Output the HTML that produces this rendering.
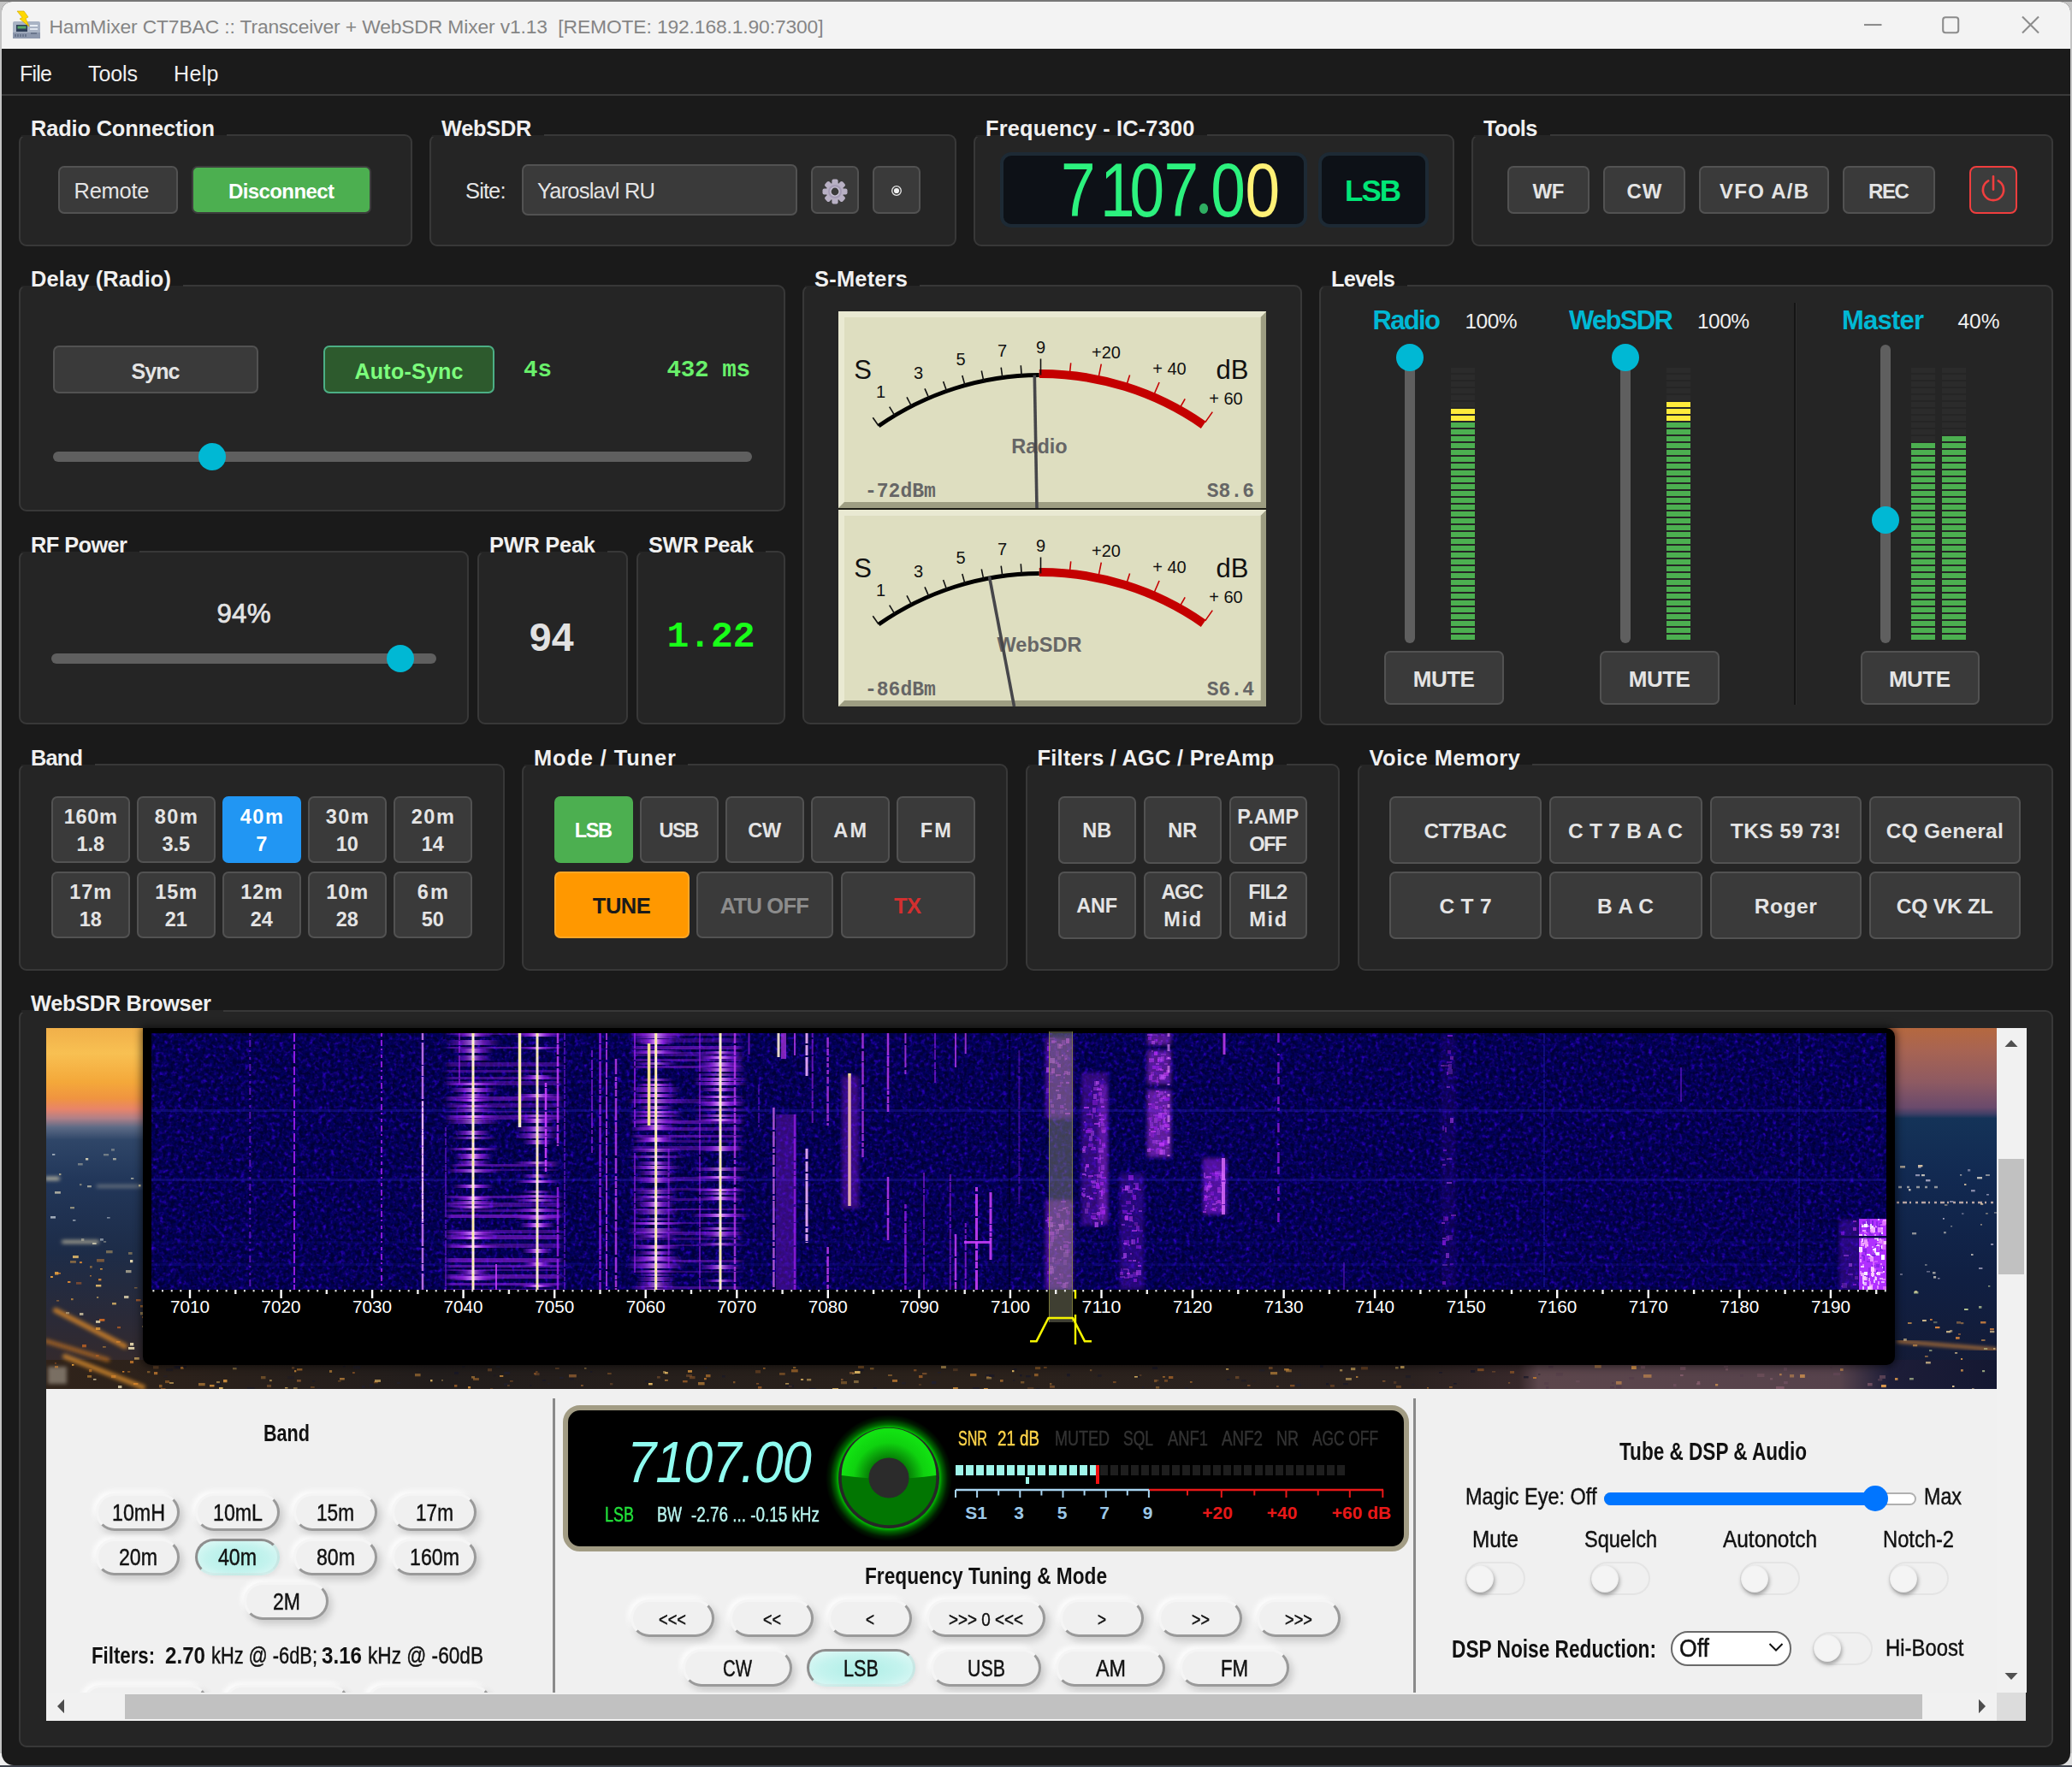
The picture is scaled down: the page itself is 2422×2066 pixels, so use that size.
<!DOCTYPE html>
<html><head><meta charset="utf-8"><title>HamMixer</title>
<style>
html,body{margin:0;padding:0;background:#1a1a1a;}
body{width:2422px;height:2066px;position:relative;overflow:hidden;font-family:"Liberation Sans",sans-serif;}
body div, body svg.abs{position:absolute;box-sizing:content-box;}
.t{white-space:pre;}
.seg{font:400 89px/96px "Liberation Sans",sans-serif;height:96px;transform:scaleX(0.82);transform-origin:0 50%;letter-spacing:-0.48px;}
.sdot{display:inline-block;width:17.7px;letter-spacing:0;text-align:center;font:700 76px/96px "Liberation Serif",serif;color:#2fae62;position:relative;top:-4px;left:-2px;}
</style></head><body>
<div style="left:0;top:0;width:2422px;height:2066px;background:#c4c4c4;"></div>
<div style="left:0;top:0;width:2422px;height:2px;background:#777;"></div>
<div style="left:0;top:2063px;width:2422px;height:3px;background:#3e424c;"></div>
<div style="left:0;top:2050px;width:16px;height:14px;background:#eee;"></div>
<div style="left:2406px;top:2050px;width:16px;height:14px;background:#ddd;"></div>
<div style="left:2px;top:2px;width:2418px;height:2062px;background:#1a1a1a;border-radius:12px 12px 14px 14px;"></div>
<div style="left:2.0px;top:2.0px;width:2418.0px;height:55.0px;background:#f3f3f3;border-radius:12px 12px 0 0;"></div>
<div style="left:2.0px;top:57.0px;width:2418.0px;height:1.0px;background:#fff;"></div>
<svg class="abs" style="left:14px;top:12px" width="34" height="34" viewBox="0 0 34 34"><rect x="1" y="13" width="32" height="20" rx="2" fill="#a9b3c4"/><rect x="1" y="26" width="32" height="7" fill="#8d98ad"/><rect x="5" y="17" width="13" height="8" fill="#2f3f58"/><rect x="6.5" y="18.5" width="10" height="3" fill="#58a868"/><rect x="21" y="17" width="9" height="2" fill="#e8edf4"/><rect x="21" y="21" width="9" height="2" fill="#dfe5ee"/><path d="M4 28 v3 M7 28 v3 M10 28 v3 M13 28 v3 M16 28 v3 M22 27 h7" stroke="#5f6b82" stroke-width="1.5"/><path d="M6 1 L14 1 L19 8 L16 9.5 L20 19 L9 10 L12 8.5 Z" fill="#ffd800" stroke="#c9a400" stroke-width="0.6"/></svg>
<div class="t" style="left:57.5px;top:16.0px;height:30px;line-height:30px;font:400 22.8px/30px 'Liberation Sans',sans-serif;color:#858585;letter-spacing:-0.11px;">HamMixer CT7BAC :: Transceiver + WebSDR Mixer v1.13  [REMOTE: 192.168.1.90:7300]</div>
<svg class="abs" style="left:2170px;top:8px" width="240" height="44" viewBox="0 0 240 44"><g stroke="#8c8c8c" stroke-width="2.1" fill="none"><path d="M9 21 H29.5"/><rect x="101.2" y="12.2" width="18" height="18" rx="3"/><path d="M194 11.5 L213 30.5 M213 11.5 L194 30.5"/></g></svg>
<div style="left:2.0px;top:57.0px;width:2418.0px;height:53.0px;background:#1b1b1b;"></div>
<div style="left:2.0px;top:110.0px;width:2418.0px;height:2.0px;background:#3a3a3a;"></div>
<div class="t" style="left:23.0px;top:70.0px;height:32px;line-height:32px;font:400 25px/32px 'Liberation Sans',sans-serif;color:#f0f0f0;letter-spacing:-0.76px;">File</div>
<div class="t" style="left:103.0px;top:70.0px;height:32px;line-height:32px;font:400 25px/32px 'Liberation Sans',sans-serif;color:#f0f0f0;letter-spacing:-0.09px;">Tools</div>
<div class="t" style="left:203.0px;top:70.0px;height:32px;line-height:32px;font:400 25px/32px 'Liberation Sans',sans-serif;color:#f0f0f0;letter-spacing:0.36px;">Help</div>
<div style="left:22.0px;top:157.0px;width:456.0px;height:127.0px;border:2px solid #383838;border-radius:9px;background:#252525;"></div>
<div style="left:25.0px;top:156.0px;width:240.0px;height:4.0px;background:#252525;"></div>
<div style="left:24.0px;top:143.0px;width:241.0px;height:14.5px;background:#1a1a1a;"></div>
<div class="t" style="left:36.0px;top:133.9px;height:33px;line-height:33px;font:700 25.4px/33px 'Liberation Sans',sans-serif;color:#f0f0f0;letter-spacing:-0.15px;">Radio Connection</div>
<div style="left:68.0px;top:194.0px;width:136.0px;height:52.0px;border:2px solid #525252;border-radius:7px;background:#3a3a3a;"></div>
<div class="t" style="left:86.5px;top:207.0px;height:33px;line-height:33px;font:400 25.5px/33px 'Liberation Sans',sans-serif;color:#e4e4e4;letter-spacing:-0.26px;">Remote</div>
<div style="left:224.0px;top:194.0px;width:206.0px;height:52.0px;border:2px solid #3d3d3d;border-radius:7px;background:#4caf50;"></div>
<div class="t" style="left:267.0px;top:208.0px;height:31px;line-height:31px;font:700 24px/31px 'Liberation Sans',sans-serif;color:#ffffff;letter-spacing:-0.60px;">Disconnect</div>
<div style="left:502.0px;top:157.0px;width:612.0px;height:127.0px;border:2px solid #383838;border-radius:9px;background:#252525;"></div>
<div style="left:505.0px;top:156.0px;width:130.5px;height:4.0px;background:#252525;"></div>
<div style="left:504.0px;top:143.0px;width:131.5px;height:14.5px;background:#1a1a1a;"></div>
<div class="t" style="left:516.0px;top:133.9px;height:33px;line-height:33px;font:700 25.4px/33px 'Liberation Sans',sans-serif;color:#f0f0f0;letter-spacing:-0.26px;">WebSDR</div>
<div class="t" style="left:544.0px;top:206.5px;height:33px;line-height:33px;font:400 25.5px/33px 'Liberation Sans',sans-serif;color:#e4e4e4;letter-spacing:-0.88px;">Site:</div>
<div style="left:610.0px;top:192.0px;width:318.0px;height:56.0px;border:2px solid #525252;border-radius:7px;background:#3a3a3a;"></div>
<div class="t" style="left:628.0px;top:206.5px;height:33px;line-height:33px;font:400 25.5px/33px 'Liberation Sans',sans-serif;color:#e4e4e4;letter-spacing:-0.81px;">Yaroslavl RU</div>
<div style="left:948.0px;top:194.0px;width:52.0px;height:52.0px;border:2px solid #525252;border-radius:7px;background:#3a3a3a;"></div>
<div style="left:1020.0px;top:194.0px;width:52.0px;height:52.0px;border:2px solid #525252;border-radius:7px;background:#3a3a3a;"></div>
<svg class="abs" style="left:960.3px;top:208px" width="32" height="32" viewBox="-16 -16 32 32"><g fill="#b8b0c4"><rect x="-3.6" y="-14.5" width="7.2" height="8" rx="2" transform="rotate(0)"/><rect x="-3.6" y="-14.5" width="7.2" height="8" rx="2" transform="rotate(45)"/><rect x="-3.6" y="-14.5" width="7.2" height="8" rx="2" transform="rotate(90)"/><rect x="-3.6" y="-14.5" width="7.2" height="8" rx="2" transform="rotate(135)"/><rect x="-3.6" y="-14.5" width="7.2" height="8" rx="2" transform="rotate(180)"/><rect x="-3.6" y="-14.5" width="7.2" height="8" rx="2" transform="rotate(225)"/><rect x="-3.6" y="-14.5" width="7.2" height="8" rx="2" transform="rotate(270)"/><rect x="-3.6" y="-14.5" width="7.2" height="8" rx="2" transform="rotate(315)"/></g><circle r="10.2" fill="#b8b0c4"/><circle r="8" fill="#a59cb5"/><circle r="5.8" fill="#cbc4d6"/><circle r="4.4" fill="#3a3a3a"/></svg>
<svg class="abs" style="left:1038.2px;top:213.4px" width="20" height="20" viewBox="-10 -10 20 20"><circle r="5.3" fill="none" stroke="#e8e8e8" stroke-width="1.3"/><circle r="3.1" fill="#f0f0f0"/></svg>
<div style="left:1138.0px;top:157.0px;width:558.0px;height:127.0px;border:2px solid #383838;border-radius:9px;background:#252525;"></div>
<div style="left:1141.0px;top:156.0px;width:269.5px;height:4.0px;background:#252525;"></div>
<div style="left:1140.0px;top:143.0px;width:270.5px;height:14.5px;background:#1a1a1a;"></div>
<div class="t" style="left:1152.0px;top:133.9px;height:33px;line-height:33px;font:700 25.4px/33px 'Liberation Sans',sans-serif;color:#f0f0f0;letter-spacing:0.17px;">Frequency - IC-7300</div>
<div style="left:1168.5px;top:178.0px;width:351.0px;height:80.0px;border:4px solid #1d2a35;border-radius:13px;background:#0d1117;"></div>
<div style="left:1540.5px;top:178.0px;width:121.0px;height:80.0px;border:4px solid #1d2a35;border-radius:13px;background:#0d1117;"></div>
<div class="t" style="left:1572.0px;top:199.5px;height:46px;line-height:46px;font:700 35px/46px 'Liberation Sans',sans-serif;color:#00e676;letter-spacing:-2.00px;">LSB</div>
<div class="t seg" style="left:1239.7px;top:174px;color:#2cf27e;">7<span style="position:relative;left:7px">1</span>07<span class="sdot">.</span>0<span style="color:#fff176">0</span></div>
<div style="left:1720.0px;top:157.0px;width:676.0px;height:127.0px;border:2px solid #383838;border-radius:9px;background:#252525;"></div>
<div style="left:1723.0px;top:156.0px;width:88.5px;height:4.0px;background:#252525;"></div>
<div style="left:1722.0px;top:143.0px;width:89.5px;height:14.5px;background:#1a1a1a;"></div>
<div class="t" style="left:1734.0px;top:133.9px;height:33px;line-height:33px;font:700 25.4px/33px 'Liberation Sans',sans-serif;color:#f0f0f0;letter-spacing:-0.59px;">Tools</div>
<div style="left:1762.0px;top:194.0px;width:92.0px;height:52.0px;border:2px solid #525252;border-radius:7px;background:#3a3a3a;"></div>
<div class="t" style="left:1791.5px;top:208.0px;height:31px;line-height:31px;font:700 24px/31px 'Liberation Sans',sans-serif;color:#e4e4e4;letter-spacing:-0.31px;">WF</div>
<div style="left:1874.0px;top:194.0px;width:92.0px;height:52.0px;border:2px solid #525252;border-radius:7px;background:#3a3a3a;"></div>
<div class="t" style="left:1901.5px;top:208.0px;height:31px;line-height:31px;font:700 24px/31px 'Liberation Sans',sans-serif;color:#e4e4e4;letter-spacing:1.02px;">CW</div>
<div style="left:1986.0px;top:194.0px;width:148.0px;height:52.0px;border:2px solid #525252;border-radius:7px;background:#3a3a3a;"></div>
<div class="t" style="left:2010.0px;top:208.0px;height:31px;line-height:31px;font:700 24px/31px 'Liberation Sans',sans-serif;color:#e4e4e4;letter-spacing:1.26px;">VFO A/B</div>
<div style="left:2154.0px;top:194.0px;width:104.0px;height:52.0px;border:2px solid #525252;border-radius:7px;background:#3a3a3a;"></div>
<div class="t" style="left:2184.1px;top:208.0px;height:31px;line-height:31px;font:700 24px/31px 'Liberation Sans',sans-serif;color:#e4e4e4;letter-spacing:-1.44px;">REC</div>
<div style="left:2302.0px;top:194.0px;width:52.0px;height:52.0px;border:2px solid #f03e3e;border-radius:8px;background:#3c3c3c;"></div>
<svg class="abs" style="left:2310px;top:202px" width="40" height="40" viewBox="-20 -20 40 40"><g fill="none" stroke="#f03e3e" stroke-width="2.6" stroke-linecap="round"><path d="M-5.8 -10.6 A 12.1 12.1 0 1 0 5.8 -10.6"/><path d="M0 -15.6 V-0.4"/></g></svg>
<div style="left:22.0px;top:333.0px;width:892.0px;height:261.0px;border:2px solid #383838;border-radius:9px;background:#252525;"></div>
<div style="left:25.0px;top:332.0px;width:189.0px;height:4.0px;background:#252525;"></div>
<div style="left:24.0px;top:319.0px;width:190.0px;height:14.5px;background:#1a1a1a;"></div>
<div class="t" style="left:36.0px;top:309.9px;height:33px;line-height:33px;font:700 25.4px/33px 'Liberation Sans',sans-serif;color:#f0f0f0;letter-spacing:0.14px;">Delay (Radio)</div>
<div style="left:62.0px;top:404.0px;width:236.0px;height:52.0px;border:2px solid #525252;border-radius:7px;background:#3a3a3a;"></div>
<div class="t" style="left:153.5px;top:417.5px;height:32px;line-height:32px;font:700 25px/32px 'Liberation Sans',sans-serif;color:#e4e4e4;letter-spacing:-0.92px;">Sync</div>
<div style="left:378.0px;top:404.0px;width:196.0px;height:52.0px;border:2px solid #4caf85;border-radius:7px;background:#2d5a2d;"></div>
<div class="t" style="left:414.5px;top:417.5px;height:32px;line-height:32px;font:700 25px/32px 'Liberation Sans',sans-serif;color:#7dff7d;letter-spacing:0.25px;">Auto-Sync</div>
<div class="t" style="left:612.0px;top:414.5px;height:36px;line-height:36px;font:700 27.5px/36px 'Liberation Mono',monospace;color:#69f06b;">4s</div>
<div class="t" style="left:779.5px;top:414.5px;height:36px;line-height:36px;font:700 27.5px/36px 'Liberation Mono',monospace;color:#69f06b;letter-spacing:-0.30px;">432 ms</div>
<div style="left:61.5px;top:527.5px;width:817.0px;height:12.0px;background:#5f5f5f;border-radius:6px;"></div>
<div style="left:231.7px;top:517.5px;width:32.0px;height:32.0px;background:#00b8d4;border-radius:50%;"></div>
<div style="left:22.0px;top:644.0px;width:522.0px;height:199.0px;border:2px solid #383838;border-radius:9px;background:#252525;"></div>
<div style="left:25.0px;top:643.0px;width:138.0px;height:4.0px;background:#252525;"></div>
<div style="left:24.0px;top:630.0px;width:139.0px;height:14.5px;background:#1a1a1a;"></div>
<div class="t" style="left:36.0px;top:620.9px;height:33px;line-height:33px;font:700 25.4px/33px 'Liberation Sans',sans-serif;color:#f0f0f0;letter-spacing:-0.59px;">RF Power</div>
<div class="t" style="left:253.5px;top:697.0px;height:41px;line-height:41px;font:400 31.3px/41px 'Liberation Sans',sans-serif;color:#e4e4e4;letter-spacing:0.18px;-webkit-text-stroke:0.7px #e4e4e4;">94%</div>
<div style="left:60.0px;top:763.5px;width:450.0px;height:12.0px;background:#5f5f5f;border-radius:6px;"></div>
<div style="left:451.8px;top:753.5px;width:32.0px;height:32.0px;background:#00b8d4;border-radius:50%;"></div>
<div style="left:558.0px;top:644.0px;width:172.0px;height:199.0px;border:2px solid #383838;border-radius:9px;background:#252525;"></div>
<div style="left:561.0px;top:643.0px;width:149.0px;height:4.0px;background:#252525;"></div>
<div style="left:560.0px;top:630.0px;width:150.0px;height:14.5px;background:#1a1a1a;"></div>
<div class="t" style="left:572.0px;top:620.9px;height:33px;line-height:33px;font:700 25.4px/33px 'Liberation Sans',sans-serif;color:#f0f0f0;letter-spacing:-0.23px;">PWR Peak</div>
<div class="t" style="left:618.7px;top:715.0px;height:60px;line-height:60px;font:700 46.5px/60px 'Liberation Sans',sans-serif;color:#e2e2e2;letter-spacing:0.28px;">94</div>
<div style="left:744.0px;top:644.0px;width:170.0px;height:199.0px;border:2px solid #383838;border-radius:9px;background:#252525;"></div>
<div style="left:747.0px;top:643.0px;width:148.0px;height:4.0px;background:#252525;"></div>
<div style="left:746.0px;top:630.0px;width:149.0px;height:14.5px;background:#1a1a1a;"></div>
<div class="t" style="left:758.0px;top:620.9px;height:33px;line-height:33px;font:700 25.4px/33px 'Liberation Sans',sans-serif;color:#f0f0f0;letter-spacing:-0.38px;">SWR Peak</div>
<div class="t" style="left:779.5px;top:717.0px;height:56px;line-height:56px;font:700 43px/56px 'Liberation Mono',monospace;color:#19ff19;letter-spacing:-0.07px;">1.22</div>
<div style="left:938.0px;top:333.0px;width:580.0px;height:510.0px;border:2px solid #383838;border-radius:9px;background:#252525;"></div>
<div style="left:941.0px;top:332.0px;width:134.0px;height:4.0px;background:#252525;"></div>
<div style="left:940.0px;top:319.0px;width:135.0px;height:14.5px;background:#1a1a1a;"></div>
<div class="t" style="left:952.0px;top:309.9px;height:33px;line-height:33px;font:700 25.4px/33px 'Liberation Sans',sans-serif;color:#f0f0f0;letter-spacing:0.25px;">S-Meters</div>
<svg class="abs" style="left:979.5px;top:364px" width="500.5" height="230" viewBox="0 0 500.5 230"><rect width="500.5" height="230" fill="#dedec0"/><path d="M0 0 H500.5 L493.5 7 H7 V223 L0 230 Z" fill="#e9e9d2"/><path d="M500.5 230 H0 L7 223 H493.5 V7 L500.5 0 Z" fill="#9d9d82"/><rect x="7" y="7" width="486.5" height="216" fill="#dedec0"/><path d="M47.1 134.0 A331.0 331.0 0 0 1 234.8 74.5" fill="none" stroke="#000" stroke-width="4.8"/><path d="M234.8 73.0 A332.5 332.5 0 0 1 426.7 132.8" fill="none" stroke="#c40000" stroke-width="10"/><path d="M47.1 134.0 L40.3 124.2" stroke="#111" stroke-width="1.6"/><path d="M65.9 121.8 L59.7 111.6" stroke="#111" stroke-width="1.6"/><path d="M85.5 111.0 L80.0 100.3" stroke="#111" stroke-width="1.6"/><path d="M105.8 101.4 L101.0 90.4" stroke="#111" stroke-width="1.6"/><path d="M126.6 93.3 L122.6 82.0" stroke="#111" stroke-width="1.6"/><path d="M148.0 86.6 L144.8 75.0" stroke="#111" stroke-width="1.6"/><path d="M169.8 81.3 L167.3 69.5" stroke="#111" stroke-width="1.6"/><path d="M191.8 77.5 L190.2 65.6" stroke="#111" stroke-width="1.6"/><path d="M214.1 75.3 L213.3 63.3" stroke="#111" stroke-width="1.6"/><path d="M236.5 74.5 L236.5 55.5" stroke="#111" stroke-width="1.6"/><path d="M270.6 71.2 L271.7 60.3" stroke="#c40000" stroke-width="1.6"/><path d="M304.3 76.4 L307.3 61.7" stroke="#c40000" stroke-width="1.6"/><path d="M337.3 85.0 L340.6 74.5" stroke="#c40000" stroke-width="1.6"/><path d="M369.2 96.8 L375.1 83.0" stroke="#c40000" stroke-width="1.6"/><path d="M399.8 111.9 L405.2 102.3" stroke="#c40000" stroke-width="1.6"/><path d="M428.7 129.9 L437.3 117.6" stroke="#c40000" stroke-width="1.6"/><text x="28.5" y="79.0" font-family="'Liberation Sans',sans-serif" font-size="31" font-weight="400" fill="#111" text-anchor="middle">S</text><text x="49.5" y="101.0" font-family="'Liberation Sans',sans-serif" font-size="20" font-weight="400" fill="#111" text-anchor="middle">1</text><text x="93.5" y="79.0" font-family="'Liberation Sans',sans-serif" font-size="20" font-weight="400" fill="#111" text-anchor="middle">3</text><text x="143.0" y="63.0" font-family="'Liberation Sans',sans-serif" font-size="20" font-weight="400" fill="#111" text-anchor="middle">5</text><text x="191.5" y="53.0" font-family="'Liberation Sans',sans-serif" font-size="20" font-weight="400" fill="#111" text-anchor="middle">7</text><text x="236.5" y="49.0" font-family="'Liberation Sans',sans-serif" font-size="20" font-weight="400" fill="#111" text-anchor="middle">9</text><text x="313.0" y="54.5" font-family="'Liberation Sans',sans-serif" font-size="20" font-weight="400" fill="#111" text-anchor="middle">+20</text><text x="387.0" y="74.0" font-family="'Liberation Sans',sans-serif" font-size="20" font-weight="400" fill="#111" text-anchor="middle">+ 40</text><text x="460.5" y="79.0" font-family="'Liberation Sans',sans-serif" font-size="31" font-weight="400" fill="#111" text-anchor="middle">dB</text><text x="453.0" y="109.0" font-family="'Liberation Sans',sans-serif" font-size="20" font-weight="400" fill="#111" text-anchor="middle">+ 60</text><text x="235.0" y="166.0" font-family="'Liberation Sans',sans-serif" font-size="23.5" font-weight="700" fill="#666" text-anchor="middle">Radio</text><text x="31.0" y="216.5" font-family="'Liberation Mono',monospace" font-size="23" font-weight="700" fill="#666" text-anchor="start">-72dBm</text><text x="486.0" y="216.5" font-family="'Liberation Mono',monospace" font-size="23" font-weight="700" fill="#666" text-anchor="end">S8.6</text><path d="M229.3 74.5 L232 230" stroke="#46464a" stroke-width="3.6"/></svg>
<div style="left:979.5px;top:594.0px;width:500.5px;height:2.3px;background:#1c1c14;"></div>
<svg class="abs" style="left:979.5px;top:596.3px" width="500.5" height="230" viewBox="0 0 500.5 230"><rect width="500.5" height="230" fill="#dedec0"/><path d="M0 0 H500.5 L493.5 7 H7 V223 L0 230 Z" fill="#e9e9d2"/><path d="M500.5 230 H0 L7 223 H493.5 V7 L500.5 0 Z" fill="#9d9d82"/><rect x="7" y="7" width="486.5" height="216" fill="#dedec0"/><path d="M47.1 134.0 A331.0 331.0 0 0 1 234.8 74.5" fill="none" stroke="#000" stroke-width="4.8"/><path d="M234.8 73.0 A332.5 332.5 0 0 1 426.7 132.8" fill="none" stroke="#c40000" stroke-width="10"/><path d="M47.1 134.0 L40.3 124.2" stroke="#111" stroke-width="1.6"/><path d="M65.9 121.8 L59.7 111.6" stroke="#111" stroke-width="1.6"/><path d="M85.5 111.0 L80.0 100.3" stroke="#111" stroke-width="1.6"/><path d="M105.8 101.4 L101.0 90.4" stroke="#111" stroke-width="1.6"/><path d="M126.6 93.3 L122.6 82.0" stroke="#111" stroke-width="1.6"/><path d="M148.0 86.6 L144.8 75.0" stroke="#111" stroke-width="1.6"/><path d="M169.8 81.3 L167.3 69.5" stroke="#111" stroke-width="1.6"/><path d="M191.8 77.5 L190.2 65.6" stroke="#111" stroke-width="1.6"/><path d="M214.1 75.3 L213.3 63.3" stroke="#111" stroke-width="1.6"/><path d="M236.5 74.5 L236.5 55.5" stroke="#111" stroke-width="1.6"/><path d="M270.6 71.2 L271.7 60.3" stroke="#c40000" stroke-width="1.6"/><path d="M304.3 76.4 L307.3 61.7" stroke="#c40000" stroke-width="1.6"/><path d="M337.3 85.0 L340.6 74.5" stroke="#c40000" stroke-width="1.6"/><path d="M369.2 96.8 L375.1 83.0" stroke="#c40000" stroke-width="1.6"/><path d="M399.8 111.9 L405.2 102.3" stroke="#c40000" stroke-width="1.6"/><path d="M428.7 129.9 L437.3 117.6" stroke="#c40000" stroke-width="1.6"/><text x="28.5" y="79.0" font-family="'Liberation Sans',sans-serif" font-size="31" font-weight="400" fill="#111" text-anchor="middle">S</text><text x="49.5" y="101.0" font-family="'Liberation Sans',sans-serif" font-size="20" font-weight="400" fill="#111" text-anchor="middle">1</text><text x="93.5" y="79.0" font-family="'Liberation Sans',sans-serif" font-size="20" font-weight="400" fill="#111" text-anchor="middle">3</text><text x="143.0" y="63.0" font-family="'Liberation Sans',sans-serif" font-size="20" font-weight="400" fill="#111" text-anchor="middle">5</text><text x="191.5" y="53.0" font-family="'Liberation Sans',sans-serif" font-size="20" font-weight="400" fill="#111" text-anchor="middle">7</text><text x="236.5" y="49.0" font-family="'Liberation Sans',sans-serif" font-size="20" font-weight="400" fill="#111" text-anchor="middle">9</text><text x="313.0" y="54.5" font-family="'Liberation Sans',sans-serif" font-size="20" font-weight="400" fill="#111" text-anchor="middle">+20</text><text x="387.0" y="74.0" font-family="'Liberation Sans',sans-serif" font-size="20" font-weight="400" fill="#111" text-anchor="middle">+ 40</text><text x="460.5" y="79.0" font-family="'Liberation Sans',sans-serif" font-size="31" font-weight="400" fill="#111" text-anchor="middle">dB</text><text x="453.0" y="109.0" font-family="'Liberation Sans',sans-serif" font-size="20" font-weight="400" fill="#111" text-anchor="middle">+ 60</text><text x="235.0" y="166.0" font-family="'Liberation Sans',sans-serif" font-size="23.5" font-weight="700" fill="#666" text-anchor="middle">WebSDR</text><text x="31.0" y="216.5" font-family="'Liberation Mono',monospace" font-size="23" font-weight="700" fill="#666" text-anchor="start">-86dBm</text><text x="486.0" y="216.5" font-family="'Liberation Mono',monospace" font-size="23" font-weight="700" fill="#666" text-anchor="end">S6.4</text><path d="M176.5 78.2 L205.5 230" stroke="#46464a" stroke-width="3.6"/></svg>
<div style="left:1542.0px;top:333.0px;width:854.0px;height:511.0px;border:2px solid #383838;border-radius:9px;background:#252525;"></div>
<div style="left:1545.0px;top:332.0px;width:100.0px;height:4.0px;background:#252525;"></div>
<div style="left:1544.0px;top:319.0px;width:101.0px;height:14.5px;background:#1a1a1a;"></div>
<div class="t" style="left:1556.0px;top:309.9px;height:33px;line-height:33px;font:700 25.4px/33px 'Liberation Sans',sans-serif;color:#f0f0f0;letter-spacing:-0.82px;">Levels</div>
<div class="t" style="left:1604.5px;top:355.0px;height:40px;line-height:40px;font:700 31px/40px 'Liberation Sans',sans-serif;color:#00b8d4;letter-spacing:-1.65px;">Radio</div>
<div class="t" style="left:1712.5px;top:360.0px;height:32px;line-height:32px;font:400 24.5px/32px 'Liberation Sans',sans-serif;color:#f0f0f0;letter-spacing:-0.55px;">100%</div>
<div style="left:1642.0px;top:403.0px;width:12.0px;height:349.0px;background:#5f5f5f;border-radius:6px;"></div>
<div style="left:1632.0px;top:402.0px;width:32.0px;height:32.0px;background:#00b8d4;border-radius:50%;"></div>
<div style="left:1695.7px;top:430.0px;width:28.3px;height:320.0px;"><div style="left:0;top:0px;width:28.3px;height:6px;background:#2b2b2b"></div><div style="left:0;top:8px;width:28.3px;height:6px;background:#2b2b2b"></div><div style="left:0;top:16px;width:28.3px;height:6px;background:#2b2b2b"></div><div style="left:0;top:24px;width:28.3px;height:6px;background:#2b2b2b"></div><div style="left:0;top:32px;width:28.3px;height:6px;background:#2b2b2b"></div><div style="left:0;top:40px;width:28.3px;height:6px;background:#2b2b2b"></div><div style="left:0;top:48px;width:28.3px;height:6px;background:#ffeb3b"></div><div style="left:0;top:56px;width:28.3px;height:6px;background:#ffeb3b"></div><div style="left:0;top:64px;width:28.3px;height:6px;background:#4caf50"></div><div style="left:0;top:72px;width:28.3px;height:6px;background:#4caf50"></div><div style="left:0;top:80px;width:28.3px;height:6px;background:#4caf50"></div><div style="left:0;top:88px;width:28.3px;height:6px;background:#4caf50"></div><div style="left:0;top:96px;width:28.3px;height:6px;background:#4caf50"></div><div style="left:0;top:104px;width:28.3px;height:6px;background:#4caf50"></div><div style="left:0;top:112px;width:28.3px;height:6px;background:#4caf50"></div><div style="left:0;top:120px;width:28.3px;height:6px;background:#4caf50"></div><div style="left:0;top:128px;width:28.3px;height:6px;background:#4caf50"></div><div style="left:0;top:136px;width:28.3px;height:6px;background:#4caf50"></div><div style="left:0;top:144px;width:28.3px;height:6px;background:#4caf50"></div><div style="left:0;top:152px;width:28.3px;height:6px;background:#4caf50"></div><div style="left:0;top:160px;width:28.3px;height:6px;background:#4caf50"></div><div style="left:0;top:168px;width:28.3px;height:6px;background:#4caf50"></div><div style="left:0;top:176px;width:28.3px;height:6px;background:#4caf50"></div><div style="left:0;top:184px;width:28.3px;height:6px;background:#4caf50"></div><div style="left:0;top:192px;width:28.3px;height:6px;background:#4caf50"></div><div style="left:0;top:200px;width:28.3px;height:6px;background:#4caf50"></div><div style="left:0;top:208px;width:28.3px;height:6px;background:#4caf50"></div><div style="left:0;top:216px;width:28.3px;height:6px;background:#4caf50"></div><div style="left:0;top:224px;width:28.3px;height:6px;background:#4caf50"></div><div style="left:0;top:232px;width:28.3px;height:6px;background:#4caf50"></div><div style="left:0;top:240px;width:28.3px;height:6px;background:#4caf50"></div><div style="left:0;top:248px;width:28.3px;height:6px;background:#4caf50"></div><div style="left:0;top:256px;width:28.3px;height:6px;background:#4caf50"></div><div style="left:0;top:264px;width:28.3px;height:6px;background:#4caf50"></div><div style="left:0;top:272px;width:28.3px;height:6px;background:#4caf50"></div><div style="left:0;top:280px;width:28.3px;height:6px;background:#4caf50"></div><div style="left:0;top:288px;width:28.3px;height:6px;background:#4caf50"></div><div style="left:0;top:296px;width:28.3px;height:6px;background:#4caf50"></div><div style="left:0;top:304px;width:28.3px;height:6px;background:#4caf50"></div><div style="left:0;top:312px;width:28.3px;height:6px;background:#4caf50"></div></div>
<div style="left:1618.0px;top:760.5px;width:135.5px;height:59.0px;border:2px solid #525252;border-radius:7px;background:#3a3a3a;"></div>
<div class="t" style="left:1651.8px;top:776.5px;height:34px;line-height:34px;font:700 26px/34px 'Liberation Sans',sans-serif;color:#e4e4e4;letter-spacing:-0.55px;">MUTE</div>
<div class="t" style="left:1834.0px;top:355.0px;height:40px;line-height:40px;font:700 31px/40px 'Liberation Sans',sans-serif;color:#00b8d4;letter-spacing:-1.67px;">WebSDR</div>
<div class="t" style="left:1984.0px;top:360.0px;height:32px;line-height:32px;font:400 24.5px/32px 'Liberation Sans',sans-serif;color:#f0f0f0;letter-spacing:-0.55px;">100%</div>
<div style="left:1893.8px;top:403.0px;width:12.0px;height:349.0px;background:#5f5f5f;border-radius:6px;"></div>
<div style="left:1883.8px;top:402.0px;width:32.0px;height:32.0px;background:#00b8d4;border-radius:50%;"></div>
<div style="left:1948.0px;top:430.0px;width:28.3px;height:320.0px;"><div style="left:0;top:0px;width:28.3px;height:6px;background:#2b2b2b"></div><div style="left:0;top:8px;width:28.3px;height:6px;background:#2b2b2b"></div><div style="left:0;top:16px;width:28.3px;height:6px;background:#2b2b2b"></div><div style="left:0;top:24px;width:28.3px;height:6px;background:#2b2b2b"></div><div style="left:0;top:32px;width:28.3px;height:6px;background:#2b2b2b"></div><div style="left:0;top:40px;width:28.3px;height:6px;background:#ffeb3b"></div><div style="left:0;top:48px;width:28.3px;height:6px;background:#ffeb3b"></div><div style="left:0;top:56px;width:28.3px;height:6px;background:#ffeb3b"></div><div style="left:0;top:64px;width:28.3px;height:6px;background:#4caf50"></div><div style="left:0;top:72px;width:28.3px;height:6px;background:#4caf50"></div><div style="left:0;top:80px;width:28.3px;height:6px;background:#4caf50"></div><div style="left:0;top:88px;width:28.3px;height:6px;background:#4caf50"></div><div style="left:0;top:96px;width:28.3px;height:6px;background:#4caf50"></div><div style="left:0;top:104px;width:28.3px;height:6px;background:#4caf50"></div><div style="left:0;top:112px;width:28.3px;height:6px;background:#4caf50"></div><div style="left:0;top:120px;width:28.3px;height:6px;background:#4caf50"></div><div style="left:0;top:128px;width:28.3px;height:6px;background:#4caf50"></div><div style="left:0;top:136px;width:28.3px;height:6px;background:#4caf50"></div><div style="left:0;top:144px;width:28.3px;height:6px;background:#4caf50"></div><div style="left:0;top:152px;width:28.3px;height:6px;background:#4caf50"></div><div style="left:0;top:160px;width:28.3px;height:6px;background:#4caf50"></div><div style="left:0;top:168px;width:28.3px;height:6px;background:#4caf50"></div><div style="left:0;top:176px;width:28.3px;height:6px;background:#4caf50"></div><div style="left:0;top:184px;width:28.3px;height:6px;background:#4caf50"></div><div style="left:0;top:192px;width:28.3px;height:6px;background:#4caf50"></div><div style="left:0;top:200px;width:28.3px;height:6px;background:#4caf50"></div><div style="left:0;top:208px;width:28.3px;height:6px;background:#4caf50"></div><div style="left:0;top:216px;width:28.3px;height:6px;background:#4caf50"></div><div style="left:0;top:224px;width:28.3px;height:6px;background:#4caf50"></div><div style="left:0;top:232px;width:28.3px;height:6px;background:#4caf50"></div><div style="left:0;top:240px;width:28.3px;height:6px;background:#4caf50"></div><div style="left:0;top:248px;width:28.3px;height:6px;background:#4caf50"></div><div style="left:0;top:256px;width:28.3px;height:6px;background:#4caf50"></div><div style="left:0;top:264px;width:28.3px;height:6px;background:#4caf50"></div><div style="left:0;top:272px;width:28.3px;height:6px;background:#4caf50"></div><div style="left:0;top:280px;width:28.3px;height:6px;background:#4caf50"></div><div style="left:0;top:288px;width:28.3px;height:6px;background:#4caf50"></div><div style="left:0;top:296px;width:28.3px;height:6px;background:#4caf50"></div><div style="left:0;top:304px;width:28.3px;height:6px;background:#4caf50"></div><div style="left:0;top:312px;width:28.3px;height:6px;background:#4caf50"></div></div>
<div style="left:1870.0px;top:760.5px;width:135.5px;height:59.0px;border:2px solid #525252;border-radius:7px;background:#3a3a3a;"></div>
<div class="t" style="left:1903.8px;top:776.5px;height:34px;line-height:34px;font:700 26px/34px 'Liberation Sans',sans-serif;color:#e4e4e4;letter-spacing:-0.55px;">MUTE</div>
<div style="left:2097.0px;top:354.0px;width:2.0px;height:470.0px;background:#141414;"></div>
<div style="left:2099.0px;top:354.0px;width:1.0px;height:470.0px;background:#2e2e2e;"></div>
<div class="t" style="left:2153.0px;top:355.0px;height:40px;line-height:40px;font:700 31px/40px 'Liberation Sans',sans-serif;color:#00b8d4;letter-spacing:-0.79px;">Master</div>
<div class="t" style="left:2288.5px;top:360.0px;height:32px;line-height:32px;font:400 24.5px/32px 'Liberation Sans',sans-serif;color:#f0f0f0;letter-spacing:-0.02px;">40%</div>
<div style="left:2197.7px;top:403.0px;width:12.0px;height:349.0px;background:#5f5f5f;border-radius:6px;"></div>
<div style="left:2187.7px;top:591.8px;width:32.0px;height:32.0px;background:#00b8d4;border-radius:50%;"></div>
<div style="left:2233.8px;top:430.0px;width:28.3px;height:320.0px;"><div style="left:0;top:0px;width:28.3px;height:6px;background:#2b2b2b"></div><div style="left:0;top:8px;width:28.3px;height:6px;background:#2b2b2b"></div><div style="left:0;top:16px;width:28.3px;height:6px;background:#2b2b2b"></div><div style="left:0;top:24px;width:28.3px;height:6px;background:#2b2b2b"></div><div style="left:0;top:32px;width:28.3px;height:6px;background:#2b2b2b"></div><div style="left:0;top:40px;width:28.3px;height:6px;background:#2b2b2b"></div><div style="left:0;top:48px;width:28.3px;height:6px;background:#2b2b2b"></div><div style="left:0;top:56px;width:28.3px;height:6px;background:#2b2b2b"></div><div style="left:0;top:64px;width:28.3px;height:6px;background:#2b2b2b"></div><div style="left:0;top:72px;width:28.3px;height:6px;background:#2b2b2b"></div><div style="left:0;top:80px;width:28.3px;height:6px;background:#2b2b2b"></div><div style="left:0;top:88px;width:28.3px;height:6px;background:#4caf50"></div><div style="left:0;top:96px;width:28.3px;height:6px;background:#4caf50"></div><div style="left:0;top:104px;width:28.3px;height:6px;background:#4caf50"></div><div style="left:0;top:112px;width:28.3px;height:6px;background:#4caf50"></div><div style="left:0;top:120px;width:28.3px;height:6px;background:#4caf50"></div><div style="left:0;top:128px;width:28.3px;height:6px;background:#4caf50"></div><div style="left:0;top:136px;width:28.3px;height:6px;background:#4caf50"></div><div style="left:0;top:144px;width:28.3px;height:6px;background:#4caf50"></div><div style="left:0;top:152px;width:28.3px;height:6px;background:#4caf50"></div><div style="left:0;top:160px;width:28.3px;height:6px;background:#4caf50"></div><div style="left:0;top:168px;width:28.3px;height:6px;background:#4caf50"></div><div style="left:0;top:176px;width:28.3px;height:6px;background:#4caf50"></div><div style="left:0;top:184px;width:28.3px;height:6px;background:#4caf50"></div><div style="left:0;top:192px;width:28.3px;height:6px;background:#4caf50"></div><div style="left:0;top:200px;width:28.3px;height:6px;background:#4caf50"></div><div style="left:0;top:208px;width:28.3px;height:6px;background:#4caf50"></div><div style="left:0;top:216px;width:28.3px;height:6px;background:#4caf50"></div><div style="left:0;top:224px;width:28.3px;height:6px;background:#4caf50"></div><div style="left:0;top:232px;width:28.3px;height:6px;background:#4caf50"></div><div style="left:0;top:240px;width:28.3px;height:6px;background:#4caf50"></div><div style="left:0;top:248px;width:28.3px;height:6px;background:#4caf50"></div><div style="left:0;top:256px;width:28.3px;height:6px;background:#4caf50"></div><div style="left:0;top:264px;width:28.3px;height:6px;background:#4caf50"></div><div style="left:0;top:272px;width:28.3px;height:6px;background:#4caf50"></div><div style="left:0;top:280px;width:28.3px;height:6px;background:#4caf50"></div><div style="left:0;top:288px;width:28.3px;height:6px;background:#4caf50"></div><div style="left:0;top:296px;width:28.3px;height:6px;background:#4caf50"></div><div style="left:0;top:304px;width:28.3px;height:6px;background:#4caf50"></div><div style="left:0;top:312px;width:28.3px;height:6px;background:#4caf50"></div></div>
<div style="left:2270.0px;top:430.0px;width:28.3px;height:320.0px;"><div style="left:0;top:0px;width:28.3px;height:6px;background:#2b2b2b"></div><div style="left:0;top:8px;width:28.3px;height:6px;background:#2b2b2b"></div><div style="left:0;top:16px;width:28.3px;height:6px;background:#2b2b2b"></div><div style="left:0;top:24px;width:28.3px;height:6px;background:#2b2b2b"></div><div style="left:0;top:32px;width:28.3px;height:6px;background:#2b2b2b"></div><div style="left:0;top:40px;width:28.3px;height:6px;background:#2b2b2b"></div><div style="left:0;top:48px;width:28.3px;height:6px;background:#2b2b2b"></div><div style="left:0;top:56px;width:28.3px;height:6px;background:#2b2b2b"></div><div style="left:0;top:64px;width:28.3px;height:6px;background:#2b2b2b"></div><div style="left:0;top:72px;width:28.3px;height:6px;background:#2b2b2b"></div><div style="left:0;top:80px;width:28.3px;height:6px;background:#4caf50"></div><div style="left:0;top:88px;width:28.3px;height:6px;background:#4caf50"></div><div style="left:0;top:96px;width:28.3px;height:6px;background:#4caf50"></div><div style="left:0;top:104px;width:28.3px;height:6px;background:#4caf50"></div><div style="left:0;top:112px;width:28.3px;height:6px;background:#4caf50"></div><div style="left:0;top:120px;width:28.3px;height:6px;background:#4caf50"></div><div style="left:0;top:128px;width:28.3px;height:6px;background:#4caf50"></div><div style="left:0;top:136px;width:28.3px;height:6px;background:#4caf50"></div><div style="left:0;top:144px;width:28.3px;height:6px;background:#4caf50"></div><div style="left:0;top:152px;width:28.3px;height:6px;background:#4caf50"></div><div style="left:0;top:160px;width:28.3px;height:6px;background:#4caf50"></div><div style="left:0;top:168px;width:28.3px;height:6px;background:#4caf50"></div><div style="left:0;top:176px;width:28.3px;height:6px;background:#4caf50"></div><div style="left:0;top:184px;width:28.3px;height:6px;background:#4caf50"></div><div style="left:0;top:192px;width:28.3px;height:6px;background:#4caf50"></div><div style="left:0;top:200px;width:28.3px;height:6px;background:#4caf50"></div><div style="left:0;top:208px;width:28.3px;height:6px;background:#4caf50"></div><div style="left:0;top:216px;width:28.3px;height:6px;background:#4caf50"></div><div style="left:0;top:224px;width:28.3px;height:6px;background:#4caf50"></div><div style="left:0;top:232px;width:28.3px;height:6px;background:#4caf50"></div><div style="left:0;top:240px;width:28.3px;height:6px;background:#4caf50"></div><div style="left:0;top:248px;width:28.3px;height:6px;background:#4caf50"></div><div style="left:0;top:256px;width:28.3px;height:6px;background:#4caf50"></div><div style="left:0;top:264px;width:28.3px;height:6px;background:#4caf50"></div><div style="left:0;top:272px;width:28.3px;height:6px;background:#4caf50"></div><div style="left:0;top:280px;width:28.3px;height:6px;background:#4caf50"></div><div style="left:0;top:288px;width:28.3px;height:6px;background:#4caf50"></div><div style="left:0;top:296px;width:28.3px;height:6px;background:#4caf50"></div><div style="left:0;top:304px;width:28.3px;height:6px;background:#4caf50"></div><div style="left:0;top:312px;width:28.3px;height:6px;background:#4caf50"></div></div>
<div style="left:2174.5px;top:760.5px;width:135.0px;height:59.0px;border:2px solid #525252;border-radius:7px;background:#3a3a3a;"></div>
<div class="t" style="left:2208.0px;top:776.5px;height:34px;line-height:34px;font:700 26px/34px 'Liberation Sans',sans-serif;color:#e4e4e4;letter-spacing:-0.55px;">MUTE</div>
<div style="left:22.0px;top:893.0px;width:563.5px;height:238.0px;border:2px solid #383838;border-radius:9px;background:#252525;"></div>
<div style="left:25.0px;top:892.0px;width:86.0px;height:4.0px;background:#252525;"></div>
<div style="left:24.0px;top:879.0px;width:87.0px;height:14.5px;background:#1a1a1a;"></div>
<div class="t" style="left:36.0px;top:869.9px;height:33px;line-height:33px;font:700 25.4px/33px 'Liberation Sans',sans-serif;color:#f0f0f0;letter-spacing:-0.83px;">Band</div>
<div style="left:60.0px;top:930.5px;width:87.5px;height:74.5px;border:2px solid #525252;border-radius:7px;background:#3a3a3a;"></div>
<div class="t" style="left:74.8px;top:939.8px;height:31px;line-height:31px;font:700 23.5px/31px 'Liberation Sans',sans-serif;color:#e4e4e4;letter-spacing:0.63px;">160m</div>
<div class="t" style="left:89.4px;top:971.7px;height:31px;line-height:31px;font:700 23.5px/31px 'Liberation Sans',sans-serif;color:#e4e4e4;">1.8</div>
<div style="left:160.0px;top:930.5px;width:87.5px;height:74.5px;border:2px solid #525252;border-radius:7px;background:#3a3a3a;"></div>
<div class="t" style="left:180.8px;top:939.8px;height:31px;line-height:31px;font:700 23.5px/31px 'Liberation Sans',sans-serif;color:#e4e4e4;letter-spacing:1.48px;">80m</div>
<div class="t" style="left:189.4px;top:971.7px;height:31px;line-height:31px;font:700 23.5px/31px 'Liberation Sans',sans-serif;color:#e4e4e4;">3.5</div>
<div style="left:260.0px;top:930.5px;width:87.5px;height:74.5px;border:2px solid #2196f3;border-radius:7px;background:#2196f3;"></div>
<div class="t" style="left:280.8px;top:939.8px;height:31px;line-height:31px;font:700 23.5px/31px 'Liberation Sans',sans-serif;color:#ffffff;letter-spacing:1.48px;">40m</div>
<div class="t" style="left:299.2px;top:971.7px;height:31px;line-height:31px;font:700 23.5px/31px 'Liberation Sans',sans-serif;color:#ffffff;">7</div>
<div style="left:360.0px;top:930.5px;width:87.5px;height:74.5px;border:2px solid #525252;border-radius:7px;background:#3a3a3a;"></div>
<div class="t" style="left:380.8px;top:939.8px;height:31px;line-height:31px;font:700 23.5px/31px 'Liberation Sans',sans-serif;color:#e4e4e4;letter-spacing:1.48px;">30m</div>
<div class="t" style="left:392.7px;top:971.7px;height:31px;line-height:31px;font:700 23.5px/31px 'Liberation Sans',sans-serif;color:#e4e4e4;">10</div>
<div style="left:460.0px;top:930.5px;width:87.5px;height:74.5px;border:2px solid #525252;border-radius:7px;background:#3a3a3a;"></div>
<div class="t" style="left:480.8px;top:939.8px;height:31px;line-height:31px;font:700 23.5px/31px 'Liberation Sans',sans-serif;color:#e4e4e4;letter-spacing:1.48px;">20m</div>
<div class="t" style="left:492.7px;top:971.7px;height:31px;line-height:31px;font:700 23.5px/31px 'Liberation Sans',sans-serif;color:#e4e4e4;">14</div>
<div style="left:60.0px;top:1018.5px;width:87.5px;height:74.5px;border:2px solid #525252;border-radius:7px;background:#3a3a3a;"></div>
<div class="t" style="left:81.2px;top:1027.8px;height:31px;line-height:31px;font:700 23.5px/31px 'Liberation Sans',sans-serif;color:#e4e4e4;letter-spacing:0.98px;">17m</div>
<div class="t" style="left:92.7px;top:1059.7px;height:31px;line-height:31px;font:700 23.5px/31px 'Liberation Sans',sans-serif;color:#e4e4e4;">18</div>
<div style="left:160.0px;top:1018.5px;width:87.5px;height:74.5px;border:2px solid #525252;border-radius:7px;background:#3a3a3a;"></div>
<div class="t" style="left:181.2px;top:1027.8px;height:31px;line-height:31px;font:700 23.5px/31px 'Liberation Sans',sans-serif;color:#e4e4e4;letter-spacing:0.98px;">15m</div>
<div class="t" style="left:192.7px;top:1059.7px;height:31px;line-height:31px;font:700 23.5px/31px 'Liberation Sans',sans-serif;color:#e4e4e4;">21</div>
<div style="left:260.0px;top:1018.5px;width:87.5px;height:74.5px;border:2px solid #525252;border-radius:7px;background:#3a3a3a;"></div>
<div class="t" style="left:281.2px;top:1027.8px;height:31px;line-height:31px;font:700 23.5px/31px 'Liberation Sans',sans-serif;color:#e4e4e4;letter-spacing:0.98px;">12m</div>
<div class="t" style="left:292.7px;top:1059.7px;height:31px;line-height:31px;font:700 23.5px/31px 'Liberation Sans',sans-serif;color:#e4e4e4;">24</div>
<div style="left:360.0px;top:1018.5px;width:87.5px;height:74.5px;border:2px solid #525252;border-radius:7px;background:#3a3a3a;"></div>
<div class="t" style="left:381.2px;top:1027.8px;height:31px;line-height:31px;font:700 23.5px/31px 'Liberation Sans',sans-serif;color:#e4e4e4;letter-spacing:0.98px;">10m</div>
<div class="t" style="left:392.7px;top:1059.7px;height:31px;line-height:31px;font:700 23.5px/31px 'Liberation Sans',sans-serif;color:#e4e4e4;">28</div>
<div style="left:460.0px;top:1018.5px;width:87.5px;height:74.5px;border:2px solid #525252;border-radius:7px;background:#3a3a3a;"></div>
<div class="t" style="left:487.8px;top:1027.8px;height:31px;line-height:31px;font:700 23.5px/31px 'Liberation Sans',sans-serif;color:#e4e4e4;letter-spacing:2.04px;">6m</div>
<div class="t" style="left:492.7px;top:1059.7px;height:31px;line-height:31px;font:700 23.5px/31px 'Liberation Sans',sans-serif;color:#e4e4e4;">50</div>
<div style="left:610.0px;top:893.0px;width:563.5px;height:238.0px;border:2px solid #383838;border-radius:9px;background:#252525;"></div>
<div style="left:613.0px;top:892.0px;width:191.0px;height:4.0px;background:#252525;"></div>
<div style="left:612.0px;top:879.0px;width:192.0px;height:14.5px;background:#1a1a1a;"></div>
<div class="t" style="left:624.0px;top:869.9px;height:33px;line-height:33px;font:700 25.4px/33px 'Liberation Sans',sans-serif;color:#f0f0f0;letter-spacing:0.89px;">Mode / Tuner</div>
<div style="left:648.0px;top:930.5px;width:87.5px;height:74.5px;border:2px solid #4caf50;border-radius:7px;background:#4caf50;"></div>
<div class="t" style="left:671.7px;top:955.8px;height:31px;line-height:31px;font:700 23.5px/31px 'Liberation Sans',sans-serif;color:#ffffff;letter-spacing:-1.41px;">LSB</div>
<div style="left:748.0px;top:930.5px;width:87.5px;height:74.5px;border:2px solid #525252;border-radius:7px;background:#3a3a3a;"></div>
<div class="t" style="left:770.4px;top:955.8px;height:31px;line-height:31px;font:700 23.5px/31px 'Liberation Sans',sans-serif;color:#e4e4e4;letter-spacing:-1.41px;">USB</div>
<div style="left:848.0px;top:930.5px;width:87.5px;height:74.5px;border:2px solid #525252;border-radius:7px;background:#3a3a3a;"></div>
<div class="t" style="left:874.2px;top:955.8px;height:31px;line-height:31px;font:700 23.5px/31px 'Liberation Sans',sans-serif;color:#e4e4e4;letter-spacing:-0.15px;">CW</div>
<div style="left:948.0px;top:930.5px;width:87.5px;height:74.5px;border:2px solid #525252;border-radius:7px;background:#3a3a3a;"></div>
<div class="t" style="left:974.2px;top:955.8px;height:31px;line-height:31px;font:700 23.5px/31px 'Liberation Sans',sans-serif;color:#e4e4e4;letter-spacing:2.45px;">AM</div>
<div style="left:1048.0px;top:930.5px;width:87.5px;height:74.5px;border:2px solid #525252;border-radius:7px;background:#3a3a3a;"></div>
<div class="t" style="left:1075.8px;top:955.8px;height:31px;line-height:31px;font:700 23.5px/31px 'Liberation Sans',sans-serif;color:#e4e4e4;letter-spacing:2.07px;">FM</div>
<div style="left:648.0px;top:1018.5px;width:153.5px;height:74.5px;border:2px solid #ffa726;border-radius:7px;background:#ff9800;"></div>
<div class="t" style="left:692.8px;top:1042.8px;height:33px;line-height:33px;font:700 25.5px/33px 'Liberation Sans',sans-serif;color:#1a1a1a;letter-spacing:-0.47px;">TUNE</div>
<div style="left:814.0px;top:1018.5px;width:155.5px;height:74.5px;border:2px solid #525252;border-radius:7px;background:#3a3a3a;"></div>
<div class="t" style="left:841.8px;top:1042.8px;height:33px;line-height:33px;font:700 25.5px/33px 'Liberation Sans',sans-serif;color:#8c8c8c;letter-spacing:-0.76px;">ATU OFF</div>
<div style="left:982.5px;top:1018.5px;width:153.0px;height:74.5px;border:2px solid #525252;border-radius:7px;background:#3a3a3a;"></div>
<div class="t" style="left:1045.0px;top:1042.8px;height:33px;line-height:33px;font:700 25.5px/33px 'Liberation Sans',sans-serif;color:#d32f2f;letter-spacing:-0.59px;">TX</div>
<div style="left:1198.5px;top:893.0px;width:363.5px;height:238.0px;border:2px solid #383838;border-radius:9px;background:#252525;"></div>
<div style="left:1201.5px;top:892.0px;width:302.0px;height:4.0px;background:#252525;"></div>
<div style="left:1200.5px;top:879.0px;width:303.0px;height:14.5px;background:#1a1a1a;"></div>
<div class="t" style="left:1212.5px;top:869.9px;height:33px;line-height:33px;font:700 25.4px/33px 'Liberation Sans',sans-serif;color:#f0f0f0;letter-spacing:0.26px;">Filters / AGC / PreAmp</div>
<div style="left:1236.5px;top:930.5px;width:87.5px;height:75.0px;border:2px solid #525252;border-radius:7px;background:#3a3a3a;"></div>
<div class="t" style="left:1265.2px;top:956.0px;height:31px;line-height:31px;font:700 23.5px/31px 'Liberation Sans',sans-serif;color:#e4e4e4;letter-spacing:0.06px;">NB</div>
<div style="left:1336.5px;top:930.5px;width:87.5px;height:75.0px;border:2px solid #525252;border-radius:7px;background:#3a3a3a;"></div>
<div class="t" style="left:1365.2px;top:956.0px;height:31px;line-height:31px;font:700 23.5px/31px 'Liberation Sans',sans-serif;color:#e4e4e4;letter-spacing:0.06px;">NR</div>
<div style="left:1436.5px;top:930.5px;width:87.5px;height:75.0px;border:2px solid #525252;border-radius:7px;background:#3a3a3a;"></div>
<div class="t" style="left:1446.2px;top:940.0px;height:31px;line-height:31px;font:700 23.5px/31px 'Liberation Sans',sans-serif;color:#e4e4e4;letter-spacing:0.15px;">P.AMP</div>
<div class="t" style="left:1460.2px;top:972.0px;height:31px;line-height:31px;font:700 23.5px/31px 'Liberation Sans',sans-serif;color:#e4e4e4;letter-spacing:-1.41px;">OFF</div>
<div style="left:1236.5px;top:1018.5px;width:87.5px;height:75.0px;border:2px solid #525252;border-radius:7px;background:#3a3a3a;"></div>
<div class="t" style="left:1258.2px;top:1044.0px;height:31px;line-height:31px;font:700 23.5px/31px 'Liberation Sans',sans-serif;color:#e4e4e4;letter-spacing:-0.15px;">ANF</div>
<div style="left:1336.5px;top:1018.5px;width:87.5px;height:75.0px;border:2px solid #525252;border-radius:7px;background:#3a3a3a;"></div>
<div class="t" style="left:1357.5px;top:1028.0px;height:31px;line-height:31px;font:700 23.5px/31px 'Liberation Sans',sans-serif;color:#e4e4e4;letter-spacing:-1.41px;">AGC</div>
<div class="t" style="left:1360.2px;top:1060.0px;height:31px;line-height:31px;font:700 23.5px/31px 'Liberation Sans',sans-serif;color:#e4e4e4;letter-spacing:1.77px;">Mid</div>
<div style="left:1436.5px;top:1018.5px;width:87.5px;height:75.0px;border:2px solid #525252;border-radius:7px;background:#3a3a3a;"></div>
<div class="t" style="left:1459.2px;top:1028.0px;height:31px;line-height:31px;font:700 23.5px/31px 'Liberation Sans',sans-serif;color:#e4e4e4;letter-spacing:-0.77px;">FIL2</div>
<div class="t" style="left:1460.2px;top:1060.0px;height:31px;line-height:31px;font:700 23.5px/31px 'Liberation Sans',sans-serif;color:#e4e4e4;letter-spacing:1.77px;">Mid</div>
<div style="left:1586.5px;top:893.0px;width:809.5px;height:238.0px;border:2px solid #383838;border-radius:9px;background:#252525;"></div>
<div style="left:1589.5px;top:892.0px;width:201.5px;height:4.0px;background:#252525;"></div>
<div style="left:1588.5px;top:879.0px;width:202.5px;height:14.5px;background:#1a1a1a;"></div>
<div class="t" style="left:1600.5px;top:869.9px;height:33px;line-height:33px;font:700 25.4px/33px 'Liberation Sans',sans-serif;color:#f0f0f0;letter-spacing:0.56px;">Voice Memory</div>
<div style="left:1624.0px;top:930.5px;width:174.0px;height:75.0px;border:2px solid #525252;border-radius:7px;background:#3a3a3a;"></div>
<div class="t" style="left:1664.5px;top:955.5px;height:32px;line-height:32px;font:700 24.5px/32px 'Liberation Sans',sans-serif;color:#e4e4e4;letter-spacing:-0.47px;">CT7BAC</div>
<div style="left:1810.5px;top:930.5px;width:175.0px;height:75.0px;border:2px solid #525252;border-radius:7px;background:#3a3a3a;"></div>
<div class="t" style="left:1833.0px;top:955.5px;height:32px;line-height:32px;font:700 24.5px/32px 'Liberation Sans',sans-serif;color:#e4e4e4;letter-spacing:0.24px;">C T 7 B A C</div>
<div style="left:1998.5px;top:930.5px;width:173.5px;height:75.0px;border:2px solid #525252;border-radius:7px;background:#3a3a3a;"></div>
<div class="t" style="left:2022.8px;top:955.5px;height:32px;line-height:32px;font:700 24.5px/32px 'Liberation Sans',sans-serif;color:#e4e4e4;letter-spacing:0.41px;">TKS 59 73!</div>
<div style="left:2184.5px;top:930.5px;width:173.5px;height:75.0px;border:2px solid #525252;border-radius:7px;background:#3a3a3a;"></div>
<div class="t" style="left:2204.8px;top:955.5px;height:32px;line-height:32px;font:700 24.5px/32px 'Liberation Sans',sans-serif;color:#e4e4e4;letter-spacing:0.24px;">CQ General</div>
<div style="left:1624.0px;top:1018.5px;width:174.0px;height:75.0px;border:2px solid #525252;border-radius:7px;background:#3a3a3a;"></div>
<div class="t" style="left:1682.5px;top:1043.5px;height:32px;line-height:32px;font:700 24.5px/32px 'Liberation Sans',sans-serif;color:#e4e4e4;letter-spacing:0.28px;">C T 7</div>
<div style="left:1810.5px;top:1018.5px;width:175.0px;height:75.0px;border:2px solid #525252;border-radius:7px;background:#3a3a3a;"></div>
<div class="t" style="left:1867.0px;top:1043.5px;height:32px;line-height:32px;font:700 24.5px/32px 'Liberation Sans',sans-serif;color:#e4e4e4;letter-spacing:0.28px;">B A C</div>
<div style="left:1998.5px;top:1018.5px;width:173.5px;height:75.0px;border:2px solid #525252;border-radius:7px;background:#3a3a3a;"></div>
<div class="t" style="left:2050.8px;top:1043.5px;height:32px;line-height:32px;font:700 24.5px/32px 'Liberation Sans',sans-serif;color:#e4e4e4;letter-spacing:0.55px;">Roger</div>
<div style="left:2184.5px;top:1018.5px;width:173.5px;height:75.0px;border:2px solid #525252;border-radius:7px;background:#3a3a3a;"></div>
<div class="t" style="left:2216.8px;top:1043.5px;height:32px;line-height:32px;font:700 24.5px/32px 'Liberation Sans',sans-serif;color:#e4e4e4;letter-spacing:-0.19px;">CQ VK ZL</div>
<div style="left:22.0px;top:1180.5px;width:2374.0px;height:858.5px;border:2px solid #383838;border-radius:9px;background:#252525;"></div>
<div style="left:25.0px;top:1179.5px;width:236.0px;height:4.0px;background:#252525;"></div>
<div style="left:24.0px;top:1166.5px;width:237.0px;height:14.5px;background:#1a1a1a;"></div>
<div class="t" style="left:36.0px;top:1157.4px;height:33px;line-height:33px;font:700 25.4px/33px 'Liberation Sans',sans-serif;color:#f0f0f0;letter-spacing:-0.34px;">WebSDR Browser</div>
<div style="left:54.0px;top:1202.0px;width:2314.3px;height:810.0px;background:#f0f0f0;"></div>
<svg class="abs" style="left:54px;top:1202px" width="2280" height="422" viewBox="0 0 2280 422"><defs>
<linearGradient id="skyL" x1="0" y1="0" x2="0" y2="1">
<stop offset="0" stop-color="#f1b04a"/><stop offset="0.07" stop-color="#f8c052"/><stop offset="0.15" stop-color="#f4a83a"/><stop offset="0.195" stop-color="#f09440"/><stop offset="0.225" stop-color="#e8846a"/><stop offset="0.25" stop-color="#b08088"/><stop offset="0.275" stop-color="#5d6b86"/><stop offset="0.31" stop-color="#2f4668"/><stop offset="0.42" stop-color="#22375a"/><stop offset="0.62" stop-color="#1d2c48"/><stop offset="0.80" stop-color="#2a2a38"/><stop offset="1" stop-color="#3a2a26"/></linearGradient>
<linearGradient id="skyR" x1="0" y1="0" x2="0" y2="1">
<stop offset="0" stop-color="#b5683f"/><stop offset="0.06" stop-color="#a86452"/><stop offset="0.15" stop-color="#8e5a62"/><stop offset="0.22" stop-color="#6a4a6c"/><stop offset="0.238" stop-color="#3f3f66"/><stop offset="0.25" stop-color="#143358"/><stop offset="0.40" stop-color="#122a52"/><stop offset="0.70" stop-color="#101f42"/><stop offset="1" stop-color="#151a33"/></linearGradient>
<linearGradient id="botH" x1="0" y1="0" x2="1" y2="0">
<stop offset="0" stop-color="#30231a"/><stop offset="0.2" stop-color="#221d1c"/><stop offset="0.45" stop-color="#2a211b"/><stop offset="0.70" stop-color="#2b2220"/><stop offset="0.755" stop-color="#37282a"/><stop offset="0.765" stop-color="#5c464c"/><stop offset="0.92" stop-color="#56424c"/><stop offset="0.945" stop-color="#1d1d38"/><stop offset="1" stop-color="#141832"/></linearGradient>
</defs><rect width="1200" height="422" fill="url(#skyL)"/><rect x="1200" width="1080" height="422" fill="url(#skyR)"/><rect y="388" width="2280" height="34" fill="url(#botH)"/><filter id="pb"><feGaussianBlur stdDeviation="2.2"/></filter><g filter="url(#pb)" stroke-linecap="round"><path d="M11 330 L92 372" stroke="#e8902a" stroke-width="6" opacity="0.75"/><path d="M0 366 L72 388" stroke="#e08020" stroke-width="5" opacity="0.6"/><path d="M22 384 L113 420" stroke="#f09a30" stroke-width="6" opacity="0.7"/><path d="M2 396 h22 v20 h-22z" fill="#e8e0d0" stroke="none" opacity="0.4"/><path d="M20 250 h40" stroke="#fff0c0" stroke-width="4" opacity="0.6"/><path d="M0 176 h14" stroke="#fff0c0" stroke-width="4" opacity="0.7"/><path d="M60 185 h50" stroke="#e0d8c0" stroke-width="3" opacity="0.45"/></g><g filter="url(#pb)"><path d="M2163 366 L2280 376" stroke="#e8903a" stroke-width="3.5" opacity="0.8"/></g><path d="M2163 204 H2280" stroke="#f0d0c0" stroke-width="2.5" stroke-dasharray="3 4 5 3 2 5" opacity="0.75"/><path d="M2165 186 H2215" stroke="#e8e0d0" stroke-width="2.5" stroke-dasharray="4 6 3 8" opacity="0.6"/><rect x="37" y="158" width="5.7" height="2.5" fill="#e8e0c0" opacity="0.40"/><rect x="67" y="249" width="3.1" height="1.8" fill="#e8e0c0" opacity="0.38"/><rect x="10" y="191" width="6.9" height="2.7" fill="#e8e0c0" opacity="0.67"/><rect x="67" y="147" width="6.1" height="2.4" fill="#e8e0c0" opacity="0.37"/><rect x="99" y="175" width="3.3" height="1.7" fill="#e8e0c0" opacity="0.63"/><rect x="78" y="152" width="3.8" height="2.4" fill="#e8e0c0" opacity="0.62"/><rect x="7" y="147" width="3.3" height="1.8" fill="#c8d0d8" opacity="0.74"/><rect x="54" y="251" width="4.6" height="2.0" fill="#e8e0c0" opacity="0.70"/><rect x="28" y="209" width="5.0" height="2.3" fill="#ffe9a8" opacity="0.49"/><rect x="113" y="154" width="2.6" height="2.1" fill="#ffe9a8" opacity="0.59"/><rect x="5" y="220" width="6.0" height="2.6" fill="#c8d0d8" opacity="0.76"/><rect x="39" y="182" width="2.5" height="2.2" fill="#ffe9a8" opacity="0.40"/><rect x="31" y="224" width="3.4" height="1.6" fill="#c8d0d8" opacity="0.67"/><rect x="114" y="239" width="4.7" height="1.9" fill="#ffe9a8" opacity="0.52"/><rect x="108" y="183" width="2.6" height="2.4" fill="#ffe9a8" opacity="0.73"/><rect x="15" y="170" width="2.4" height="2.1" fill="#ffe9a8" opacity="0.57"/><rect x="63" y="246" width="3.9" height="2.7" fill="#c8d0d8" opacity="0.56"/><rect x="41" y="246" width="3.3" height="2.9" fill="#e8e0c0" opacity="0.43"/><rect x="76" y="141" width="3.9" height="2.7" fill="#e8e0c0" opacity="0.35"/><rect x="48" y="184" width="4.9" height="2.3" fill="#e8e0c0" opacity="0.61"/><rect x="71" y="221" width="3.6" height="1.6" fill="#c8d0d8" opacity="0.55"/><rect x="46" y="152" width="3.2" height="2.5" fill="#e8e0c0" opacity="0.84"/><rect x="51" y="278" width="2.7" height="2.7" fill="#ffb040" opacity="0.43"/><rect x="12" y="318" width="3.1" height="1.6" fill="#ff9a30" opacity="0.42"/><rect x="29" y="316" width="2.6" height="2.2" fill="#ffb040" opacity="0.59"/><rect x="112" y="337" width="2.5" height="2.1" fill="#ff9a30" opacity="0.52"/><rect x="30" y="393" width="2.4" height="1.8" fill="#ffb040" opacity="0.83"/><rect x="42" y="370" width="4.9" height="3.3" fill="#e07020" opacity="0.67"/><rect x="10" y="395" width="4.0" height="2.5" fill="#ff9a30" opacity="0.46"/><rect x="62" y="340" width="6.4" height="2.8" fill="#e07020" opacity="0.84"/><rect x="98" y="389" width="4.1" height="3.1" fill="#ff9a30" opacity="0.60"/><rect x="84" y="418" width="4.4" height="3.1" fill="#fff0c0" opacity="0.70"/><rect x="110" y="332" width="8.5" height="3.4" fill="#ffd070" opacity="0.53"/><rect x="25" y="296" width="3.4" height="1.9" fill="#ff9a30" opacity="0.84"/><rect x="70" y="260" width="7.6" height="3.3" fill="#ffd070" opacity="0.39"/><rect x="76" y="406" width="5.4" height="3.1" fill="#ff9a30" opacity="0.44"/><rect x="91" y="313" width="5.4" height="3.1" fill="#fff0c0" opacity="0.72"/><rect x="10" y="285" width="4.3" height="3.5" fill="#ffb040" opacity="0.80"/><rect x="93" y="283" width="6.5" height="3.2" fill="#fff0c0" opacity="0.53"/><rect x="63" y="281" width="2.8" height="1.5" fill="#ffb040" opacity="0.82"/><rect x="50" y="399" width="3.3" height="3.2" fill="#ff9a30" opacity="0.46"/><rect x="58" y="382" width="3.6" height="2.2" fill="#e07020" opacity="0.42"/><rect x="105" y="317" width="5.6" height="2.4" fill="#e07020" opacity="0.61"/><rect x="95" y="401" width="3.2" height="1.8" fill="#ff9a30" opacity="0.36"/><rect x="51" y="289" width="1.9" height="1.5" fill="#ff9a30" opacity="0.59"/><rect x="83" y="349" width="4.0" height="2.2" fill="#e07020" opacity="0.59"/><rect x="89" y="401" width="2.3" height="1.6" fill="#ff9a30" opacity="0.74"/><rect x="58" y="350" width="5.2" height="3.0" fill="#ffb040" opacity="0.66"/><rect x="58" y="342" width="5.2" height="2.9" fill="#fff0c0" opacity="0.75"/><rect x="58" y="300" width="6.3" height="2.5" fill="#ffd070" opacity="0.80"/><rect x="23" y="332" width="4.0" height="2.3" fill="#fff0c0" opacity="0.39"/><rect x="28" y="272" width="6.9" height="2.8" fill="#ffb040" opacity="0.43"/><rect x="82" y="366" width="4.6" height="1.8" fill="#ff9a30" opacity="0.46"/><rect x="110" y="324" width="3.1" height="2.5" fill="#ff9a30" opacity="0.57"/><rect x="59" y="314" width="2.2" height="1.9" fill="#ffd070" opacity="0.53"/><rect x="39" y="333" width="4.4" height="2.9" fill="#fff0c0" opacity="0.66"/><rect x="59" y="270" width="8.9" height="3.5" fill="#ff9a30" opacity="0.40"/><rect x="31" y="266" width="6.8" height="3.1" fill="#ffd070" opacity="0.76"/><rect x="98" y="368" width="4.2" height="3.4" fill="#fff0c0" opacity="0.81"/><rect x="66" y="372" width="3.8" height="1.7" fill="#ffb040" opacity="0.44"/><rect x="103" y="303" width="3.5" height="1.5" fill="#ffb040" opacity="0.39"/><rect x="98" y="271" width="3.3" height="3.2" fill="#fff0c0" opacity="0.85"/><rect x="48" y="406" width="5.1" height="2.7" fill="#ffb040" opacity="0.47"/><rect x="13" y="286" width="4.0" height="1.6" fill="#ff9a30" opacity="0.66"/><rect x="61" y="293" width="3.4" height="2.4" fill="#ff9a30" opacity="0.75"/><rect x="114" y="266" width="2.9" height="1.5" fill="#e07020" opacity="0.44"/><rect x="55" y="410" width="3.5" height="1.7" fill="#fff0c0" opacity="0.62"/><rect x="102" y="415" width="5.4" height="2.1" fill="#ff9a30" opacity="0.52"/><rect x="96" y="373" width="7.2" height="2.8" fill="#fff0c0" opacity="0.84"/><rect x="96" y="262" width="4.6" height="2.8" fill="#ffd070" opacity="0.38"/><rect x="77" y="321" width="4.9" height="2.5" fill="#ffd070" opacity="0.70"/><rect x="5" y="290" width="2.9" height="2.0" fill="#ffb040" opacity="0.83"/><rect x="112" y="348" width="2.7" height="2.0" fill="#ffd070" opacity="0.44"/><rect x="39" y="273" width="2.9" height="2.1" fill="#ff9a30" opacity="0.74"/><rect x="10" y="391" width="1.9" height="1.8" fill="#e07020" opacity="0.36"/><rect x="35" y="297" width="6.3" height="2.7" fill="#e07020" opacity="0.43"/><rect x="103" y="385" width="5.8" height="2.7" fill="#ffd070" opacity="0.60"/><rect x="580" y="411" width="3.9" height="1.8" fill="#181828" opacity="0.76"/><rect x="343" y="409" width="5.8" height="2.5" fill="#e09a40" opacity="0.64"/><rect x="1575" y="413" width="3.3" height="2.9" fill="#8a5a30" opacity="0.37"/><rect x="1157" y="421" width="4.3" height="2.3" fill="#181828" opacity="0.66"/><rect x="1139" y="413" width="4.3" height="2.5" fill="#e09a40" opacity="0.39"/><rect x="1640" y="419" width="3.7" height="1.7" fill="#c07a30" opacity="0.59"/><rect x="1438" y="418" width="2.7" height="2.0" fill="#8a5a30" opacity="0.67"/><rect x="868" y="418" width="3.7" height="1.7" fill="#a06028" opacity="0.66"/><rect x="1166" y="396" width="3.7" height="1.8" fill="#a06028" opacity="0.70"/><rect x="1131" y="398" width="3.5" height="2.5" fill="#181828" opacity="0.69"/><rect x="1247" y="413" width="3.6" height="2.1" fill="#a06028" opacity="0.58"/><rect x="309" y="419" width="4.7" height="1.9" fill="#c07a30" opacity="0.36"/><rect x="865" y="417" width="8.9" height="3.4" fill="#181828" opacity="0.54"/><rect x="1614" y="420" width="2.0" height="1.6" fill="#c07a30" opacity="0.61"/><rect x="1673" y="398" width="7.6" height="3.1" fill="#a06028" opacity="0.70"/><rect x="493" y="419" width="3.1" height="2.5" fill="#e09a40" opacity="0.82"/><rect x="1229" y="405" width="4.6" height="3.0" fill="#181828" opacity="0.51"/><rect x="1489" y="394" width="3.6" height="3.0" fill="#181828" opacity="0.81"/><rect x="1281" y="419" width="2.3" height="2.1" fill="#202030" opacity="0.55"/><rect x="1537" y="396" width="7.9" height="3.4" fill="#a06028" opacity="0.49"/><rect x="199" y="413" width="3.9" height="2.8" fill="#ffd070" opacity="0.48"/><rect x="950" y="399" width="5.4" height="2.2" fill="#181828" opacity="0.76"/><rect x="1147" y="420" width="7.3" height="3.4" fill="#8a5a30" opacity="0.37"/><rect x="1312" y="407" width="5.3" height="3.0" fill="#a06028" opacity="0.81"/><rect x="1014" y="399" width="3.4" height="2.3" fill="#a06028" opacity="0.72"/><rect x="1711" y="401" width="5.0" height="2.8" fill="#a06028" opacity="0.68"/><rect x="311" y="412" width="3.1" height="1.7" fill="#181828" opacity="0.58"/><rect x="659" y="415" width="3.3" height="2.4" fill="#8a5a30" opacity="0.44"/><rect x="1024" y="403" width="5.4" height="2.2" fill="#8a5a30" opacity="0.72"/><rect x="790" y="406" width="3.7" height="2.5" fill="#181828" opacity="0.73"/><rect x="929" y="410" width="2.5" height="2.2" fill="#8a5a30" opacity="0.80"/><rect x="744" y="412" width="5.6" height="2.4" fill="#a06028" opacity="0.79"/><rect x="151" y="395" width="7.4" height="2.9" fill="#181828" opacity="0.59"/><rect x="235" y="420" width="8.6" height="3.4" fill="#181828" opacity="0.47"/><rect x="293" y="398" width="6.4" height="2.5" fill="#c07a30" opacity="0.71"/><rect x="1173" y="415" width="2.4" height="2.4" fill="#e09a40" opacity="0.41"/><rect x="1046" y="395" width="5.9" height="2.9" fill="#ffd070" opacity="0.61"/><rect x="830" y="415" width="3.1" height="1.7" fill="#a06028" opacity="0.64"/><rect x="750" y="400" width="5.0" height="2.7" fill="#e09a40" opacity="0.85"/><rect x="571" y="403" width="5.6" height="3.2" fill="#8a5a30" opacity="0.47"/><rect x="519" y="421" width="3.2" height="2.9" fill="#a06028" opacity="0.45"/><rect x="1562" y="412" width="3.4" height="1.7" fill="#8a5a30" opacity="0.81"/><rect x="486" y="395" width="3.4" height="2.2" fill="#181828" opacity="0.55"/><rect x="126" y="402" width="4.2" height="3.2" fill="#c07a30" opacity="0.83"/><rect x="625" y="417" width="2.8" height="2.0" fill="#8a5a30" opacity="0.79"/><rect x="293" y="411" width="4.8" height="2.7" fill="#8a5a30" opacity="0.81"/><rect x="207" y="411" width="4.5" height="3.3" fill="#e09a40" opacity="0.84"/><rect x="347" y="395" width="2.8" height="1.6" fill="#181828" opacity="0.71"/><rect x="629" y="397" width="2.5" height="1.7" fill="#ffd070" opacity="0.44"/><rect x="1645" y="415" width="3.7" height="1.6" fill="#181828" opacity="0.84"/><rect x="838" y="397" width="2.6" height="1.7" fill="#c07a30" opacity="0.83"/><rect x="317" y="421" width="4.3" height="1.9" fill="#202030" opacity="0.50"/><rect x="1429" y="396" width="4.6" height="2.9" fill="#8a5a30" opacity="0.81"/><rect x="431" y="404" width="6.6" height="3.3" fill="#e09a40" opacity="0.47"/><rect x="1138" y="405" width="2.5" height="2.3" fill="#181828" opacity="0.81"/><rect x="535" y="415" width="5.2" height="3.3" fill="#202030" opacity="0.52"/><rect x="1674" y="395" width="7.4" height="3.0" fill="#202030" opacity="0.50"/><rect x="1295" y="411" width="3.2" height="3.1" fill="#c07a30" opacity="0.47"/><rect x="892" y="421" width="7.7" height="3.4" fill="#181828" opacity="0.81"/><rect x="1447" y="398" width="5.7" height="2.5" fill="#e09a40" opacity="0.72"/><rect x="1460" y="416" width="6.5" height="2.7" fill="#202030" opacity="0.58"/><rect x="1397" y="411" width="5.6" height="2.5" fill="#181828" opacity="0.47"/><rect x="221" y="395" width="3.3" height="2.6" fill="#202030" opacity="0.56"/><rect x="287" y="396" width="3.2" height="2.7" fill="#8a5a30" opacity="0.60"/><rect x="1275" y="407" width="3.4" height="2.0" fill="#181828" opacity="0.80"/><rect x="499" y="409" width="6.9" height="3.0" fill="#c07a30" opacity="0.50"/><rect x="572" y="401" width="2.6" height="2.0" fill="#a06028" opacity="0.47"/><rect x="516" y="398" width="5.0" height="3.3" fill="#8a5a30" opacity="0.55"/><rect x="1738" y="408" width="4.0" height="2.0" fill="#c07a30" opacity="0.85"/><rect x="282" y="407" width="7.7" height="3.1" fill="#181828" opacity="0.37"/><rect x="595" y="397" width="4.7" height="1.9" fill="#8a5a30" opacity="0.54"/><rect x="1531" y="407" width="2.4" height="2.0" fill="#e09a40" opacity="0.65"/><rect x="1129" y="400" width="2.4" height="2.2" fill="#ffd070" opacity="0.85"/><rect x="178" y="415" width="7.7" height="3.3" fill="#e09a40" opacity="0.55"/><rect x="723" y="411" width="3.8" height="1.7" fill="#e09a40" opacity="0.62"/><rect x="218" y="397" width="4.6" height="2.3" fill="#ffd070" opacity="0.40"/><rect x="383" y="413" width="4.8" height="2.3" fill="#a06028" opacity="0.56"/><rect x="199" y="415" width="5.4" height="3.3" fill="#181828" opacity="0.78"/><rect x="1744" y="404" width="2.5" height="1.9" fill="#181828" opacity="0.35"/><rect x="1589" y="406" width="6.0" height="3.1" fill="#181828" opacity="0.53"/><rect x="1379" y="398" width="3.2" height="1.6" fill="#ffd070" opacity="0.80"/><rect x="261" y="411" width="2.8" height="2.2" fill="#ffd070" opacity="0.49"/><rect x="967" y="420" width="3.8" height="1.7" fill="#181828" opacity="0.75"/><rect x="1431" y="402" width="8.1" height="3.2" fill="#e09a40" opacity="0.59"/><rect x="202" y="420" width="4.6" height="2.3" fill="#ffd070" opacity="0.78"/><rect x="1130" y="411" width="2.4" height="1.9" fill="#181828" opacity="0.46"/><rect x="769" y="409" width="2.8" height="2.3" fill="#c07a30" opacity="0.84"/><rect x="1449" y="399" width="6.8" height="3.3" fill="#e09a40" opacity="0.51"/><rect x="752" y="407" width="6.5" height="3.2" fill="#a06028" opacity="0.50"/><rect x="523" y="405" width="2.9" height="2.2" fill="#181828" opacity="0.35"/><rect x="1727" y="407" width="5.6" height="2.4" fill="#181828" opacity="0.76"/><rect x="770" y="396" width="2.5" height="2.2" fill="#202030" opacity="0.57"/><rect x="949" y="395" width="6.9" height="2.8" fill="#c07a30" opacity="0.51"/><rect x="1293" y="396" width="6.1" height="3.0" fill="#181828" opacity="0.74"/><rect x="157" y="396" width="3.6" height="2.7" fill="#c07a30" opacity="0.84"/><rect x="919" y="421" width="7.0" height="3.3" fill="#ffd070" opacity="0.71"/><rect x="477" y="417" width="3.4" height="2.7" fill="#a06028" opacity="0.80"/><rect x="565" y="417" width="2.4" height="1.8" fill="#181828" opacity="0.48"/><rect x="942" y="403" width="2.6" height="1.6" fill="#ffd070" opacity="0.67"/><rect x="570" y="403" width="2.7" height="2.3" fill="#a06028" opacity="0.62"/><rect x="1155" y="404" width="4.6" height="3.2" fill="#c07a30" opacity="0.62"/><rect x="1516" y="415" width="5.8" height="2.2" fill="#181828" opacity="0.64"/><rect x="704" y="415" width="4.7" height="2.4" fill="#ffd070" opacity="0.83"/><rect x="600" y="408" width="4.6" height="2.1" fill="#202030" opacity="0.72"/><rect x="477" y="402" width="5.0" height="2.8" fill="#181828" opacity="0.80"/><rect x="331" y="400" width="3.1" height="2.8" fill="#e09a40" opacity="0.63"/><rect x="612" y="409" width="5.0" height="2.6" fill="#181828" opacity="0.64"/><rect x="449" y="411" width="2.5" height="2.4" fill="#ffd070" opacity="0.75"/><rect x="1272" y="407" width="3.9" height="1.6" fill="#ffd070" opacity="0.74"/><rect x="772" y="401" width="3.0" height="1.5" fill="#202030" opacity="0.64"/><rect x="1099" y="408" width="6.1" height="2.5" fill="#ffd070" opacity="0.37"/><rect x="984" y="405" width="4.9" height="2.0" fill="#e09a40" opacity="0.40"/><rect x="1117" y="412" width="2.5" height="1.9" fill="#181828" opacity="0.65"/><rect x="944" y="412" width="5.7" height="3.1" fill="#ffd070" opacity="0.38"/><rect x="1138" y="422" width="6.3" height="2.9" fill="#181828" opacity="0.35"/><rect x="1496" y="415" width="3.1" height="2.4" fill="#181828" opacity="0.85"/><rect x="542" y="412" width="3.7" height="1.7" fill="#a06028" opacity="0.48"/><rect x="1020" y="406" width="4.5" height="3.1" fill="#a06028" opacity="0.81"/><rect x="1577" y="396" width="3.6" height="2.5" fill="#ffd070" opacity="0.47"/><rect x="1331" y="420" width="3.9" height="3.0" fill="#202030" opacity="0.54"/><rect x="1098" y="405" width="5.6" height="3.2" fill="#181828" opacity="0.62"/><rect x="125" y="395" width="6.5" height="3.4" fill="#8a5a30" opacity="0.50"/><rect x="462" y="411" width="2.0" height="1.7" fill="#ffd070" opacity="0.36"/><rect x="289" y="420" width="4.6" height="2.2" fill="#ffd070" opacity="0.37"/><rect x="341" y="412" width="3.5" height="1.6" fill="#c07a30" opacity="0.38"/><rect x="1080" y="404" width="7.5" height="3.1" fill="#c07a30" opacity="0.73"/><rect x="1278" y="405" width="2.4" height="2.0" fill="#8a5a30" opacity="0.37"/><rect x="1501" y="417" width="4.9" height="2.8" fill="#a06028" opacity="0.42"/><rect x="1410" y="412" width="3.5" height="2.1" fill="#202030" opacity="0.36"/><rect x="535" y="402" width="7.2" height="2.9" fill="#202030" opacity="0.73"/><rect x="1099" y="407" width="4.7" height="2.1" fill="#e09a40" opacity="0.37"/><rect x="963" y="397" width="4.5" height="2.4" fill="#e09a40" opacity="0.46"/><rect x="1525" y="397" width="5.3" height="3.1" fill="#ffd070" opacity="0.61"/><rect x="586" y="415" width="2.9" height="1.6" fill="#202030" opacity="0.60"/><rect x="1418" y="399" width="6.3" height="2.5" fill="#202030" opacity="0.61"/><rect x="1060" y="398" width="5.6" height="3.1" fill="#8a5a30" opacity="0.40"/><rect x="1156" y="396" width="6.2" height="3.1" fill="#c07a30" opacity="0.53"/><rect x="771" y="405" width="5.5" height="3.3" fill="#c07a30" opacity="0.67"/><rect x="723" y="402" width="3.8" height="2.4" fill="#ffd070" opacity="0.79"/><rect x="497" y="407" width="4.0" height="2.6" fill="#e09a40" opacity="0.51"/><rect x="369" y="418" width="3.6" height="2.8" fill="#202030" opacity="0.57"/><rect x="1380" y="410" width="3.6" height="1.8" fill="#181828" opacity="0.70"/><rect x="945" y="401" width="6.5" height="3.0" fill="#ffd070" opacity="0.84"/><rect x="1297" y="411" width="3.4" height="2.2" fill="#8a5a30" opacity="0.44"/><rect x="1709" y="414" width="2.2" height="1.7" fill="#c07a30" opacity="0.43"/><rect x="358" y="402" width="2.8" height="2.1" fill="#a06028" opacity="0.67"/><rect x="290" y="400" width="2.3" height="2.3" fill="#e09a40" opacity="0.78"/><rect x="829" y="400" width="6.0" height="3.5" fill="#a06028" opacity="0.42"/><rect x="1102" y="405" width="6.3" height="3.0" fill="#181828" opacity="0.64"/><rect x="1173" y="418" width="5.9" height="2.8" fill="#8a5a30" opacity="0.67"/><rect x="857" y="403" width="6.7" height="2.8" fill="#c07a30" opacity="0.47"/><rect x="769" y="414" width="3.2" height="1.8" fill="#181828" opacity="0.36"/><rect x="1519" y="409" width="6.9" height="2.8" fill="#ffd070" opacity="0.51"/><rect x="132" y="417" width="3.5" height="3.3" fill="#c07a30" opacity="0.62"/><rect x="378" y="416" width="3.9" height="3.4" fill="#202030" opacity="0.64"/><rect x="1000" y="414" width="4.6" height="2.5" fill="#202030" opacity="0.56"/><rect x="1665" y="400" width="5.2" height="2.9" fill="#181828" opacity="0.82"/><rect x="1307" y="411" width="4.0" height="2.8" fill="#a06028" opacity="0.55"/><rect x="137" y="406" width="4.5" height="2.3" fill="#202030" opacity="0.40"/><rect x="611" y="405" width="8.8" height="3.4" fill="#8a5a30" opacity="0.83"/><rect x="871" y="399" width="7.7" height="3.4" fill="#c07a30" opacity="0.67"/><rect x="882" y="410" width="3.1" height="2.0" fill="#ffd070" opacity="0.67"/><rect x="1454" y="417" width="5.4" height="2.4" fill="#a06028" opacity="0.67"/><rect x="1390" y="407" width="4.4" height="3.1" fill="#8a5a30" opacity="0.54"/><rect x="530" y="406" width="4.3" height="1.9" fill="#e09a40" opacity="0.75"/><rect x="700" y="412" width="3.6" height="2.1" fill="#181828" opacity="0.67"/><rect x="1193" y="404" width="3.7" height="3.4" fill="#181828" opacity="0.76"/><rect x="1596" y="416" width="3.6" height="1.8" fill="#202030" opacity="0.36"/><rect x="134" y="421" width="5.5" height="2.8" fill="#a06028" opacity="0.64"/><rect x="1512" y="399" width="3.2" height="2.4" fill="#ffd070" opacity="0.55"/><rect x="989" y="411" width="6.0" height="2.9" fill="#c07a30" opacity="0.80"/><rect x="1404" y="417" width="3.5" height="1.9" fill="#8a5a30" opacity="0.72"/><rect x="832" y="419" width="4.4" height="2.6" fill="#a06028" opacity="0.76"/><rect x="889" y="410" width="5.2" height="2.5" fill="#ffd070" opacity="0.47"/><rect x="384" y="411" width="7.0" height="3.0" fill="#ffd070" opacity="0.58"/><rect x="1035" y="413" width="5.3" height="3.2" fill="#202030" opacity="0.85"/><rect x="1220" y="399" width="2.3" height="2.2" fill="#e09a40" opacity="0.37"/><rect x="1319" y="422" width="5.7" height="3.1" fill="#c07a30" opacity="0.59"/><rect x="1583" y="395" width="4.5" height="2.9" fill="#ffd070" opacity="0.78"/><rect x="714" y="407" width="3.7" height="2.6" fill="#8a5a30" opacity="0.52"/><rect x="526" y="395" width="4.8" height="2.1" fill="#202030" opacity="0.55"/><rect x="939" y="402" width="5.1" height="2.5" fill="#8a5a30" opacity="0.75"/><rect x="656" y="403" width="4.7" height="2.1" fill="#c07a30" opacity="0.37"/><rect x="1297" y="419" width="4.2" height="2.6" fill="#e09a40" opacity="0.40"/><rect x="191" y="417" width="5.5" height="2.5" fill="#e09a40" opacity="0.80"/><rect x="1115" y="411" width="3.7" height="2.8" fill="#c07a30" opacity="0.68"/><rect x="864" y="415" width="4.1" height="1.7" fill="#ffd070" opacity="0.56"/><rect x="279" y="420" width="3.4" height="1.5" fill="#ffd070" opacity="0.63"/><rect x="537" y="402" width="2.4" height="2.3" fill="#202030" opacity="0.63"/><rect x="1060" y="420" width="5.8" height="2.5" fill="#e09a40" opacity="0.74"/><rect x="803" y="413" width="2.4" height="2.3" fill="#c07a30" opacity="0.54"/><rect x="1083" y="420" width="7.7" height="3.5" fill="#181828" opacity="0.62"/><rect x="251" y="407" width="5.5" height="3.3" fill="#e09a40" opacity="0.35"/><rect x="1209" y="422" width="7.7" height="3.2" fill="#8a5a30" opacity="0.41"/><rect x="144" y="414" width="4.9" height="2.0" fill="#ffd070" opacity="0.53"/><rect x="1337" y="413" width="2.6" height="1.8" fill="#c07a30" opacity="0.63"/><rect x="929" y="413" width="7.0" height="3.3" fill="#e09a40" opacity="0.36"/><rect x="139" y="412" width="5.1" height="3.1" fill="#c07a30" opacity="0.51"/><rect x="1096" y="421" width="4.8" height="3.2" fill="#e09a40" opacity="0.82"/><rect x="1305" y="407" width="2.9" height="1.8" fill="#c07a30" opacity="0.67"/><rect x="1145" y="406" width="5.7" height="2.3" fill="#181828" opacity="0.74"/><rect x="1042" y="402" width="3.9" height="1.6" fill="#202030" opacity="0.71"/><rect x="140" y="398" width="8.1" height="3.2" fill="#181828" opacity="0.47"/><rect x="748" y="405" width="7.0" height="3.0" fill="#8a5a30" opacity="0.49"/><rect x="118" y="401" width="3.4" height="2.3" fill="#e09a40" opacity="0.42"/><rect x="1571" y="422" width="2.8" height="1.8" fill="#181828" opacity="0.39"/><rect x="1020" y="416" width="2.8" height="1.9" fill="#8a5a30" opacity="0.38"/><rect x="762" y="414" width="7.6" height="3.4" fill="#e09a40" opacity="0.58"/><rect x="258" y="417" width="5.0" height="3.0" fill="#8a5a30" opacity="0.61"/><rect x="539" y="417" width="2.8" height="2.1" fill="#8a5a30" opacity="0.45"/><rect x="410" y="414" width="3.7" height="2.2" fill="#202030" opacity="0.61"/><rect x="359" y="395" width="8.3" height="3.5" fill="#202030" opacity="0.54"/><rect x="873" y="396" width="3.3" height="2.1" fill="#e09a40" opacity="0.61"/><rect x="149" y="395" width="6.7" height="3.5" fill="#181828" opacity="0.46"/><rect x="1628" y="402" width="3.8" height="1.7" fill="#181828" opacity="0.76"/><rect x="1690" y="401" width="4.1" height="1.6" fill="#8a5a30" opacity="0.54"/><rect x="160" y="395" width="4.0" height="2.2" fill="#181828" opacity="0.77"/><rect x="1578" y="418" width="5.9" height="2.8" fill="#c07a30" opacity="0.39"/><rect x="636" y="401" width="2.2" height="1.7" fill="#181828" opacity="0.77"/><rect x="721" y="401" width="3.1" height="2.9" fill="#ffd070" opacity="0.48"/><rect x="2205" y="285" width="3.5" height="2.5" fill="#e8e0d0" opacity="0.61"/><rect x="2250" y="264" width="2.5" height="2.0" fill="#e8e0d0" opacity="0.73"/><rect x="2273" y="252" width="3.1" height="1.8" fill="#d0c8e0" opacity="0.68"/><rect x="2219" y="206" width="3.4" height="1.9" fill="#ffe0b0" opacity="0.43"/><rect x="2192" y="171" width="3.9" height="2.2" fill="#e8e0d0" opacity="0.81"/><rect x="2257" y="174" width="6.0" height="2.4" fill="#e8e0d0" opacity="0.78"/><rect x="2267" y="171" width="4.9" height="2.0" fill="#e8e0d0" opacity="0.54"/><rect x="2167" y="161" width="6.0" height="2.6" fill="#ffe0b0" opacity="0.59"/><rect x="2237" y="171" width="2.2" height="1.7" fill="#e8e0d0" opacity="0.58"/><rect x="2267" y="216" width="2.8" height="1.7" fill="#ffe0b0" opacity="0.43"/><rect x="2196" y="276" width="2.6" height="1.9" fill="#e8e0d0" opacity="0.40"/><rect x="2217" y="222" width="1.8" height="1.7" fill="#d0c8e0" opacity="0.80"/><rect x="2242" y="182" width="2.4" height="2.0" fill="#ffe0b0" opacity="0.73"/><rect x="2277" y="215" width="4.4" height="1.8" fill="#e8e0d0" opacity="0.40"/><rect x="2198" y="284" width="4.0" height="1.6" fill="#d0c8e0" opacity="0.42"/><rect x="2239" y="216" width="2.5" height="2.1" fill="#d0c8e0" opacity="0.35"/><rect x="2261" y="229" width="1.8" height="1.7" fill="#ffe0b0" opacity="0.55"/><rect x="2197" y="177" width="5.4" height="2.4" fill="#d0c8e0" opacity="0.71"/><rect x="2188" y="162" width="3.5" height="1.6" fill="#d0c8e0" opacity="0.73"/><rect x="2185" y="171" width="5.1" height="2.2" fill="#d0c8e0" opacity="0.64"/><rect x="2188" y="160" width="5.4" height="2.3" fill="#ffe0b0" opacity="0.81"/><rect x="2225" y="202" width="4.3" height="1.8" fill="#d0c8e0" opacity="0.60"/><rect x="2167" y="287" width="2.9" height="2.0" fill="#d0c8e0" opacity="0.44"/><rect x="2261" y="205" width="3.2" height="1.7" fill="#ffe0b0" opacity="0.78"/><rect x="2206" y="290" width="3.1" height="2.6" fill="#e8e0d0" opacity="0.71"/><rect x="2259" y="280" width="4.4" height="1.9" fill="#d0c8e0" opacity="0.64"/><rect x="2268" y="194" width="2.9" height="1.6" fill="#d0c8e0" opacity="0.61"/><rect x="2226" y="231" width="2.1" height="1.5" fill="#e8e0d0" opacity="0.44"/><rect x="2177" y="188" width="2.5" height="2.4" fill="#e8e0d0" opacity="0.81"/><rect x="2250" y="189" width="4.7" height="2.4" fill="#d0c8e0" opacity="0.61"/><rect x="2246" y="165" width="3.2" height="2.5" fill="#d0c8e0" opacity="0.49"/><rect x="2218" y="238" width="2.8" height="2.3" fill="#e8e0d0" opacity="0.55"/><rect x="2181" y="239" width="5.1" height="2.4" fill="#e8e0d0" opacity="0.58"/><rect x="2211" y="292" width="2.5" height="1.5" fill="#d0c8e0" opacity="0.56"/><rect x="2262" y="364" width="4.5" height="2.0" fill="#ffb050" opacity="0.52"/><rect x="2193" y="341" width="4.8" height="2.1" fill="#ffe0a0" opacity="0.77"/><rect x="2171" y="363" width="3.8" height="2.7" fill="#ffe0a0" opacity="0.56"/><rect x="2238" y="344" width="3.3" height="2.2" fill="#ffb050" opacity="0.45"/><rect x="2242" y="328" width="4.6" height="2.0" fill="#d0e0a0" opacity="0.82"/><rect x="2238" y="399" width="2.8" height="2.6" fill="#ffb050" opacity="0.67"/><rect x="2196" y="383" width="3.7" height="1.9" fill="#ffb050" opacity="0.48"/><rect x="2225" y="353" width="3.2" height="2.7" fill="#ffe0a0" opacity="0.52"/><rect x="2184" y="307" width="3.1" height="2.7" fill="#ffe0a0" opacity="0.65"/><rect x="2272" y="354" width="5.3" height="2.2" fill="#ffe0a0" opacity="0.64"/><rect x="2197" y="390" width="5.8" height="2.5" fill="#ffe0a0" opacity="0.65"/><rect x="2231" y="379" width="3.1" height="1.8" fill="#ffe0a0" opacity="0.62"/><rect x="2235" y="357" width="2.9" height="1.9" fill="#ff9a40" opacity="0.44"/><rect x="2228" y="418" width="2.5" height="2.0" fill="#ffe0a0" opacity="0.83"/><rect x="2202" y="340" width="2.7" height="1.9" fill="#ff9a40" opacity="0.74"/><rect x="2183" y="308" width="5.4" height="2.6" fill="#d0e0a0" opacity="0.61"/><rect x="2261" y="343" width="6.4" height="2.5" fill="#ff9a40" opacity="0.69"/><rect x="2272" y="351" width="4.9" height="2.4" fill="#ff9a40" opacity="0.66"/><rect x="2263" y="400" width="3.1" height="2.2" fill="#d0e0a0" opacity="0.67"/><rect x="2238" y="386" width="2.1" height="2.0" fill="#ffb050" opacity="0.73"/><rect x="2232" y="361" width="4.6" height="2.8" fill="#ff9a40" opacity="0.74"/><rect x="2265" y="374" width="4.2" height="2.0" fill="#d0e0a0" opacity="0.49"/><rect x="2206" y="343" width="4.4" height="2.2" fill="#d0e0a0" opacity="0.35"/><rect x="2251" y="421" width="2.6" height="2.0" fill="#ffe0a0" opacity="0.50"/><rect x="2182" y="370" width="5.2" height="2.3" fill="#ffb050" opacity="0.52"/><rect x="2276" y="374" width="2.4" height="1.8" fill="#ffe0a0" opacity="0.56"/><rect x="2270" y="301" width="2.3" height="1.6" fill="#d0e0a0" opacity="0.62"/><rect x="2201" y="376" width="3.4" height="2.1" fill="#d0e0a0" opacity="0.53"/><rect x="2233" y="343" width="5.0" height="2.7" fill="#ffb050" opacity="0.40"/><rect x="2208" y="349" width="5.4" height="2.2" fill="#ff9a40" opacity="0.83"/><rect x="2221" y="354" width="4.9" height="2.3" fill="#ffe0a0" opacity="0.72"/><rect x="2176" y="344" width="4.6" height="2.0" fill="#ffb050" opacity="0.61"/><rect x="2178" y="409" width="4.8" height="2.4" fill="#d0e0a0" opacity="0.61"/><rect x="2259" y="325" width="3.4" height="2.7" fill="#d0e0a0" opacity="0.67"/><rect x="2000" y="404" width="8.4" height="4.0" fill="#8a6070" opacity="0.36"/><rect x="1751" y="414" width="5.1" height="3.1" fill="#503848" opacity="0.40"/><rect x="1756" y="395" width="5.6" height="2.4" fill="#503848" opacity="0.80"/><rect x="1963" y="398" width="3.0" height="2.4" fill="#8a6070" opacity="0.61"/><rect x="1961" y="395" width="5.0" height="2.2" fill="#705060" opacity="0.66"/><rect x="2085" y="396" width="2.5" height="2.0" fill="#503848" opacity="0.47"/><rect x="1864" y="395" width="5.1" height="3.3" fill="#8a6070" opacity="0.57"/><rect x="1910" y="396" width="6.4" height="3.8" fill="#8a6070" opacity="0.66"/><rect x="1853" y="395" width="5.8" height="3.9" fill="#ffb050" opacity="0.80"/><rect x="2089" y="403" width="8.2" height="3.2" fill="#705060" opacity="0.38"/><rect x="2031" y="413" width="4.7" height="3.2" fill="#705060" opacity="0.79"/><rect x="1951" y="416" width="3.2" height="2.5" fill="#ffb050" opacity="0.54"/><rect x="1753" y="419" width="3.3" height="2.8" fill="#503848" opacity="0.62"/><rect x="1910" y="405" width="3.6" height="2.1" fill="#8a6070" opacity="0.81"/><rect x="1980" y="405" width="4.0" height="2.9" fill="#503848" opacity="0.37"/><rect x="2026" y="404" width="2.7" height="2.3" fill="#ffb050" opacity="0.48"/><rect x="2097" y="398" width="3.6" height="2.9" fill="#ffb050" opacity="0.53"/><rect x="2050" y="405" width="5.8" height="3.9" fill="#ffb050" opacity="0.59"/><rect x="1835" y="418" width="6.5" height="3.4" fill="#503848" opacity="0.57"/><rect x="2161" y="409" width="3.4" height="2.8" fill="#ffb050" opacity="0.73"/><rect x="2031" y="397" width="3.9" height="3.7" fill="#705060" opacity="0.71"/><rect x="1810" y="394" width="7.7" height="3.4" fill="#ffb050" opacity="0.47"/><rect x="1828" y="419" width="4.9" height="2.1" fill="#503848" opacity="0.73"/><rect x="1830" y="414" width="2.6" height="2.2" fill="#503848" opacity="0.71"/><rect x="1867" y="405" width="9.5" height="3.8" fill="#ffb050" opacity="0.44"/><rect x="1902" y="416" width="3.5" height="3.4" fill="#705060" opacity="0.70"/><rect x="1942" y="422" width="3.6" height="2.8" fill="#8a6070" opacity="0.41"/><rect x="2129" y="415" width="5.6" height="3.4" fill="#8a6070" opacity="0.65"/><rect x="1929" y="415" width="4.4" height="2.3" fill="#8a6070" opacity="0.66"/><rect x="2141" y="410" width="5.3" height="2.5" fill="#705060" opacity="0.48"/><rect x="1930" y="413" width="3.2" height="2.7" fill="#8a6070" opacity="0.73"/><rect x="2022" y="419" width="9.6" height="3.8" fill="#8a6070" opacity="0.69"/><rect x="1765" y="403" width="7.8" height="3.6" fill="#503848" opacity="0.39"/><rect x="2038" y="405" width="5.1" height="3.5" fill="#ffb050" opacity="0.39"/><rect x="2143" y="406" width="7.0" height="3.9" fill="#705060" opacity="0.69"/><rect x="1835" y="413" width="6.6" height="3.7" fill="#ffb050" opacity="0.44"/><rect x="2145" y="417" width="5.8" height="3.1" fill="#ffb050" opacity="0.83"/><rect x="2015" y="409" width="3.2" height="2.5" fill="#8a6070" opacity="0.52"/><rect x="1788" y="412" width="4.7" height="2.3" fill="#705060" opacity="0.47"/><rect x="1850" y="408" width="6.1" height="2.9" fill="#503848" opacity="0.42"/></svg>
<div style="left:167.0px;top:1202.0px;width:2048.0px;height:393.5px;background:#000;border-radius:0 10px 10px 10px;box-shadow:0 0 10px 2px rgba(0,0,0,0.55);"></div>
<svg class="abs" style="left:177px;top:1208px" width="2028" height="300" viewBox="0 0 2028 300"><defs><filter id="nz" x="0" y="0" width="100%" height="100%"><feTurbulence type="fractalNoise" baseFrequency="0.22" numOctaves="2" seed="3" result="n"/><feColorMatrix type="matrix" values="0 0 0 0 0  0 0 0 0 0  0 0 0 0 0.04  2.8 0 0 0 -0.95"/></filter>
<filter id="nz2" x="0" y="0" width="100%" height="100%"><feTurbulence type="fractalNoise" baseFrequency="0.2" numOctaves="2" seed="11"/><feColorMatrix type="matrix" values="0 0 0 0 0.03  0 0 0 0 0  0 0 0 0 0.58  0 2.4 0 0 -1.1"/></filter>
<filter id="b1"><feGaussianBlur stdDeviation="3 0.6"/></filter><filter id="b2"><feGaussianBlur stdDeviation="2"/></filter>
<linearGradient id="hg" x1="0" y1="0" x2="1" y2="0"><stop offset="0" stop-color="#9a20f0" stop-opacity="0"/><stop offset="0.3" stop-color="#a428f4" stop-opacity="0.75"/><stop offset="0.5" stop-color="#e9a0ff" stop-opacity="1"/><stop offset="0.7" stop-color="#a428f4" stop-opacity="0.75"/><stop offset="1" stop-color="#9a20f0" stop-opacity="0"/></linearGradient>
</defs><rect width="2028" height="300" fill="#02005e"/><rect width="2028" height="300" filter="url(#nz2)"/><rect width="2028" height="300" filter="url(#nz)"/><rect y="89" width="2028" height="3" fill="#2a20c8" opacity="0.3"/><rect y="170" width="2028" height="3" fill="#2a20c8" opacity="0.3"/><rect y="269" width="2028" height="3" fill="#2a20c8" opacity="0.15"/><rect y="243" width="2028" height="3" fill="#2a20c8" opacity="0.1"/><path d="M115.3 0 V300" stroke="#6a18d0" stroke-width="2" opacity="0.8" stroke-dasharray="3 5 8 4 2 6"/><path d="M167.0 0 V300" stroke="#a020f0" stroke-width="2" opacity="0.9" stroke-dasharray="10 3 6 2 14 4"/><path d="M269.0 0 V300" stroke="#a020f0" stroke-width="2" opacity="0.85" stroke-dasharray="4 4 7 3 2 5"/><path d="M317.0 0 V300" stroke="#c070e8" stroke-width="2.5" opacity="0.95" stroke-dasharray="8 3 26 1 12 1 26 2 8 1 26 2 18 1"/><path d="M317.0 80 V220" stroke="#f0c0ff" stroke-width="2" opacity="0.9" stroke-dasharray="5 2 5 2 18 1 5 1 12 2 8 1 12 2"/><rect x="346" y="0" width="132" height="2" fill="#a020f0" opacity="0.30" filter="url(#b1)"/><rect x="346" y="16" width="132" height="2" fill="#a020f0" opacity="0.46" filter="url(#b1)"/><rect x="346" y="34" width="132" height="5" fill="#a020f0" opacity="0.33" filter="url(#b1)"/><rect x="346" y="43" width="132" height="3" fill="#a020f0" opacity="0.34" filter="url(#b1)"/><rect x="346" y="51" width="132" height="3" fill="#a020f0" opacity="0.39" filter="url(#b1)"/><rect x="346" y="56" width="132" height="5" fill="#a020f0" opacity="0.34" filter="url(#b1)"/><rect x="346" y="74" width="132" height="5" fill="#a020f0" opacity="0.46" filter="url(#b1)"/><rect x="346" y="82" width="132" height="5" fill="#a020f0" opacity="0.31" filter="url(#b1)"/><rect x="346" y="91" width="132" height="2" fill="#a020f0" opacity="0.26" filter="url(#b1)"/><rect x="346" y="96" width="132" height="5" fill="#a020f0" opacity="0.39" filter="url(#b1)"/><rect x="353" y="153" width="120" height="3" fill="#a020f0" opacity="0.43" filter="url(#b1)"/><rect x="353" y="159" width="120" height="2" fill="#a020f0" opacity="0.26" filter="url(#b1)"/><rect x="346" y="190" width="132" height="3" fill="#a020f0" opacity="0.43" filter="url(#b1)"/><rect x="346" y="198" width="132" height="5" fill="#a020f0" opacity="0.38" filter="url(#b1)"/><rect x="346" y="206" width="132" height="3" fill="#a020f0" opacity="0.37" filter="url(#b1)"/><rect x="346" y="212" width="132" height="4" fill="#a020f0" opacity="0.59" filter="url(#b1)"/><rect x="346" y="230" width="132" height="4" fill="#a020f0" opacity="0.36" filter="url(#b1)"/><rect x="346" y="236" width="132" height="5" fill="#a020f0" opacity="0.52" filter="url(#b1)"/><rect x="346" y="246" width="132" height="5" fill="#a020f0" opacity="0.37" filter="url(#b1)"/><rect x="346" y="263" width="132" height="5" fill="#a020f0" opacity="0.55" filter="url(#b1)"/><rect x="346" y="271" width="132" height="3" fill="#a020f0" opacity="0.49" filter="url(#b1)"/><rect x="346" y="276" width="132" height="2" fill="#a020f0" opacity="0.36" filter="url(#b1)"/><rect x="346" y="282" width="132" height="5" fill="#a020f0" opacity="0.50" filter="url(#b1)"/><rect x="346" y="292" width="132" height="3" fill="#a020f0" opacity="0.51" filter="url(#b1)"/><rect x="346" y="299" width="132" height="3" fill="#a020f0" opacity="0.37" filter="url(#b1)"/><rect x="352" y="0" width="48" height="4" fill="url(#hg)" opacity="0.79"/><rect x="343" y="8" width="66" height="6" fill="url(#hg)" opacity="0.73"/><rect x="352" y="18" width="48" height="5" fill="url(#hg)" opacity="0.79"/><rect x="354" y="26" width="44" height="6" fill="url(#hg)" opacity="0.70"/><rect x="344" y="58" width="64" height="3" fill="url(#hg)" opacity="0.84"/><rect x="348" y="64" width="57" height="5" fill="url(#hg)" opacity="0.89"/><rect x="355" y="71" width="42" height="5" fill="url(#hg)" opacity="0.75"/><rect x="356" y="77" width="39" height="3" fill="url(#hg)" opacity="1.00"/><rect x="352" y="84" width="48" height="3" fill="url(#hg)" opacity="0.83"/><rect x="348" y="88" width="55" height="4" fill="url(#hg)" opacity="0.66"/><rect x="347" y="96" width="59" height="3" fill="url(#hg)" opacity="0.97"/><rect x="343" y="100" width="65" height="6" fill="url(#hg)" opacity="0.64"/><rect x="354" y="114" width="43" height="5" fill="url(#hg)" opacity="0.77"/><rect x="349" y="121" width="55" height="3" fill="url(#hg)" opacity="0.64"/><rect x="345" y="134" width="62" height="3" fill="url(#hg)" opacity="0.92"/><rect x="354" y="141" width="45" height="6" fill="url(#hg)" opacity="0.92"/><rect x="355" y="149" width="42" height="6" fill="url(#hg)" opacity="0.63"/><rect x="343" y="159" width="67" height="4" fill="url(#hg)" opacity="0.74"/><rect x="352" y="177" width="48" height="4" fill="url(#hg)" opacity="0.94"/><rect x="354" y="191" width="45" height="4" fill="url(#hg)" opacity="0.95"/><rect x="346" y="196" width="59" height="4" fill="url(#hg)" opacity="0.73"/><rect x="347" y="202" width="59" height="3" fill="url(#hg)" opacity="0.87"/><rect x="344" y="232" width="64" height="4" fill="url(#hg)" opacity="0.91"/><rect x="350" y="238" width="53" height="3" fill="url(#hg)" opacity="0.96"/><rect x="345" y="248" width="62" height="3" fill="url(#hg)" opacity="1.00"/><rect x="355" y="277" width="42" height="5" fill="url(#hg)" opacity="0.68"/><rect x="344" y="284" width="65" height="5" fill="url(#hg)" opacity="0.87"/><rect x="424" y="0" width="55" height="4" fill="url(#hg)" opacity="0.95"/><rect x="430" y="16" width="42" height="3" fill="url(#hg)" opacity="0.65"/><rect x="432" y="49" width="38" height="5" fill="url(#hg)" opacity="0.81"/><rect x="423" y="71" width="57" height="4" fill="url(#hg)" opacity="0.86"/><rect x="422" y="95" width="58" height="3" fill="url(#hg)" opacity="0.68"/><rect x="430" y="100" width="42" height="5" fill="url(#hg)" opacity="0.90"/><rect x="426" y="109" width="51" height="6" fill="url(#hg)" opacity="0.76"/><rect x="425" y="117" width="51" height="6" fill="url(#hg)" opacity="0.74"/><rect x="434" y="125" width="35" height="5" fill="url(#hg)" opacity="0.77"/><rect x="422" y="150" width="58" height="3" fill="url(#hg)" opacity="0.75"/><rect x="432" y="165" width="37" height="4" fill="url(#hg)" opacity="0.67"/><rect x="425" y="172" width="53" height="3" fill="url(#hg)" opacity="0.97"/><rect x="432" y="184" width="37" height="3" fill="url(#hg)" opacity="0.61"/><rect x="424" y="189" width="54" height="3" fill="url(#hg)" opacity="0.70"/><rect x="421" y="194" width="60" height="3" fill="url(#hg)" opacity="0.80"/><rect x="426" y="205" width="50" height="4" fill="url(#hg)" opacity="0.74"/><rect x="424" y="213" width="55" height="5" fill="url(#hg)" opacity="0.78"/><rect x="430" y="222" width="42" height="5" fill="url(#hg)" opacity="0.96"/><rect x="433" y="252" width="36" height="5" fill="url(#hg)" opacity="0.89"/><rect x="434" y="268" width="35" height="4" fill="url(#hg)" opacity="0.86"/><rect x="429" y="294" width="44" height="3" fill="url(#hg)" opacity="0.95"/><path d="M376.0 0 V300" stroke="#fff0d8" stroke-width="3" opacity="1"/><path d="M430.5 0 V110" stroke="#fff0d8" stroke-width="3.5" opacity="1"/><path d="M451.0 0 V300" stroke="#fff0d8" stroke-width="3" opacity="0.95"/><path d="M461.0 58 V162" stroke="#d040ff" stroke-width="2.5" opacity="0.9" stroke-dasharray="5 1 26 2 18 2 8 1 12 1 12 2 8 1"/><path d="M475.0 0 V132" stroke="#d040ff" stroke-width="2.5" opacity="0.8" stroke-dasharray="12 1 12 2 12 2 18 1 26 1 18 2 8 2"/><path d="M475.0 180 V300" stroke="#a020f0" stroke-width="2.5" opacity="0.8" stroke-dasharray="12 1 12 1 18 1 8 2 26 3 18 1 26 1"/><path d="M483.0 0 V300" stroke="#6a18d0" stroke-width="2" opacity="0.6" stroke-dasharray="8 2 5 2 8 2 8 2 5 1 8 1 8 2"/><path d="M515.0 20 V140" stroke="#a020f0" stroke-width="2" opacity="0.6" stroke-dasharray="8 3 12 1 8 2 18 1 18 2 18 2 5 3"/><path d="M403.0 270 V300" stroke="#d040ff" stroke-width="2" opacity="0.8"/><path d="M360.0 0 V60" stroke="#a020f0" stroke-width="2" opacity="0.6" stroke-dasharray="8 1 5 1 8 3 26 1 26 2 5 1 5 2"/><path d="M344.0 110 V300" stroke="#6a18d0" stroke-width="2" opacity="0.6" stroke-dasharray="5 1 5 2 8 3 18 1 8 1 26 1 26 3"/><path d="M376.0 0 V300" stroke="#ffee90" stroke-width="1.5" opacity="0.9" stroke-dasharray="3 10 7 9 3 7 5 5 13 3 6 13"/><path d="M451.0 0 V300" stroke="#ffee90" stroke-width="1.5" opacity="0.8" stroke-dasharray="4 2 6 6 3 2 5 10 2 8 14 10"/><path d="M430.5 0 V105" stroke="#ffee90" stroke-width="2" opacity="0.9"/><rect x="564" y="0" width="125" height="3" fill="#a020f0" opacity="0.34" filter="url(#b1)"/><rect x="564" y="6" width="125" height="5" fill="#a020f0" opacity="0.27" filter="url(#b1)"/><rect x="564" y="15" width="125" height="4" fill="#a020f0" opacity="0.49" filter="url(#b1)"/><rect x="564" y="22" width="125" height="5" fill="#a020f0" opacity="0.32" filter="url(#b1)"/><rect x="564" y="30" width="125" height="3" fill="#a020f0" opacity="0.41" filter="url(#b1)"/><rect x="564" y="38" width="125" height="3" fill="#a020f0" opacity="0.46" filter="url(#b1)"/><rect x="564" y="77" width="125" height="5" fill="#a020f0" opacity="0.27" filter="url(#b1)"/><rect x="564" y="102" width="125" height="4" fill="#a020f0" opacity="0.45" filter="url(#b1)"/><rect x="564" y="110" width="125" height="4" fill="#a020f0" opacity="0.42" filter="url(#b1)"/><rect x="564" y="119" width="125" height="3" fill="#a020f0" opacity="0.48" filter="url(#b1)"/><rect x="564" y="125" width="125" height="3" fill="#a020f0" opacity="0.29" filter="url(#b1)"/><rect x="564" y="132" width="125" height="5" fill="#a020f0" opacity="0.37" filter="url(#b1)"/><rect x="564" y="168" width="125" height="5" fill="#a020f0" opacity="0.29" filter="url(#b1)"/><rect x="564" y="181" width="125" height="3" fill="#a020f0" opacity="0.29" filter="url(#b1)"/><rect x="564" y="193" width="125" height="3" fill="#a020f0" opacity="0.33" filter="url(#b1)"/><rect x="564" y="205" width="125" height="2" fill="#a020f0" opacity="0.44" filter="url(#b1)"/><rect x="564" y="221" width="125" height="2" fill="#a020f0" opacity="0.32" filter="url(#b1)"/><rect x="564" y="232" width="125" height="4" fill="#a020f0" opacity="0.36" filter="url(#b1)"/><rect x="564" y="239" width="125" height="3" fill="#a020f0" opacity="0.28" filter="url(#b1)"/><rect x="564" y="247" width="125" height="2" fill="#a020f0" opacity="0.28" filter="url(#b1)"/><rect x="564" y="265" width="125" height="3" fill="#a020f0" opacity="0.42" filter="url(#b1)"/><rect x="564" y="278" width="125" height="2" fill="#a020f0" opacity="0.25" filter="url(#b1)"/><rect x="564" y="296" width="125" height="3" fill="#a020f0" opacity="0.36" filter="url(#b1)"/><rect x="557" y="0" width="66" height="6" fill="url(#hg)" opacity="0.81"/><rect x="567" y="7" width="45" height="6" fill="url(#hg)" opacity="0.91"/><rect x="558" y="20" width="63" height="4" fill="url(#hg)" opacity="0.81"/><rect x="562" y="34" width="55" height="3" fill="url(#hg)" opacity="0.68"/><rect x="568" y="53" width="43" height="3" fill="url(#hg)" opacity="0.62"/><rect x="566" y="59" width="47" height="3" fill="url(#hg)" opacity="0.93"/><rect x="558" y="63" width="62" height="6" fill="url(#hg)" opacity="0.78"/><rect x="563" y="71" width="53" height="4" fill="url(#hg)" opacity="0.95"/><rect x="555" y="77" width="70" height="5" fill="url(#hg)" opacity="0.65"/><rect x="567" y="85" width="45" height="4" fill="url(#hg)" opacity="0.78"/><rect x="558" y="91" width="64" height="3" fill="url(#hg)" opacity="0.95"/><rect x="557" y="95" width="65" height="3" fill="url(#hg)" opacity="0.88"/><rect x="558" y="100" width="63" height="5" fill="url(#hg)" opacity="0.72"/><rect x="566" y="107" width="48" height="6" fill="url(#hg)" opacity="0.82"/><rect x="566" y="122" width="47" height="5" fill="url(#hg)" opacity="0.98"/><rect x="559" y="135" width="61" height="4" fill="url(#hg)" opacity="0.69"/><rect x="554" y="143" width="71" height="3" fill="url(#hg)" opacity="0.73"/><rect x="567" y="150" width="45" height="4" fill="url(#hg)" opacity="0.72"/><rect x="559" y="155" width="61" height="4" fill="url(#hg)" opacity="0.88"/><rect x="567" y="161" width="46" height="5" fill="url(#hg)" opacity="0.66"/><rect x="567" y="169" width="46" height="6" fill="url(#hg)" opacity="0.73"/><rect x="563" y="183" width="53" height="5" fill="url(#hg)" opacity="0.62"/><rect x="564" y="190" width="51" height="3" fill="url(#hg)" opacity="0.86"/><rect x="566" y="197" width="46" height="6" fill="url(#hg)" opacity="0.86"/><rect x="561" y="206" width="57" height="6" fill="url(#hg)" opacity="0.63"/><rect x="562" y="216" width="55" height="3" fill="url(#hg)" opacity="0.61"/><rect x="557" y="221" width="65" height="3" fill="url(#hg)" opacity="0.96"/><rect x="555" y="228" width="69" height="6" fill="url(#hg)" opacity="0.68"/><rect x="565" y="236" width="49" height="3" fill="url(#hg)" opacity="0.72"/><rect x="560" y="248" width="59" height="4" fill="url(#hg)" opacity="0.90"/><rect x="567" y="255" width="46" height="4" fill="url(#hg)" opacity="0.79"/><rect x="557" y="261" width="64" height="5" fill="url(#hg)" opacity="0.91"/><rect x="555" y="269" width="69" height="6" fill="url(#hg)" opacity="0.83"/><rect x="565" y="277" width="49" height="3" fill="url(#hg)" opacity="0.83"/><rect x="568" y="281" width="43" height="3" fill="url(#hg)" opacity="0.60"/><rect x="567" y="285" width="46" height="5" fill="url(#hg)" opacity="0.66"/><rect x="565" y="291" width="49" height="6" fill="url(#hg)" opacity="0.67"/><rect x="564" y="299" width="51" height="4" fill="url(#hg)" opacity="0.79"/><rect x="643" y="21" width="45" height="3" fill="url(#hg)" opacity="0.75"/><rect x="635" y="27" width="60" height="3" fill="url(#hg)" opacity="0.98"/><rect x="637" y="34" width="56" height="5" fill="url(#hg)" opacity="0.90"/><rect x="636" y="41" width="59" height="4" fill="url(#hg)" opacity="0.86"/><rect x="635" y="47" width="60" height="3" fill="url(#hg)" opacity="0.63"/><rect x="633" y="52" width="65" height="4" fill="url(#hg)" opacity="0.92"/><rect x="633" y="57" width="64" height="4" fill="url(#hg)" opacity="0.94"/><rect x="641" y="64" width="47" height="4" fill="url(#hg)" opacity="0.84"/><rect x="636" y="73" width="58" height="3" fill="url(#hg)" opacity="0.95"/><rect x="636" y="80" width="58" height="5" fill="url(#hg)" opacity="0.97"/><rect x="631" y="88" width="68" height="3" fill="url(#hg)" opacity="0.62"/><rect x="634" y="95" width="61" height="3" fill="url(#hg)" opacity="0.76"/><rect x="635" y="100" width="60" height="3" fill="url(#hg)" opacity="0.91"/><rect x="640" y="132" width="51" height="6" fill="url(#hg)" opacity="0.75"/><rect x="630" y="157" width="70" height="4" fill="url(#hg)" opacity="0.69"/><rect x="634" y="167" width="61" height="3" fill="url(#hg)" opacity="0.92"/><rect x="634" y="182" width="61" height="3" fill="url(#hg)" opacity="0.96"/><rect x="638" y="186" width="53" height="3" fill="url(#hg)" opacity="0.72"/><rect x="640" y="191" width="49" height="4" fill="url(#hg)" opacity="0.84"/><rect x="630" y="211" width="70" height="4" fill="url(#hg)" opacity="0.95"/><rect x="637" y="227" width="55" height="3" fill="url(#hg)" opacity="0.76"/><rect x="640" y="232" width="49" height="6" fill="url(#hg)" opacity="0.66"/><rect x="636" y="245" width="57" height="3" fill="url(#hg)" opacity="0.63"/><rect x="639" y="271" width="52" height="5" fill="url(#hg)" opacity="0.79"/><rect x="645" y="288" width="41" height="3" fill="url(#hg)" opacity="0.73"/><path d="M524.5 0 V300" stroke="#a020f0" stroke-width="2.5" opacity="0.8" stroke-dasharray="12 1 18 2 26 1 5 1 5 2 8 2 12 2"/><path d="M532.0 0 V300" stroke="#d040ff" stroke-width="2" opacity="0.7" stroke-dasharray="8 2 8 1 12 3 18 2 18 2 26 3 8 1"/><path d="M543.0 30 V300" stroke="#d040ff" stroke-width="2.5" opacity="0.75" stroke-dasharray="18 3 5 1 8 1 8 2 26 2 12 1 26 3"/><path d="M565.0 0 V110" stroke="#a020f0" stroke-width="2" opacity="0.7" stroke-dasharray="18 1 12 2 5 3 26 2 18 2 12 2 12 2"/><path d="M565.0 140 V280" stroke="#a020f0" stroke-width="2" opacity="0.6" stroke-dasharray="26 1 18 2 12 1 5 1 26 2 18 2 26 1"/><path d="M581.6 12 V108" stroke="#ffee90" stroke-width="3.5" opacity="0.95"/><path d="M589.7 0 V300" stroke="#fff0d8" stroke-width="3" opacity="1"/><path d="M604.6 135 V275" stroke="#a020f0" stroke-width="2" opacity="0.6" stroke-dasharray="26 2 5 2 18 1 5 2 8 1 26 3 26 1"/><path d="M641.0 0 V300" stroke="#a020f0" stroke-width="2" opacity="0.55" stroke-dasharray="18 1 26 2 8 2 26 1 18 3 18 1 18 2"/><path d="M665.0 0 V300" stroke="#fff0d8" stroke-width="3" opacity="1"/><path d="M682.0 0 V300" stroke="#d040ff" stroke-width="2.5" opacity="0.7" stroke-dasharray="12 2 12 1 26 2 5 3 12 1 8 3 5 1"/><path d="M698.5 0 V25" stroke="#a020f0" stroke-width="2" opacity="0.6"/><path d="M710.0 60 V110" stroke="#6a18d0" stroke-width="2" opacity="0.5" stroke-dasharray="12 3 8 2 5 3 12 2 12 1 12 2 18 1"/><path d="M727.4 87 V300" stroke="#c060e0" stroke-width="2.5" opacity="0.85" stroke-dasharray="26 2 18 2 5 2 12 2 12 2 18 2 5 1"/><path d="M733.0 0 V28" stroke="#fff0d8" stroke-width="3" opacity="0.9"/><path d="M739.0 0 V30" stroke="#d040ff" stroke-width="6" opacity="0.6"/><path d="M752.0 0 V26" stroke="#d040ff" stroke-width="2" opacity="0.7"/><path d="M752.0 95 V300" stroke="#a020f0" stroke-width="2.5" opacity="0.7" stroke-dasharray="26 2 26 2 8 2 5 1 12 3 18 3 18 1"/><path d="M766.0 0 V50" stroke="#f0b0ff" stroke-width="3" opacity="0.9" stroke-dasharray="12 2 12 2 26 2 5 2 18 1 5 3 26 2"/><path d="M766.0 135 V245" stroke="#f0b0ff" stroke-width="3" opacity="0.9" stroke-dasharray="12 3 12 2 8 1 26 1 26 2 5 2 8 1"/><path d="M772.7 0 V105" stroke="#a020f0" stroke-width="2" opacity="0.6" stroke-dasharray="5 2 18 2 18 2 18 2 12 1 8 3 26 2"/><path d="M790.6 5 V108" stroke="#d040ff" stroke-width="2.5" opacity="0.7" stroke-dasharray="12 1 8 2 5 2 5 3 5 3 8 3 18 2"/><path d="M790.6 250 V300" stroke="#d040ff" stroke-width="2.5" opacity="0.8" stroke-dasharray="8 3 12 1 8 1 8 3 5 2 5 2 12 1"/><path d="M816.0 47 V202" stroke="#ffee90" stroke-width="3.5" opacity="1"/><path d="M831.5 0 V145" stroke="#d040ff" stroke-width="2.5" opacity="0.7" stroke-dasharray="18 3 12 1 26 3 26 2 26 1 8 2 5 2"/><path d="M861.0 0 V92" stroke="#d040ff" stroke-width="2.5" opacity="0.75" stroke-dasharray="26 1 12 1 26 1 5 2 8 1 18 1 18 2"/><path d="M861.0 168 V245" stroke="#d040ff" stroke-width="2.5" opacity="0.75" stroke-dasharray="26 1 18 3 26 3 5 1 26 2 5 2 8 2"/><path d="M881.4 0 V48" stroke="#d040ff" stroke-width="2" opacity="0.7" stroke-dasharray="12 2 26 3 8 1 26 1 12 3 26 1 8 1"/><path d="M881.4 200 V300" stroke="#a020f0" stroke-width="2.5" opacity="0.75" stroke-dasharray="5 3 12 2 12 1 12 1 26 1 18 2 26 3"/><path d="M903.0 163 V300" stroke="#a020f0" stroke-width="2" opacity="0.55" stroke-dasharray="18 1 5 2 26 2 12 1 18 3 8 2 18 3"/><path d="M916.0 0 V58" stroke="#a020f0" stroke-width="2" opacity="0.55" stroke-dasharray="18 1 12 3 8 1 18 1 12 1 5 3 5 2"/><path d="M933.8 165 V300" stroke="#a020f0" stroke-width="2" opacity="0.55" stroke-dasharray="8 1 12 1 26 2 5 3 5 1 12 1 18 1"/><path d="M940.0 0 V40" stroke="#d040ff" stroke-width="2" opacity="0.7"/><path d="M940.0 235 V300" stroke="#d040ff" stroke-width="2.5" opacity="0.8" stroke-dasharray="26 2 26 2 8 3 12 2 12 1 5 1 12 2"/><path d="M951.7 0 V24" stroke="#d040ff" stroke-width="2" opacity="0.7"/><path d="M951.7 222 V300" stroke="#a020f0" stroke-width="2" opacity="0.7" stroke-dasharray="5 2 5 2 5 1 12 2 18 1 12 2 18 1"/><path d="M964.5 180 V300" stroke="#d040ff" stroke-width="3" opacity="0.85" stroke-dasharray="5 3 26 2 26 2 8 2 12 1 8 2 26 2"/><path d="M981.0 186 V265" stroke="#d040ff" stroke-width="3" opacity="0.85" stroke-dasharray="18 1 18 1 8 1 5 1 26 3 18 1 5 1"/><path d="M1014.4 20 V200" stroke="#6a18d0" stroke-width="2" opacity="0.5" stroke-dasharray="18 1 8 3 26 1 12 2 26 3 18 2 8 1"/><path d="M1003.0 0 V300" stroke="#000020" stroke-width="2.5" opacity="0.7" stroke-dasharray="8 1 12 2 5 1 26 1 8 2 18 3 26 2"/><path d="M589.7 0 V300" stroke="#ffee90" stroke-width="1.5" opacity="0.9" stroke-dasharray="14 3 11 13 13 2 9 4 8 12 12 13"/><path d="M665.0 0 V300" stroke="#ffee90" stroke-width="1.5" opacity="0.85" stroke-dasharray="5 13 12 9 13 9 11 4 3 9 11 8"/><rect x="730" y="95" width="24" height="205" fill="#a020f0" opacity="0.32"/><rect x="807" y="50" width="20" height="155" fill="#a020f0" opacity="0.35" filter="url(#b2)"/><rect x="950" y="243" width="31" height="3" fill="#d040ff" opacity="0.85"/><rect x="1045" y="5" width="32" height="95" fill="#a020f0" opacity="0.4" filter="url(#b2)"/><rect x="1047" y="27" width="4" height="2" fill="#a020f0" opacity="0.48"/><rect x="1064" y="25" width="2" height="2" fill="#d040ff" opacity="0.61"/><rect x="1050" y="5" width="6" height="2" fill="#a020f0" opacity="0.35"/><rect x="1069" y="25" width="2" height="6" fill="#b040f0" opacity="0.27"/><rect x="1057" y="49" width="2" height="2" fill="#c050f8" opacity="0.31"/><rect x="1059" y="61" width="4" height="2" fill="#a020f0" opacity="0.56"/><rect x="1068" y="88" width="2" height="2" fill="#d040ff" opacity="0.47"/><rect x="1066" y="51" width="2" height="2" fill="#a020f0" opacity="0.50"/><rect x="1057" y="66" width="4" height="2" fill="#c050f8" opacity="0.58"/><rect x="1066" y="47" width="2" height="2" fill="#a020f0" opacity="0.64"/><rect x="1061" y="13" width="4" height="2" fill="#d040ff" opacity="0.54"/><rect x="1067" y="82" width="2" height="2" fill="#b040f0" opacity="0.36"/><rect x="1053" y="32" width="6" height="4" fill="#c050f8" opacity="0.25"/><rect x="1047" y="15" width="4" height="6" fill="#a020f0" opacity="0.64"/><rect x="1069" y="57" width="4" height="2" fill="#d040ff" opacity="0.58"/><rect x="1064" y="8" width="4" height="6" fill="#d040ff" opacity="0.32"/><rect x="1070" y="45" width="4" height="4" fill="#b040f0" opacity="0.59"/><rect x="1046" y="40" width="4" height="6" fill="#c050f8" opacity="0.64"/><rect x="1062" y="90" width="4" height="4" fill="#c050f8" opacity="0.26"/><rect x="1059" y="36" width="4" height="4" fill="#d040ff" opacity="0.56"/><rect x="1065" y="86" width="2" height="2" fill="#d040ff" opacity="0.26"/><rect x="1067" y="44" width="4" height="4" fill="#d040ff" opacity="0.46"/><rect x="1070" y="20" width="2" height="2" fill="#a020f0" opacity="0.62"/><rect x="1058" y="76" width="2" height="2" fill="#c050f8" opacity="0.36"/><rect x="1069" y="6" width="4" height="6" fill="#d040ff" opacity="0.65"/><rect x="1050" y="45" width="4" height="4" fill="#a020f0" opacity="0.35"/><rect x="1052" y="8" width="4" height="4" fill="#a020f0" opacity="0.64"/><rect x="1062" y="59" width="2" height="2" fill="#a020f0" opacity="0.37"/><rect x="1047" y="11" width="2" height="2" fill="#b040f0" opacity="0.28"/><rect x="1059" y="71" width="4" height="6" fill="#c050f8" opacity="0.61"/><rect x="1052" y="41" width="4" height="6" fill="#d040ff" opacity="0.59"/><rect x="1057" y="34" width="4" height="2" fill="#a020f0" opacity="0.58"/><rect x="1051" y="83" width="4" height="4" fill="#b040f0" opacity="0.50"/><rect x="1067" y="12" width="2" height="2" fill="#a020f0" opacity="0.37"/><rect x="1052" y="9" width="6" height="2" fill="#d040ff" opacity="0.40"/><rect x="1062" y="57" width="4" height="2" fill="#d040ff" opacity="0.37"/><rect x="1052" y="90" width="4" height="4" fill="#a020f0" opacity="0.54"/><rect x="1049" y="77" width="4" height="4" fill="#b040f0" opacity="0.32"/><rect x="1062" y="84" width="4" height="4" fill="#a020f0" opacity="0.62"/><rect x="1046" y="64" width="4" height="6" fill="#b040f0" opacity="0.35"/><rect x="1068" y="29" width="2" height="2" fill="#d040ff" opacity="0.52"/><rect x="1067" y="26" width="2" height="6" fill="#a020f0" opacity="0.44"/><rect x="1048" y="56" width="6" height="2" fill="#a020f0" opacity="0.30"/><rect x="1057" y="21" width="4" height="6" fill="#a020f0" opacity="0.27"/><rect x="1050" y="29" width="6" height="6" fill="#c050f8" opacity="0.62"/><rect x="1059" y="12" width="4" height="6" fill="#c050f8" opacity="0.48"/><rect x="1068" y="93" width="6" height="2" fill="#d040ff" opacity="0.63"/><rect x="1059" y="27" width="4" height="4" fill="#c050f8" opacity="0.29"/><rect x="1057" y="48" width="6" height="2" fill="#d040ff" opacity="0.57"/><rect x="1061" y="14" width="4" height="4" fill="#d040ff" opacity="0.30"/><rect x="1045" y="195" width="32" height="105" fill="#a020f0" opacity="0.45" filter="url(#b2)"/><rect x="1071" y="244" width="4" height="2" fill="#a020f0" opacity="0.61"/><rect x="1062" y="264" width="2" height="2" fill="#a020f0" opacity="0.52"/><rect x="1049" y="232" width="6" height="4" fill="#d040ff" opacity="0.59"/><rect x="1055" y="286" width="4" height="2" fill="#d040ff" opacity="0.49"/><rect x="1068" y="203" width="4" height="2" fill="#b040f0" opacity="0.43"/><rect x="1049" y="214" width="4" height="2" fill="#d040ff" opacity="0.41"/><rect x="1063" y="196" width="6" height="2" fill="#d040ff" opacity="0.44"/><rect x="1058" y="291" width="6" height="2" fill="#a020f0" opacity="0.61"/><rect x="1050" y="243" width="4" height="6" fill="#b040f0" opacity="0.34"/><rect x="1070" y="228" width="6" height="2" fill="#b040f0" opacity="0.42"/><rect x="1063" y="252" width="4" height="2" fill="#d040ff" opacity="0.31"/><rect x="1066" y="256" width="6" height="6" fill="#c050f8" opacity="0.35"/><rect x="1060" y="223" width="6" height="2" fill="#c050f8" opacity="0.65"/><rect x="1049" y="227" width="2" height="2" fill="#c050f8" opacity="0.42"/><rect x="1047" y="278" width="6" height="4" fill="#a020f0" opacity="0.51"/><rect x="1067" y="292" width="4" height="6" fill="#d040ff" opacity="0.27"/><rect x="1069" y="206" width="2" height="4" fill="#d040ff" opacity="0.37"/><rect x="1070" y="283" width="6" height="2" fill="#a020f0" opacity="0.40"/><rect x="1053" y="262" width="2" height="6" fill="#c050f8" opacity="0.45"/><rect x="1059" y="264" width="4" height="2" fill="#a020f0" opacity="0.28"/><rect x="1068" y="253" width="4" height="4" fill="#c050f8" opacity="0.41"/><rect x="1070" y="221" width="2" height="2" fill="#a020f0" opacity="0.52"/><rect x="1051" y="228" width="2" height="6" fill="#a020f0" opacity="0.39"/><rect x="1065" y="292" width="4" height="6" fill="#b040f0" opacity="0.56"/><rect x="1051" y="238" width="4" height="6" fill="#a020f0" opacity="0.63"/><rect x="1068" y="218" width="4" height="6" fill="#a020f0" opacity="0.56"/><rect x="1048" y="217" width="4" height="4" fill="#d040ff" opacity="0.26"/><rect x="1049" y="236" width="6" height="2" fill="#a020f0" opacity="0.48"/><rect x="1070" y="253" width="4" height="4" fill="#a020f0" opacity="0.38"/><rect x="1066" y="265" width="4" height="6" fill="#b040f0" opacity="0.30"/><rect x="1061" y="225" width="4" height="2" fill="#a020f0" opacity="0.64"/><rect x="1050" y="272" width="4" height="4" fill="#c050f8" opacity="0.58"/><rect x="1061" y="281" width="2" height="2" fill="#d040ff" opacity="0.49"/><rect x="1056" y="252" width="2" height="2" fill="#d040ff" opacity="0.58"/><rect x="1047" y="220" width="4" height="2" fill="#c050f8" opacity="0.36"/><rect x="1063" y="295" width="2" height="2" fill="#d040ff" opacity="0.28"/><rect x="1047" y="215" width="6" height="4" fill="#d040ff" opacity="0.46"/><rect x="1053" y="237" width="6" height="4" fill="#b040f0" opacity="0.27"/><rect x="1047" y="211" width="2" height="2" fill="#a020f0" opacity="0.27"/><rect x="1070" y="208" width="4" height="4" fill="#a020f0" opacity="0.45"/><rect x="1050" y="289" width="2" height="2" fill="#a020f0" opacity="0.40"/><rect x="1064" y="218" width="2" height="6" fill="#d040ff" opacity="0.28"/><rect x="1049" y="275" width="6" height="6" fill="#c050f8" opacity="0.50"/><rect x="1066" y="243" width="6" height="2" fill="#d040ff" opacity="0.33"/><rect x="1060" y="206" width="6" height="2" fill="#b040f0" opacity="0.45"/><rect x="1059" y="229" width="2" height="2" fill="#c050f8" opacity="0.54"/><rect x="1051" y="224" width="6" height="2" fill="#c050f8" opacity="0.33"/><rect x="1053" y="262" width="4" height="2" fill="#c050f8" opacity="0.27"/><rect x="1057" y="229" width="4" height="6" fill="#b040f0" opacity="0.46"/><rect x="1053" y="273" width="4" height="2" fill="#b040f0" opacity="0.27"/><rect x="1058" y="210" width="4" height="6" fill="#d040ff" opacity="0.33"/><rect x="1048" y="246" width="4" height="6" fill="#a020f0" opacity="0.37"/><rect x="1047" y="262" width="6" height="6" fill="#a020f0" opacity="0.28"/><rect x="1066" y="247" width="6" height="4" fill="#a020f0" opacity="0.63"/><rect x="1056" y="266" width="6" height="4" fill="#a020f0" opacity="0.27"/><rect x="1065" y="204" width="4" height="2" fill="#d040ff" opacity="0.59"/><rect x="1070" y="251" width="2" height="6" fill="#a020f0" opacity="0.26"/><rect x="1062" y="281" width="4" height="6" fill="#a020f0" opacity="0.28"/><rect x="1055" y="204" width="2" height="2" fill="#b040f0" opacity="0.61"/><rect x="1062" y="249" width="2" height="4" fill="#c050f8" opacity="0.58"/><rect x="1061" y="236" width="4" height="2" fill="#a020f0" opacity="0.56"/><rect x="1056" y="229" width="2" height="2" fill="#a020f0" opacity="0.64"/><rect x="1048" y="221" width="6" height="6" fill="#c050f8" opacity="0.63"/><rect x="1061" y="224" width="6" height="6" fill="#c050f8" opacity="0.54"/><rect x="1048" y="215" width="6" height="2" fill="#a020f0" opacity="0.39"/><rect x="1051" y="221" width="6" height="2" fill="#a020f0" opacity="0.38"/><rect x="1049" y="270" width="4" height="2" fill="#a020f0" opacity="0.27"/><rect x="1045" y="218" width="4" height="2" fill="#b040f0" opacity="0.49"/><rect x="1068" y="291" width="4" height="2" fill="#b040f0" opacity="0.58"/><rect x="1052" y="232" width="4" height="4" fill="#a020f0" opacity="0.40"/><rect x="1087" y="46" width="31" height="179" fill="#a020f0" opacity="0.3" filter="url(#b2)"/><rect x="1090" y="86" width="6" height="2" fill="#d040ff" opacity="0.65"/><rect x="1105" y="178" width="4" height="4" fill="#a020f0" opacity="0.51"/><rect x="1097" y="193" width="4" height="2" fill="#a020f0" opacity="0.54"/><rect x="1104" y="56" width="4" height="4" fill="#c050f8" opacity="0.59"/><rect x="1111" y="199" width="2" height="6" fill="#b040f0" opacity="0.44"/><rect x="1099" y="177" width="4" height="4" fill="#b040f0" opacity="0.35"/><rect x="1090" y="103" width="2" height="2" fill="#c050f8" opacity="0.40"/><rect x="1102" y="133" width="2" height="2" fill="#a020f0" opacity="0.51"/><rect x="1095" y="129" width="6" height="4" fill="#a020f0" opacity="0.44"/><rect x="1109" y="174" width="4" height="4" fill="#a020f0" opacity="0.62"/><rect x="1102" y="221" width="2" height="6" fill="#a020f0" opacity="0.42"/><rect x="1109" y="162" width="4" height="2" fill="#b040f0" opacity="0.47"/><rect x="1110" y="161" width="2" height="2" fill="#a020f0" opacity="0.49"/><rect x="1098" y="172" width="6" height="2" fill="#c050f8" opacity="0.46"/><rect x="1108" y="184" width="4" height="2" fill="#c050f8" opacity="0.57"/><rect x="1102" y="56" width="4" height="6" fill="#c050f8" opacity="0.40"/><rect x="1105" y="209" width="4" height="4" fill="#b040f0" opacity="0.65"/><rect x="1100" y="216" width="6" height="2" fill="#c050f8" opacity="0.49"/><rect x="1096" y="192" width="4" height="2" fill="#d040ff" opacity="0.61"/><rect x="1101" y="179" width="4" height="2" fill="#d040ff" opacity="0.33"/><rect x="1088" y="134" width="4" height="6" fill="#c050f8" opacity="0.47"/><rect x="1091" y="156" width="2" height="6" fill="#c050f8" opacity="0.49"/><rect x="1093" y="94" width="6" height="2" fill="#a020f0" opacity="0.50"/><rect x="1088" y="181" width="4" height="2" fill="#c050f8" opacity="0.47"/><rect x="1093" y="190" width="4" height="2" fill="#c050f8" opacity="0.64"/><rect x="1105" y="65" width="6" height="2" fill="#b040f0" opacity="0.58"/><rect x="1098" y="135" width="6" height="2" fill="#a020f0" opacity="0.60"/><rect x="1109" y="203" width="6" height="2" fill="#b040f0" opacity="0.43"/><rect x="1103" y="221" width="4" height="6" fill="#c050f8" opacity="0.65"/><rect x="1093" y="198" width="4" height="6" fill="#b040f0" opacity="0.37"/><rect x="1103" y="124" width="4" height="2" fill="#a020f0" opacity="0.38"/><rect x="1100" y="78" width="6" height="6" fill="#a020f0" opacity="0.44"/><rect x="1111" y="128" width="4" height="6" fill="#a020f0" opacity="0.45"/><rect x="1100" y="87" width="4" height="6" fill="#d040ff" opacity="0.41"/><rect x="1096" y="120" width="4" height="6" fill="#c050f8" opacity="0.44"/><rect x="1108" y="142" width="2" height="6" fill="#b040f0" opacity="0.45"/><rect x="1105" y="165" width="6" height="4" fill="#c050f8" opacity="0.47"/><rect x="1104" y="175" width="4" height="4" fill="#a020f0" opacity="0.57"/><rect x="1102" y="165" width="4" height="2" fill="#a020f0" opacity="0.47"/><rect x="1103" y="96" width="4" height="2" fill="#a020f0" opacity="0.38"/><rect x="1099" y="133" width="4" height="2" fill="#b040f0" opacity="0.47"/><rect x="1107" y="103" width="6" height="2" fill="#b040f0" opacity="0.35"/><rect x="1102" y="145" width="4" height="2" fill="#b040f0" opacity="0.57"/><rect x="1089" y="188" width="2" height="4" fill="#b040f0" opacity="0.37"/><rect x="1099" y="210" width="6" height="2" fill="#d040ff" opacity="0.33"/><rect x="1088" y="187" width="4" height="4" fill="#c050f8" opacity="0.34"/><rect x="1098" y="67" width="2" height="2" fill="#a020f0" opacity="0.47"/><rect x="1111" y="181" width="4" height="6" fill="#c050f8" opacity="0.27"/><rect x="1099" y="174" width="6" height="2" fill="#c050f8" opacity="0.49"/><rect x="1111" y="53" width="2" height="2" fill="#d040ff" opacity="0.27"/><rect x="1095" y="168" width="4" height="2" fill="#a020f0" opacity="0.31"/><rect x="1092" y="153" width="4" height="4" fill="#d040ff" opacity="0.64"/><rect x="1098" y="114" width="4" height="6" fill="#c050f8" opacity="0.44"/><rect x="1088" y="164" width="4" height="2" fill="#c050f8" opacity="0.61"/><rect x="1107" y="156" width="2" height="6" fill="#a020f0" opacity="0.50"/><rect x="1110" y="183" width="2" height="6" fill="#a020f0" opacity="0.60"/><rect x="1102" y="105" width="6" height="2" fill="#d040ff" opacity="0.62"/><rect x="1101" y="71" width="4" height="6" fill="#c050f8" opacity="0.53"/><rect x="1087" y="186" width="2" height="4" fill="#a020f0" opacity="0.53"/><rect x="1092" y="113" width="6" height="4" fill="#a020f0" opacity="0.63"/><rect x="1110" y="154" width="4" height="6" fill="#c050f8" opacity="0.36"/><rect x="1110" y="185" width="2" height="4" fill="#b040f0" opacity="0.51"/><rect x="1101" y="186" width="4" height="2" fill="#a020f0" opacity="0.59"/><rect x="1099" y="94" width="2" height="6" fill="#d040ff" opacity="0.31"/><rect x="1106" y="146" width="4" height="6" fill="#d040ff" opacity="0.28"/><rect x="1106" y="64" width="4" height="2" fill="#a020f0" opacity="0.60"/><rect x="1098" y="173" width="4" height="2" fill="#a020f0" opacity="0.51"/><rect x="1089" y="132" width="4" height="2" fill="#d040ff" opacity="0.51"/><rect x="1094" y="111" width="6" height="4" fill="#a020f0" opacity="0.51"/><rect x="1095" y="166" width="6" height="2" fill="#d040ff" opacity="0.55"/><rect x="1091" y="165" width="2" height="2" fill="#b040f0" opacity="0.50"/><rect x="1096" y="90" width="2" height="6" fill="#a020f0" opacity="0.26"/><rect x="1089" y="184" width="2" height="2" fill="#a020f0" opacity="0.49"/><rect x="1109" y="60" width="4" height="4" fill="#a020f0" opacity="0.32"/><rect x="1090" y="189" width="2" height="2" fill="#a020f0" opacity="0.35"/><rect x="1091" y="205" width="4" height="6" fill="#c050f8" opacity="0.35"/><rect x="1110" y="85" width="4" height="2" fill="#a020f0" opacity="0.46"/><rect x="1108" y="124" width="2" height="6" fill="#a020f0" opacity="0.57"/><rect x="1104" y="176" width="4" height="6" fill="#a020f0" opacity="0.58"/><rect x="1111" y="208" width="4" height="2" fill="#a020f0" opacity="0.38"/><rect x="1109" y="206" width="6" height="6" fill="#a020f0" opacity="0.62"/><rect x="1101" y="63" width="6" height="4" fill="#c050f8" opacity="0.39"/><rect x="1089" y="112" width="2" height="2" fill="#a020f0" opacity="0.48"/><rect x="1111" y="113" width="4" height="4" fill="#d040ff" opacity="0.38"/><rect x="1098" y="213" width="6" height="4" fill="#a020f0" opacity="0.56"/><rect x="1110" y="168" width="6" height="2" fill="#a020f0" opacity="0.63"/><rect x="1104" y="77" width="4" height="2" fill="#b040f0" opacity="0.37"/><rect x="1105" y="170" width="2" height="6" fill="#d040ff" opacity="0.33"/><rect x="1089" y="136" width="2" height="2" fill="#d040ff" opacity="0.52"/><rect x="1110" y="220" width="2" height="4" fill="#d040ff" opacity="0.64"/><rect x="1107" y="60" width="11" height="160" fill="#d040ff" opacity="0.25" filter="url(#b2)"/><rect x="1107" y="104" width="2" height="6" fill="#b040f0" opacity="0.61"/><rect x="1110" y="189" width="2" height="2" fill="#c050f8" opacity="0.61"/><rect x="1108" y="93" width="2" height="4" fill="#a020f0" opacity="0.60"/><rect x="1110" y="110" width="6" height="6" fill="#d040ff" opacity="0.28"/><rect x="1111" y="213" width="2" height="4" fill="#a020f0" opacity="0.31"/><rect x="1109" y="163" width="2" height="2" fill="#a020f0" opacity="0.50"/><rect x="1110" y="85" width="4" height="2" fill="#b040f0" opacity="0.62"/><rect x="1109" y="145" width="4" height="2" fill="#c050f8" opacity="0.31"/><rect x="1110" y="185" width="4" height="4" fill="#a020f0" opacity="0.48"/><rect x="1107" y="137" width="6" height="2" fill="#d040ff" opacity="0.34"/><rect x="1108" y="204" width="2" height="2" fill="#b040f0" opacity="0.35"/><rect x="1107" y="134" width="6" height="6" fill="#b040f0" opacity="0.44"/><rect x="1107" y="212" width="2" height="6" fill="#a020f0" opacity="0.35"/><rect x="1107" y="204" width="4" height="2" fill="#b040f0" opacity="0.28"/><rect x="1109" y="74" width="2" height="6" fill="#b040f0" opacity="0.28"/><rect x="1111" y="130" width="4" height="2" fill="#b040f0" opacity="0.42"/><rect x="1112" y="77" width="6" height="2" fill="#a020f0" opacity="0.27"/><rect x="1108" y="192" width="4" height="2" fill="#b040f0" opacity="0.45"/><rect x="1109" y="76" width="4" height="6" fill="#c050f8" opacity="0.34"/><rect x="1108" y="100" width="6" height="2" fill="#c050f8" opacity="0.61"/><rect x="1107" y="95" width="6" height="2" fill="#c050f8" opacity="0.41"/><rect x="1110" y="105" width="4" height="4" fill="#c050f8" opacity="0.36"/><rect x="1110" y="95" width="6" height="6" fill="#a020f0" opacity="0.28"/><rect x="1107" y="69" width="4" height="4" fill="#d040ff" opacity="0.40"/><rect x="1110" y="99" width="2" height="6" fill="#a020f0" opacity="0.57"/><rect x="1164" y="0" width="28" height="14" fill="#d040ff" opacity="0.4" filter="url(#b2)"/><rect x="1170" y="9" width="6" height="2" fill="#c050f8" opacity="0.28"/><rect x="1174" y="7" width="2" height="2" fill="#a020f0" opacity="0.64"/><rect x="1180" y="8" width="2" height="2" fill="#b040f0" opacity="0.35"/><rect x="1169" y="9" width="4" height="4" fill="#c050f8" opacity="0.53"/><rect x="1172" y="7" width="4" height="2" fill="#a020f0" opacity="0.43"/><rect x="1164" y="1" width="6" height="2" fill="#c050f8" opacity="0.51"/><rect x="1170" y="1" width="6" height="2" fill="#c050f8" opacity="0.25"/><rect x="1165" y="4" width="4" height="4" fill="#a020f0" opacity="0.60"/><rect x="1177" y="10" width="4" height="4" fill="#a020f0" opacity="0.33"/><rect x="1180" y="1" width="4" height="2" fill="#a020f0" opacity="0.36"/><rect x="1164" y="20" width="28" height="40" fill="#d040ff" opacity="0.4" filter="url(#b2)"/><rect x="1175" y="38" width="6" height="6" fill="#a020f0" opacity="0.32"/><rect x="1176" y="30" width="6" height="4" fill="#a020f0" opacity="0.44"/><rect x="1179" y="51" width="6" height="4" fill="#b040f0" opacity="0.41"/><rect x="1180" y="49" width="6" height="4" fill="#c050f8" opacity="0.54"/><rect x="1183" y="46" width="6" height="4" fill="#d040ff" opacity="0.55"/><rect x="1180" y="27" width="4" height="6" fill="#b040f0" opacity="0.50"/><rect x="1179" y="30" width="2" height="4" fill="#b040f0" opacity="0.41"/><rect x="1174" y="42" width="4" height="2" fill="#b040f0" opacity="0.38"/><rect x="1166" y="49" width="4" height="6" fill="#d040ff" opacity="0.40"/><rect x="1170" y="38" width="4" height="4" fill="#a020f0" opacity="0.60"/><rect x="1174" y="35" width="4" height="2" fill="#c050f8" opacity="0.54"/><rect x="1172" y="22" width="4" height="4" fill="#d040ff" opacity="0.59"/><rect x="1184" y="35" width="4" height="2" fill="#b040f0" opacity="0.45"/><rect x="1166" y="30" width="6" height="4" fill="#d040ff" opacity="0.41"/><rect x="1168" y="48" width="4" height="2" fill="#b040f0" opacity="0.38"/><rect x="1179" y="42" width="4" height="2" fill="#d040ff" opacity="0.48"/><rect x="1177" y="28" width="2" height="2" fill="#c050f8" opacity="0.34"/><rect x="1177" y="41" width="4" height="2" fill="#d040ff" opacity="0.48"/><rect x="1175" y="51" width="2" height="6" fill="#d040ff" opacity="0.34"/><rect x="1174" y="56" width="4" height="2" fill="#c050f8" opacity="0.30"/><rect x="1186" y="29" width="6" height="2" fill="#b040f0" opacity="0.48"/><rect x="1172" y="21" width="4" height="4" fill="#a020f0" opacity="0.56"/><rect x="1175" y="56" width="2" height="6" fill="#a020f0" opacity="0.34"/><rect x="1178" y="48" width="6" height="6" fill="#c050f8" opacity="0.57"/><rect x="1166" y="29" width="6" height="2" fill="#b040f0" opacity="0.43"/><rect x="1169" y="20" width="2" height="2" fill="#c050f8" opacity="0.40"/><rect x="1174" y="38" width="4" height="4" fill="#a020f0" opacity="0.40"/><rect x="1180" y="24" width="6" height="2" fill="#b040f0" opacity="0.37"/><rect x="1176" y="28" width="6" height="4" fill="#b040f0" opacity="0.49"/><rect x="1176" y="30" width="2" height="4" fill="#d040ff" opacity="0.40"/><rect x="1186" y="43" width="4" height="4" fill="#d040ff" opacity="0.39"/><rect x="1173" y="54" width="4" height="2" fill="#a020f0" opacity="0.25"/><rect x="1186" y="27" width="6" height="4" fill="#a020f0" opacity="0.35"/><rect x="1168" y="45" width="4" height="4" fill="#d040ff" opacity="0.26"/><rect x="1169" y="55" width="6" height="2" fill="#a020f0" opacity="0.47"/><rect x="1164" y="66" width="28" height="79" fill="#d040ff" opacity="0.45" filter="url(#b2)"/><rect x="1182" y="107" width="2" height="2" fill="#c050f8" opacity="0.35"/><rect x="1178" y="76" width="4" height="4" fill="#b040f0" opacity="0.47"/><rect x="1167" y="102" width="2" height="2" fill="#b040f0" opacity="0.37"/><rect x="1179" y="107" width="4" height="6" fill="#b040f0" opacity="0.48"/><rect x="1181" y="93" width="6" height="2" fill="#d040ff" opacity="0.51"/><rect x="1166" y="112" width="2" height="2" fill="#b040f0" opacity="0.57"/><rect x="1166" y="134" width="2" height="2" fill="#a020f0" opacity="0.61"/><rect x="1174" y="128" width="6" height="2" fill="#c050f8" opacity="0.33"/><rect x="1184" y="91" width="2" height="2" fill="#b040f0" opacity="0.40"/><rect x="1184" y="68" width="2" height="2" fill="#c050f8" opacity="0.53"/><rect x="1179" y="89" width="2" height="2" fill="#a020f0" opacity="0.49"/><rect x="1185" y="107" width="2" height="2" fill="#b040f0" opacity="0.34"/><rect x="1166" y="135" width="6" height="2" fill="#a020f0" opacity="0.53"/><rect x="1174" y="125" width="6" height="2" fill="#c050f8" opacity="0.36"/><rect x="1180" y="128" width="4" height="2" fill="#b040f0" opacity="0.41"/><rect x="1169" y="82" width="4" height="6" fill="#a020f0" opacity="0.39"/><rect x="1175" y="113" width="4" height="6" fill="#c050f8" opacity="0.31"/><rect x="1175" y="134" width="6" height="2" fill="#a020f0" opacity="0.56"/><rect x="1173" y="80" width="4" height="2" fill="#c050f8" opacity="0.39"/><rect x="1182" y="73" width="4" height="4" fill="#d040ff" opacity="0.44"/><rect x="1172" y="109" width="4" height="4" fill="#a020f0" opacity="0.57"/><rect x="1183" y="89" width="4" height="2" fill="#c050f8" opacity="0.37"/><rect x="1183" y="125" width="6" height="6" fill="#a020f0" opacity="0.58"/><rect x="1180" y="99" width="2" height="2" fill="#a020f0" opacity="0.32"/><rect x="1184" y="90" width="6" height="6" fill="#b040f0" opacity="0.31"/><rect x="1168" y="109" width="4" height="2" fill="#a020f0" opacity="0.48"/><rect x="1168" y="114" width="6" height="2" fill="#d040ff" opacity="0.64"/><rect x="1183" y="99" width="2" height="6" fill="#c050f8" opacity="0.59"/><rect x="1186" y="113" width="4" height="2" fill="#b040f0" opacity="0.40"/><rect x="1175" y="71" width="4" height="4" fill="#c050f8" opacity="0.35"/><rect x="1182" y="126" width="2" height="2" fill="#c050f8" opacity="0.35"/><rect x="1166" y="85" width="2" height="4" fill="#a020f0" opacity="0.32"/><rect x="1164" y="135" width="4" height="4" fill="#c050f8" opacity="0.57"/><rect x="1180" y="75" width="4" height="2" fill="#d040ff" opacity="0.38"/><rect x="1166" y="118" width="2" height="2" fill="#c050f8" opacity="0.39"/><rect x="1171" y="95" width="6" height="2" fill="#b040f0" opacity="0.42"/><rect x="1178" y="127" width="6" height="6" fill="#a020f0" opacity="0.56"/><rect x="1182" y="102" width="4" height="6" fill="#a020f0" opacity="0.33"/><rect x="1165" y="82" width="4" height="2" fill="#d040ff" opacity="0.52"/><rect x="1184" y="98" width="2" height="2" fill="#b040f0" opacity="0.50"/><rect x="1178" y="129" width="6" height="2" fill="#b040f0" opacity="0.42"/><rect x="1178" y="136" width="4" height="6" fill="#d040ff" opacity="0.51"/><rect x="1164" y="99" width="4" height="2" fill="#b040f0" opacity="0.28"/><rect x="1165" y="72" width="2" height="4" fill="#b040f0" opacity="0.57"/><rect x="1179" y="78" width="2" height="2" fill="#b040f0" opacity="0.26"/><rect x="1180" y="94" width="4" height="6" fill="#a020f0" opacity="0.55"/><rect x="1184" y="75" width="6" height="4" fill="#a020f0" opacity="0.64"/><rect x="1172" y="99" width="4" height="6" fill="#c050f8" opacity="0.38"/><rect x="1178" y="128" width="6" height="4" fill="#d040ff" opacity="0.48"/><rect x="1178" y="86" width="4" height="2" fill="#a020f0" opacity="0.41"/><rect x="1177" y="93" width="4" height="6" fill="#c050f8" opacity="0.63"/><rect x="1184" y="84" width="2" height="6" fill="#d040ff" opacity="0.26"/><rect x="1174" y="135" width="4" height="6" fill="#d040ff" opacity="0.29"/><rect x="1182" y="96" width="2" height="6" fill="#b040f0" opacity="0.30"/><rect x="1174" y="67" width="4" height="2" fill="#d040ff" opacity="0.58"/><rect x="1176" y="111" width="2" height="2" fill="#b040f0" opacity="0.58"/><rect x="1173" y="85" width="4" height="4" fill="#d040ff" opacity="0.48"/><rect x="1185" y="107" width="6" height="4" fill="#a020f0" opacity="0.27"/><rect x="1166" y="98" width="4" height="4" fill="#a020f0" opacity="0.37"/><rect x="1177" y="68" width="6" height="4" fill="#b040f0" opacity="0.47"/><rect x="1178" y="104" width="2" height="6" fill="#b040f0" opacity="0.34"/><rect x="1167" y="104" width="4" height="4" fill="#b040f0" opacity="0.35"/><rect x="1184" y="104" width="4" height="6" fill="#a020f0" opacity="0.35"/><rect x="1182" y="112" width="4" height="2" fill="#a020f0" opacity="0.51"/><rect x="1182" y="108" width="2" height="4" fill="#c050f8" opacity="0.39"/><rect x="1179" y="136" width="6" height="6" fill="#c050f8" opacity="0.54"/><rect x="1166" y="116" width="2" height="2" fill="#a020f0" opacity="0.51"/><rect x="1176" y="97" width="4" height="6" fill="#a020f0" opacity="0.52"/><rect x="1168" y="116" width="4" height="6" fill="#a020f0" opacity="0.41"/><rect x="1173" y="95" width="4" height="4" fill="#a020f0" opacity="0.44"/><rect x="1182" y="84" width="2" height="2" fill="#b040f0" opacity="0.60"/><rect x="1170" y="125" width="6" height="4" fill="#b040f0" opacity="0.49"/><rect x="1186" y="133" width="4" height="2" fill="#c050f8" opacity="0.29"/><rect x="1184" y="106" width="6" height="4" fill="#d040ff" opacity="0.46"/><rect x="1167" y="107" width="4" height="4" fill="#b040f0" opacity="0.28"/><rect x="1132" y="164" width="28" height="136" fill="#6a18d0" opacity="0.35" filter="url(#b2)"/><rect x="1137" y="285" width="6" height="2" fill="#a020f0" opacity="0.44"/><rect x="1142" y="247" width="2" height="2" fill="#c050f8" opacity="0.41"/><rect x="1137" y="242" width="6" height="6" fill="#a020f0" opacity="0.52"/><rect x="1134" y="223" width="4" height="2" fill="#b040f0" opacity="0.48"/><rect x="1133" y="275" width="2" height="6" fill="#a020f0" opacity="0.31"/><rect x="1141" y="282" width="6" height="4" fill="#b040f0" opacity="0.41"/><rect x="1136" y="257" width="4" height="6" fill="#c050f8" opacity="0.57"/><rect x="1144" y="207" width="4" height="2" fill="#d040ff" opacity="0.38"/><rect x="1148" y="287" width="4" height="4" fill="#a020f0" opacity="0.56"/><rect x="1142" y="225" width="4" height="2" fill="#a020f0" opacity="0.32"/><rect x="1134" y="262" width="4" height="2" fill="#c050f8" opacity="0.33"/><rect x="1147" y="189" width="4" height="6" fill="#a020f0" opacity="0.57"/><rect x="1146" y="187" width="2" height="2" fill="#a020f0" opacity="0.28"/><rect x="1142" y="166" width="6" height="6" fill="#a020f0" opacity="0.63"/><rect x="1141" y="276" width="2" height="6" fill="#c050f8" opacity="0.39"/><rect x="1146" y="219" width="2" height="2" fill="#b040f0" opacity="0.26"/><rect x="1149" y="221" width="4" height="4" fill="#d040ff" opacity="0.26"/><rect x="1151" y="277" width="6" height="6" fill="#b040f0" opacity="0.58"/><rect x="1145" y="241" width="2" height="6" fill="#b040f0" opacity="0.41"/><rect x="1153" y="230" width="6" height="2" fill="#a020f0" opacity="0.29"/><rect x="1146" y="230" width="6" height="2" fill="#d040ff" opacity="0.54"/><rect x="1142" y="265" width="4" height="2" fill="#a020f0" opacity="0.60"/><rect x="1147" y="201" width="2" height="6" fill="#c050f8" opacity="0.39"/><rect x="1142" y="178" width="2" height="4" fill="#b040f0" opacity="0.47"/><rect x="1152" y="239" width="2" height="6" fill="#a020f0" opacity="0.60"/><rect x="1146" y="241" width="4" height="6" fill="#b040f0" opacity="0.50"/><rect x="1144" y="257" width="2" height="2" fill="#b040f0" opacity="0.53"/><rect x="1147" y="265" width="4" height="2" fill="#c050f8" opacity="0.57"/><rect x="1137" y="214" width="4" height="4" fill="#a020f0" opacity="0.48"/><rect x="1153" y="267" width="2" height="2" fill="#a020f0" opacity="0.46"/><rect x="1140" y="210" width="6" height="2" fill="#a020f0" opacity="0.63"/><rect x="1138" y="213" width="4" height="6" fill="#d040ff" opacity="0.62"/><rect x="1136" y="275" width="6" height="2" fill="#b040f0" opacity="0.38"/><rect x="1135" y="182" width="4" height="2" fill="#a020f0" opacity="0.60"/><rect x="1151" y="225" width="4" height="6" fill="#d040ff" opacity="0.34"/><rect x="1153" y="271" width="4" height="2" fill="#d040ff" opacity="0.60"/><rect x="1150" y="177" width="4" height="6" fill="#a020f0" opacity="0.58"/><rect x="1154" y="207" width="4" height="2" fill="#b040f0" opacity="0.53"/><rect x="1141" y="183" width="6" height="4" fill="#b040f0" opacity="0.49"/><rect x="1136" y="245" width="4" height="2" fill="#c050f8" opacity="0.53"/><rect x="1132" y="279" width="4" height="4" fill="#d040ff" opacity="0.37"/><rect x="1134" y="201" width="6" height="2" fill="#a020f0" opacity="0.29"/><rect x="1140" y="280" width="4" height="2" fill="#d040ff" opacity="0.62"/><rect x="1132" y="284" width="6" height="2" fill="#c050f8" opacity="0.35"/><rect x="1147" y="279" width="6" height="6" fill="#d040ff" opacity="0.26"/><rect x="1139" y="196" width="6" height="4" fill="#a020f0" opacity="0.46"/><rect x="1147" y="181" width="6" height="2" fill="#b040f0" opacity="0.42"/><rect x="1138" y="179" width="6" height="4" fill="#a020f0" opacity="0.36"/><rect x="1151" y="248" width="6" height="4" fill="#a020f0" opacity="0.50"/><rect x="1134" y="180" width="2" height="6" fill="#a020f0" opacity="0.35"/><rect x="1138" y="178" width="4" height="6" fill="#c050f8" opacity="0.65"/><rect x="1143" y="214" width="4" height="6" fill="#d040ff" opacity="0.47"/><rect x="1148" y="175" width="6" height="2" fill="#b040f0" opacity="0.41"/><rect x="1135" y="207" width="6" height="4" fill="#a020f0" opacity="0.44"/><rect x="1153" y="182" width="4" height="2" fill="#a020f0" opacity="0.53"/><rect x="1229" y="146" width="28" height="66" fill="#a020f0" opacity="0.5" filter="url(#b2)"/><rect x="1247" y="163" width="6" height="4" fill="#c050f8" opacity="0.42"/><rect x="1229" y="208" width="4" height="2" fill="#d040ff" opacity="0.50"/><rect x="1251" y="165" width="4" height="6" fill="#b040f0" opacity="0.48"/><rect x="1249" y="205" width="6" height="4" fill="#a020f0" opacity="0.29"/><rect x="1231" y="178" width="6" height="6" fill="#b040f0" opacity="0.48"/><rect x="1243" y="161" width="6" height="4" fill="#b040f0" opacity="0.40"/><rect x="1251" y="191" width="2" height="6" fill="#a020f0" opacity="0.45"/><rect x="1244" y="196" width="2" height="4" fill="#b040f0" opacity="0.56"/><rect x="1249" y="161" width="4" height="6" fill="#a020f0" opacity="0.41"/><rect x="1231" y="191" width="4" height="2" fill="#d040ff" opacity="0.40"/><rect x="1249" y="197" width="4" height="4" fill="#d040ff" opacity="0.31"/><rect x="1236" y="173" width="2" height="2" fill="#d040ff" opacity="0.44"/><rect x="1230" y="192" width="4" height="4" fill="#a020f0" opacity="0.64"/><rect x="1235" y="175" width="4" height="6" fill="#b040f0" opacity="0.55"/><rect x="1232" y="190" width="6" height="2" fill="#c050f8" opacity="0.37"/><rect x="1237" y="163" width="4" height="2" fill="#a020f0" opacity="0.38"/><rect x="1234" y="198" width="2" height="2" fill="#a020f0" opacity="0.53"/><rect x="1238" y="185" width="4" height="4" fill="#a020f0" opacity="0.34"/><rect x="1244" y="165" width="4" height="6" fill="#a020f0" opacity="0.39"/><rect x="1244" y="203" width="2" height="2" fill="#a020f0" opacity="0.60"/><rect x="1230" y="180" width="6" height="4" fill="#a020f0" opacity="0.33"/><rect x="1246" y="180" width="4" height="6" fill="#d040ff" opacity="0.44"/><rect x="1249" y="166" width="2" height="4" fill="#b040f0" opacity="0.52"/><rect x="1246" y="185" width="6" height="2" fill="#b040f0" opacity="0.46"/><rect x="1242" y="191" width="4" height="4" fill="#a020f0" opacity="0.39"/><rect x="1231" y="168" width="4" height="2" fill="#c050f8" opacity="0.42"/><rect x="1235" y="169" width="4" height="2" fill="#b040f0" opacity="0.35"/><rect x="1240" y="163" width="6" height="4" fill="#a020f0" opacity="0.39"/><rect x="1243" y="206" width="2" height="2" fill="#b040f0" opacity="0.34"/><rect x="1246" y="195" width="4" height="4" fill="#d040ff" opacity="0.54"/><rect x="1243" y="163" width="4" height="2" fill="#c050f8" opacity="0.40"/><rect x="1243" y="167" width="4" height="6" fill="#b040f0" opacity="0.28"/><rect x="1249" y="177" width="4" height="2" fill="#b040f0" opacity="0.42"/><rect x="1243" y="162" width="4" height="6" fill="#a020f0" opacity="0.38"/><rect x="1232" y="201" width="2" height="2" fill="#c050f8" opacity="0.60"/><rect x="1230" y="189" width="4" height="2" fill="#a020f0" opacity="0.52"/><rect x="1240" y="199" width="4" height="2" fill="#c050f8" opacity="0.52"/><rect x="1234" y="178" width="6" height="2" fill="#d040ff" opacity="0.53"/><rect x="1230" y="163" width="2" height="6" fill="#c050f8" opacity="0.46"/><rect x="1249" y="205" width="2" height="2" fill="#a020f0" opacity="0.30"/><rect x="1234" y="193" width="6" height="2" fill="#a020f0" opacity="0.39"/><rect x="1238" y="205" width="4" height="2" fill="#a020f0" opacity="0.61"/><rect x="1233" y="180" width="2" height="6" fill="#c050f8" opacity="0.49"/><rect x="1231" y="205" width="2" height="2" fill="#a020f0" opacity="0.54"/><rect x="1236" y="188" width="6" height="2" fill="#a020f0" opacity="0.27"/><rect x="1250" y="170" width="6" height="6" fill="#b040f0" opacity="0.57"/><rect x="1236" y="180" width="2" height="2" fill="#a020f0" opacity="0.32"/><rect x="1233" y="167" width="6" height="2" fill="#d040ff" opacity="0.63"/><rect x="1231" y="190" width="2" height="2" fill="#d040ff" opacity="0.46"/><rect x="1240" y="204" width="4" height="4" fill="#d040ff" opacity="0.41"/><path d="M1253.0 146 V212" stroke="#e070ff" stroke-width="4" opacity="0.8" stroke-dasharray="26 2 26 1 12 1 18 1 8 1 8 1 26 2"/><path d="M1254.0 0 V25" stroke="#d040ff" stroke-width="3" opacity="0.8"/><path d="M1189.0 0 V145" stroke="#f090ff" stroke-width="3" opacity="0.6" stroke-dasharray="4 9 8 7 2 8 8 13 2 10 3 9"/><path d="M1317.4 0 V228" stroke="#a020f0" stroke-width="2.5" opacity="0.75" stroke-dasharray="11 13 2 8 13 4 9 14 9 4 4 14"/><path d="M1394.0 268 V300" stroke="#6a18d0" stroke-width="2" opacity="0.5"/><rect x="1507" y="0" width="18" height="300" fill="#6a18d0" opacity="0.12" filter="url(#b2)"/><rect x="1513" y="237" width="4" height="6" fill="#b040f0" opacity="0.36"/><rect x="1510" y="136" width="4" height="2" fill="#a020f0" opacity="0.46"/><rect x="1509" y="153" width="4" height="2" fill="#d040ff" opacity="0.38"/><rect x="1511" y="37" width="6" height="2" fill="#d040ff" opacity="0.29"/><rect x="1513" y="257" width="4" height="6" fill="#b040f0" opacity="0.55"/><rect x="1515" y="42" width="6" height="6" fill="#c050f8" opacity="0.27"/><rect x="1514" y="62" width="4" height="2" fill="#c050f8" opacity="0.43"/><rect x="1508" y="221" width="4" height="2" fill="#d040ff" opacity="0.51"/><rect x="1514" y="146" width="6" height="2" fill="#c050f8" opacity="0.38"/><rect x="1515" y="20" width="4" height="4" fill="#a020f0" opacity="0.41"/><rect x="1512" y="110" width="2" height="6" fill="#d040ff" opacity="0.38"/><rect x="1508" y="147" width="4" height="2" fill="#b040f0" opacity="0.26"/><rect x="1514" y="45" width="2" height="4" fill="#a020f0" opacity="0.52"/><rect x="1518" y="269" width="4" height="2" fill="#a020f0" opacity="0.35"/><rect x="1515" y="236" width="6" height="6" fill="#a020f0" opacity="0.30"/><rect x="1509" y="239" width="4" height="2" fill="#b040f0" opacity="0.49"/><rect x="1519" y="212" width="6" height="2" fill="#d040ff" opacity="0.42"/><rect x="1510" y="214" width="6" height="6" fill="#a020f0" opacity="0.30"/><rect x="1515" y="2" width="6" height="2" fill="#a020f0" opacity="0.62"/><rect x="1516" y="36" width="4" height="6" fill="#b040f0" opacity="0.34"/><rect x="1518" y="27" width="4" height="4" fill="#d040ff" opacity="0.38"/><rect x="1514" y="33" width="6" height="2" fill="#a020f0" opacity="0.39"/><rect x="1507" y="37" width="4" height="2" fill="#b040f0" opacity="0.46"/><rect x="1509" y="290" width="4" height="4" fill="#a020f0" opacity="0.52"/><rect x="1512" y="215" width="4" height="4" fill="#a020f0" opacity="0.34"/><rect x="1514" y="174" width="6" height="2" fill="#c050f8" opacity="0.54"/><rect x="1509" y="242" width="4" height="6" fill="#a020f0" opacity="0.64"/><rect x="1509" y="108" width="2" height="6" fill="#b040f0" opacity="0.32"/><rect x="1518" y="99" width="4" height="6" fill="#b040f0" opacity="0.58"/><rect x="1509" y="270" width="6" height="2" fill="#c050f8" opacity="0.32"/><path d="M1628.0 0 V300" stroke="#1a14a0" stroke-width="2" opacity="0.6" stroke-dasharray="12 3 12 1 18 1 5 2 5 1 5 2 26 2"/><path d="M1926.0 0 V300" stroke="#1a14a0" stroke-width="2" opacity="0.5" stroke-dasharray="12 3 8 2 12 2 5 3 5 3 5 1 8 3"/><path d="M1788.0 40 V80" stroke="#6a18d0" stroke-width="2" opacity="0.6"/><rect x="1973" y="218" width="25" height="82" fill="#6a18d0" opacity="0.35" filter="url(#b2)"/><rect x="1978" y="259" width="6" height="2" fill="#c050f8" opacity="0.45"/><rect x="1983" y="281" width="6" height="2" fill="#b040f0" opacity="0.35"/><rect x="1989" y="227" width="4" height="4" fill="#d040ff" opacity="0.55"/><rect x="1991" y="284" width="4" height="4" fill="#b040f0" opacity="0.36"/><rect x="1975" y="295" width="2" height="2" fill="#a020f0" opacity="0.40"/><rect x="1984" y="269" width="4" height="4" fill="#c050f8" opacity="0.50"/><rect x="1989" y="293" width="4" height="2" fill="#a020f0" opacity="0.60"/><rect x="1975" y="232" width="4" height="4" fill="#a020f0" opacity="0.46"/><rect x="1976" y="292" width="6" height="6" fill="#c050f8" opacity="0.27"/><rect x="1989" y="219" width="4" height="2" fill="#d040ff" opacity="0.49"/><rect x="1996" y="217" width="32" height="83" fill="#b030ff"/><rect x="2018" y="227" width="4" height="6" fill="#f0a0ff" opacity="0.80"/><rect x="2000" y="287" width="2" height="6" fill="#ffffff" opacity="0.73"/><rect x="2000" y="230" width="4" height="2" fill="#ffd0ff" opacity="0.72"/><rect x="2000" y="243" width="2" height="4" fill="#ffffff" opacity="0.92"/><rect x="1998" y="243" width="4" height="6" fill="#f0a0ff" opacity="0.91"/><rect x="2011" y="279" width="2" height="6" fill="#ffffff" opacity="0.84"/><rect x="2000" y="243" width="4" height="2" fill="#8020e0" opacity="0.64"/><rect x="2001" y="291" width="4" height="4" fill="#ffffff" opacity="0.62"/><rect x="2017" y="239" width="2" height="4" fill="#ffffff" opacity="0.74"/><rect x="2000" y="283" width="4" height="6" fill="#f0a0ff" opacity="0.74"/><rect x="2005" y="258" width="4" height="2" fill="#ffffff" opacity="0.88"/><rect x="2011" y="271" width="4" height="6" fill="#8020e0" opacity="0.84"/><rect x="2009" y="228" width="2" height="4" fill="#f0a0ff" opacity="0.88"/><rect x="2014" y="251" width="2" height="6" fill="#ffffff" opacity="0.82"/><rect x="2011" y="249" width="2" height="2" fill="#ffd0ff" opacity="0.64"/><rect x="2000" y="270" width="2" height="2" fill="#f0a0ff" opacity="0.69"/><rect x="2016" y="277" width="2" height="4" fill="#8020e0" opacity="0.95"/><rect x="2000" y="284" width="4" height="4" fill="#ffffff" opacity="0.60"/><rect x="2019" y="235" width="4" height="4" fill="#8020e0" opacity="0.89"/><rect x="2010" y="280" width="4" height="4" fill="#ffd0ff" opacity="0.87"/><rect x="2009" y="261" width="4" height="6" fill="#f0a0ff" opacity="0.88"/><rect x="2023" y="273" width="2" height="2" fill="#ffffff" opacity="0.79"/><rect x="2019" y="248" width="2" height="6" fill="#e070ff" opacity="0.62"/><rect x="1999" y="223" width="4" height="4" fill="#ffd0ff" opacity="0.70"/><rect x="2009" y="223" width="4" height="6" fill="#ffffff" opacity="0.81"/><rect x="2011" y="255" width="2" height="4" fill="#f0a0ff" opacity="0.77"/><rect x="2010" y="273" width="4" height="6" fill="#ffd0ff" opacity="0.98"/><rect x="2002" y="235" width="2" height="4" fill="#ffffff" opacity="0.71"/><rect x="1996" y="250" width="4" height="6" fill="#ffffff" opacity="0.90"/><rect x="2012" y="267" width="2" height="4" fill="#e070ff" opacity="0.79"/><rect x="2004" y="220" width="4" height="6" fill="#ffffff" opacity="0.67"/><rect x="2020" y="286" width="4" height="2" fill="#ffd0ff" opacity="0.71"/><rect x="2017" y="295" width="2" height="4" fill="#f0a0ff" opacity="0.83"/><rect x="2022" y="248" width="2" height="4" fill="#ffffff" opacity="0.96"/><rect x="2005" y="241" width="2" height="2" fill="#8020e0" opacity="0.94"/><rect x="2020" y="253" width="4" height="2" fill="#8020e0" opacity="0.64"/><rect x="2006" y="296" width="4" height="4" fill="#ffffff" opacity="0.81"/><rect x="1998" y="259" width="4" height="2" fill="#8020e0" opacity="0.82"/><rect x="2016" y="247" width="4" height="2" fill="#ffffff" opacity="0.77"/><rect x="2022" y="237" width="4" height="2" fill="#8020e0" opacity="0.62"/><rect x="2011" y="259" width="4" height="2" fill="#8020e0" opacity="0.97"/><rect x="1998" y="272" width="4" height="2" fill="#ffd0ff" opacity="0.98"/><rect x="2017" y="279" width="4" height="4" fill="#ffd0ff" opacity="0.99"/><rect x="2022" y="259" width="4" height="6" fill="#ffffff" opacity="0.99"/><rect x="2016" y="270" width="4" height="4" fill="#8020e0" opacity="0.82"/><rect x="2020" y="233" width="2" height="6" fill="#8020e0" opacity="0.94"/><rect x="1998" y="280" width="4" height="4" fill="#ffd0ff" opacity="0.76"/><rect x="2020" y="240" width="2" height="2" fill="#f0a0ff" opacity="0.93"/><rect x="2011" y="227" width="4" height="6" fill="#ffd0ff" opacity="0.89"/><rect x="2024" y="219" width="4" height="4" fill="#f0a0ff" opacity="0.62"/><rect x="2003" y="236" width="2" height="4" fill="#ffd0ff" opacity="0.97"/><rect x="2014" y="235" width="2" height="2" fill="#f0a0ff" opacity="0.78"/><rect x="2024" y="243" width="4" height="4" fill="#ffd0ff" opacity="0.92"/><rect x="2009" y="229" width="4" height="4" fill="#ffd0ff" opacity="0.81"/><rect x="2015" y="225" width="4" height="2" fill="#f0a0ff" opacity="0.90"/><rect x="2015" y="246" width="2" height="2" fill="#8020e0" opacity="0.87"/><rect x="2008" y="294" width="4" height="6" fill="#ffd0ff" opacity="0.84"/><rect x="2008" y="232" width="4" height="4" fill="#8020e0" opacity="0.64"/><rect x="2013" y="288" width="2" height="4" fill="#ffffff" opacity="0.69"/><rect x="2014" y="275" width="2" height="4" fill="#e070ff" opacity="0.80"/><rect x="2010" y="260" width="2" height="2" fill="#ffd0ff" opacity="0.74"/><rect x="2024" y="222" width="4" height="2" fill="#e070ff" opacity="0.67"/><rect x="2009" y="293" width="4" height="2" fill="#e070ff" opacity="0.63"/><rect x="1997" y="251" width="2" height="6" fill="#ffd0ff" opacity="0.68"/><rect x="2020" y="250" width="2" height="4" fill="#8020e0" opacity="0.68"/><rect x="2022" y="233" width="2" height="2" fill="#ffffff" opacity="0.90"/><rect x="2020" y="222" width="4" height="2" fill="#8020e0" opacity="0.88"/><rect x="2023" y="219" width="4" height="6" fill="#e070ff" opacity="0.90"/><rect x="2006" y="283" width="2" height="6" fill="#8020e0" opacity="0.88"/><rect x="2000" y="220" width="4" height="4" fill="#8020e0" opacity="0.71"/><rect x="2022" y="259" width="2" height="4" fill="#ffffff" opacity="0.96"/><rect x="1997" y="278" width="2" height="4" fill="#f0a0ff" opacity="0.81"/><rect x="2020" y="279" width="4" height="2" fill="#f0a0ff" opacity="0.71"/><rect x="2007" y="286" width="2" height="4" fill="#ffd0ff" opacity="0.65"/><rect x="2005" y="217" width="4" height="6" fill="#8020e0" opacity="0.83"/><rect x="2024" y="278" width="2" height="2" fill="#ffd0ff" opacity="0.90"/><rect x="2002" y="243" width="4" height="4" fill="#f0a0ff" opacity="0.74"/><rect x="2015" y="257" width="4" height="2" fill="#ffffff" opacity="0.81"/><rect x="2017" y="244" width="4" height="2" fill="#e070ff" opacity="0.88"/><rect x="2021" y="241" width="4" height="6" fill="#e070ff" opacity="0.83"/><rect x="2007" y="262" width="2" height="2" fill="#f0a0ff" opacity="0.64"/><rect x="2011" y="255" width="2" height="6" fill="#8020e0" opacity="0.61"/><rect x="1997" y="227" width="2" height="6" fill="#8020e0" opacity="0.77"/><rect x="2003" y="244" width="4" height="6" fill="#e070ff" opacity="0.97"/><rect x="2001" y="238" width="4" height="2" fill="#ffffff" opacity="0.69"/><rect x="2002" y="241" width="4" height="6" fill="#f0a0ff" opacity="0.89"/><rect x="2011" y="275" width="2" height="2" fill="#ffd0ff" opacity="0.89"/><rect x="2014" y="284" width="2" height="4" fill="#ffd0ff" opacity="0.60"/><rect x="2003" y="247" width="2" height="4" fill="#f0a0ff" opacity="0.93"/><rect x="2015" y="285" width="2" height="4" fill="#ffffff" opacity="0.74"/><rect x="2005" y="219" width="4" height="6" fill="#8020e0" opacity="0.80"/><rect x="1996" y="235" width="4" height="4" fill="#ffd0ff" opacity="0.93"/><rect x="2010" y="228" width="4" height="6" fill="#f0a0ff" opacity="0.60"/><rect x="2001" y="260" width="2" height="6" fill="#8020e0" opacity="0.85"/><rect x="2007" y="222" width="2" height="2" fill="#8020e0" opacity="0.95"/><rect x="2021" y="223" width="2" height="2" fill="#e070ff" opacity="0.74"/><rect x="2002" y="285" width="4" height="4" fill="#ffd0ff" opacity="0.70"/><rect x="2012" y="270" width="2" height="4" fill="#e070ff" opacity="0.76"/><rect x="2008" y="259" width="2" height="2" fill="#ffffff" opacity="0.66"/><rect x="2015" y="228" width="2" height="4" fill="#8020e0" opacity="0.98"/><rect x="2002" y="232" width="4" height="2" fill="#e070ff" opacity="0.74"/><rect x="2021" y="269" width="2" height="2" fill="#f0a0ff" opacity="0.84"/><rect x="2011" y="219" width="2" height="6" fill="#8020e0" opacity="0.98"/><rect x="2017" y="225" width="4" height="2" fill="#8020e0" opacity="0.77"/><rect x="2023" y="247" width="4" height="6" fill="#e070ff" opacity="0.82"/><rect x="2024" y="272" width="2" height="6" fill="#8020e0" opacity="0.96"/><rect x="2018" y="290" width="2" height="4" fill="#ffd0ff" opacity="0.69"/><rect x="2012" y="252" width="2" height="4" fill="#e070ff" opacity="0.69"/><rect x="2016" y="256" width="4" height="4" fill="#ffffff" opacity="0.89"/><rect x="2024" y="296" width="4" height="6" fill="#e070ff" opacity="0.88"/><rect x="1997" y="256" width="2" height="6" fill="#e070ff" opacity="0.67"/><rect x="2019" y="241" width="4" height="4" fill="#f0a0ff" opacity="0.63"/><rect x="2001" y="252" width="4" height="4" fill="#8020e0" opacity="0.71"/><rect x="2005" y="266" width="4" height="2" fill="#8020e0" opacity="0.63"/><rect x="2006" y="229" width="4" height="4" fill="#e070ff" opacity="0.80"/><rect x="2018" y="217" width="2" height="2" fill="#ffffff" opacity="0.69"/><rect x="2005" y="227" width="4" height="6" fill="#8020e0" opacity="0.81"/><rect x="1997" y="264" width="2" height="4" fill="#f0a0ff" opacity="0.89"/><rect x="2000" y="296" width="2" height="6" fill="#ffffff" opacity="0.75"/><rect x="2014" y="239" width="4" height="2" fill="#ffffff" opacity="0.81"/><rect x="2003" y="255" width="2" height="4" fill="#8020e0" opacity="0.65"/><rect x="2002" y="280" width="2" height="4" fill="#8020e0" opacity="0.91"/><rect x="2016" y="280" width="2" height="2" fill="#ffffff" opacity="0.80"/><rect x="2002" y="223" width="4" height="4" fill="#ffffff" opacity="0.94"/><rect x="2022" y="227" width="2" height="6" fill="#ffd0ff" opacity="0.83"/><rect x="2020" y="229" width="4" height="4" fill="#e070ff" opacity="0.60"/><rect x="2007" y="274" width="2" height="6" fill="#8020e0" opacity="0.71"/><rect x="1999" y="240" width="2" height="4" fill="#ffd0ff" opacity="0.96"/><rect x="2014" y="266" width="4" height="2" fill="#e070ff" opacity="0.60"/><rect x="2002" y="279" width="4" height="4" fill="#ffffff" opacity="0.93"/><rect x="2022" y="290" width="4" height="2" fill="#ffd0ff" opacity="0.76"/><rect x="2009" y="237" width="2" height="2" fill="#ffd0ff" opacity="0.80"/><rect x="2023" y="287" width="4" height="2" fill="#f0a0ff" opacity="0.73"/><rect x="2005" y="247" width="2" height="2" fill="#ffd0ff" opacity="0.71"/><rect x="2024" y="218" width="4" height="2" fill="#f0a0ff" opacity="0.90"/><rect x="2008" y="290" width="2" height="6" fill="#f0a0ff" opacity="0.69"/><rect x="1997" y="224" width="2" height="4" fill="#8020e0" opacity="0.74"/><rect x="2016" y="220" width="2" height="6" fill="#8020e0" opacity="0.64"/><rect x="2012" y="252" width="4" height="2" fill="#ffffff" opacity="0.88"/><rect x="1999" y="225" width="2" height="2" fill="#ffffff" opacity="0.84"/><rect x="1973" y="237" width="56" height="2.5" fill="#100850"/></svg>
<div style="left:1226.0px;top:1205.5px;width:28.0px;height:340.5px;background:rgba(150,150,120,0.42);border-left:1px solid rgba(160,160,60,0.6);border-right:1px solid rgba(160,160,60,0.6);box-sizing:border-box;"></div>
<svg class="abs" style="left:167px;top:1506px" width="2048" height="80" viewBox="167 1506 2048 80"><rect x="178.4" y="1508" width="2" height="2.4" fill="#ddd"/><rect x="189.0" y="1508" width="2" height="2.4" fill="#ddd"/><rect x="199.7" y="1508" width="2" height="2.4" fill="#ddd"/><rect x="210.3" y="1508" width="2" height="2.4" fill="#ddd"/><rect x="220.8" y="1508" width="2.4" height="10" fill="#fff"/><rect x="231.7" y="1508" width="2" height="2.4" fill="#ddd"/><rect x="242.3" y="1508" width="2" height="2.4" fill="#ddd"/><rect x="253.0" y="1508" width="2" height="2.4" fill="#ddd"/><rect x="263.6" y="1508" width="2" height="2.4" fill="#ddd"/><rect x="274.1" y="1508" width="2.4" height="5" fill="#eee"/><rect x="284.9" y="1508" width="2" height="2.4" fill="#ddd"/><rect x="295.6" y="1508" width="2" height="2.4" fill="#ddd"/><rect x="306.2" y="1508" width="2" height="2.4" fill="#ddd"/><rect x="316.9" y="1508" width="2" height="2.4" fill="#ddd"/><rect x="327.4" y="1508" width="2.4" height="10" fill="#fff"/><rect x="338.2" y="1508" width="2" height="2.4" fill="#ddd"/><rect x="348.9" y="1508" width="2" height="2.4" fill="#ddd"/><rect x="359.5" y="1508" width="2" height="2.4" fill="#ddd"/><rect x="370.2" y="1508" width="2" height="2.4" fill="#ddd"/><rect x="380.6" y="1508" width="2.4" height="5" fill="#eee"/><rect x="391.5" y="1508" width="2" height="2.4" fill="#ddd"/><rect x="402.1" y="1508" width="2" height="2.4" fill="#ddd"/><rect x="412.8" y="1508" width="2" height="2.4" fill="#ddd"/><rect x="423.4" y="1508" width="2" height="2.4" fill="#ddd"/><rect x="433.9" y="1508" width="2.4" height="10" fill="#fff"/><rect x="444.8" y="1508" width="2" height="2.4" fill="#ddd"/><rect x="455.4" y="1508" width="2" height="2.4" fill="#ddd"/><rect x="466.1" y="1508" width="2" height="2.4" fill="#ddd"/><rect x="476.7" y="1508" width="2" height="2.4" fill="#ddd"/><rect x="487.2" y="1508" width="2.4" height="5" fill="#eee"/><rect x="498.0" y="1508" width="2" height="2.4" fill="#ddd"/><rect x="508.7" y="1508" width="2" height="2.4" fill="#ddd"/><rect x="519.3" y="1508" width="2" height="2.4" fill="#ddd"/><rect x="530.0" y="1508" width="2" height="2.4" fill="#ddd"/><rect x="540.4" y="1508" width="2.4" height="10" fill="#fff"/><rect x="551.3" y="1508" width="2" height="2.4" fill="#ddd"/><rect x="562.0" y="1508" width="2" height="2.4" fill="#ddd"/><rect x="572.6" y="1508" width="2" height="2.4" fill="#ddd"/><rect x="583.3" y="1508" width="2" height="2.4" fill="#ddd"/><rect x="593.7" y="1508" width="2.4" height="5" fill="#eee"/><rect x="604.6" y="1508" width="2" height="2.4" fill="#ddd"/><rect x="615.2" y="1508" width="2" height="2.4" fill="#ddd"/><rect x="625.9" y="1508" width="2" height="2.4" fill="#ddd"/><rect x="636.5" y="1508" width="2" height="2.4" fill="#ddd"/><rect x="647.0" y="1508" width="2.4" height="10" fill="#fff"/><rect x="657.9" y="1508" width="2" height="2.4" fill="#ddd"/><rect x="668.5" y="1508" width="2" height="2.4" fill="#ddd"/><rect x="679.2" y="1508" width="2" height="2.4" fill="#ddd"/><rect x="689.8" y="1508" width="2" height="2.4" fill="#ddd"/><rect x="700.3" y="1508" width="2.4" height="5" fill="#eee"/><rect x="711.1" y="1508" width="2" height="2.4" fill="#ddd"/><rect x="721.8" y="1508" width="2" height="2.4" fill="#ddd"/><rect x="732.4" y="1508" width="2" height="2.4" fill="#ddd"/><rect x="743.1" y="1508" width="2" height="2.4" fill="#ddd"/><rect x="753.5" y="1508" width="2.4" height="10" fill="#fff"/><rect x="764.4" y="1508" width="2" height="2.4" fill="#ddd"/><rect x="775.1" y="1508" width="2" height="2.4" fill="#ddd"/><rect x="785.7" y="1508" width="2" height="2.4" fill="#ddd"/><rect x="796.4" y="1508" width="2" height="2.4" fill="#ddd"/><rect x="806.8" y="1508" width="2.4" height="5" fill="#eee"/><rect x="817.7" y="1508" width="2" height="2.4" fill="#ddd"/><rect x="828.3" y="1508" width="2" height="2.4" fill="#ddd"/><rect x="839.0" y="1508" width="2" height="2.4" fill="#ddd"/><rect x="849.6" y="1508" width="2" height="2.4" fill="#ddd"/><rect x="860.1" y="1508" width="2.4" height="10" fill="#fff"/><rect x="871.0" y="1508" width="2" height="2.4" fill="#ddd"/><rect x="881.6" y="1508" width="2" height="2.4" fill="#ddd"/><rect x="892.3" y="1508" width="2" height="2.4" fill="#ddd"/><rect x="902.9" y="1508" width="2" height="2.4" fill="#ddd"/><rect x="913.4" y="1508" width="2.4" height="5" fill="#eee"/><rect x="924.2" y="1508" width="2" height="2.4" fill="#ddd"/><rect x="934.9" y="1508" width="2" height="2.4" fill="#ddd"/><rect x="945.5" y="1508" width="2" height="2.4" fill="#ddd"/><rect x="956.2" y="1508" width="2" height="2.4" fill="#ddd"/><rect x="966.6" y="1508" width="2.4" height="10" fill="#fff"/><rect x="977.5" y="1508" width="2" height="2.4" fill="#ddd"/><rect x="988.2" y="1508" width="2" height="2.4" fill="#ddd"/><rect x="998.8" y="1508" width="2" height="2.4" fill="#ddd"/><rect x="1009.5" y="1508" width="2" height="2.4" fill="#ddd"/><rect x="1019.9" y="1508" width="2.4" height="5" fill="#eee"/><rect x="1030.8" y="1508" width="2" height="2.4" fill="#ddd"/><rect x="1041.4" y="1508" width="2" height="2.4" fill="#ddd"/><rect x="1052.1" y="1508" width="2" height="2.4" fill="#ddd"/><rect x="1062.7" y="1508" width="2" height="2.4" fill="#ddd"/><rect x="1073.2" y="1508" width="2.4" height="10" fill="#fff"/><rect x="1084.1" y="1508" width="2" height="2.4" fill="#ddd"/><rect x="1094.7" y="1508" width="2" height="2.4" fill="#ddd"/><rect x="1105.4" y="1508" width="2" height="2.4" fill="#ddd"/><rect x="1116.0" y="1508" width="2" height="2.4" fill="#ddd"/><rect x="1126.5" y="1508" width="2.4" height="5" fill="#eee"/><rect x="1137.3" y="1508" width="2" height="2.4" fill="#ddd"/><rect x="1148.0" y="1508" width="2" height="2.4" fill="#ddd"/><rect x="1158.6" y="1508" width="2" height="2.4" fill="#ddd"/><rect x="1169.3" y="1508" width="2" height="2.4" fill="#ddd"/><rect x="1179.7" y="1508" width="2.4" height="10" fill="#fff"/><rect x="1190.6" y="1508" width="2" height="2.4" fill="#ddd"/><rect x="1201.3" y="1508" width="2" height="2.4" fill="#ddd"/><rect x="1211.9" y="1508" width="2" height="2.4" fill="#ddd"/><rect x="1222.6" y="1508" width="2" height="2.4" fill="#ddd"/><rect x="1233.0" y="1508" width="2.4" height="5" fill="#eee"/><rect x="1243.9" y="1508" width="2" height="2.4" fill="#ddd"/><rect x="1254.5" y="1508" width="2" height="2.4" fill="#ddd"/><rect x="1265.2" y="1508" width="2" height="2.4" fill="#ddd"/><rect x="1275.8" y="1508" width="2" height="2.4" fill="#ddd"/><rect x="1286.3" y="1508" width="2.4" height="10" fill="#fff"/><rect x="1297.2" y="1508" width="2" height="2.4" fill="#ddd"/><rect x="1307.8" y="1508" width="2" height="2.4" fill="#ddd"/><rect x="1318.5" y="1508" width="2" height="2.4" fill="#ddd"/><rect x="1329.1" y="1508" width="2" height="2.4" fill="#ddd"/><rect x="1339.6" y="1508" width="2.4" height="5" fill="#eee"/><rect x="1350.4" y="1508" width="2" height="2.4" fill="#ddd"/><rect x="1361.1" y="1508" width="2" height="2.4" fill="#ddd"/><rect x="1371.7" y="1508" width="2" height="2.4" fill="#ddd"/><rect x="1382.4" y="1508" width="2" height="2.4" fill="#ddd"/><rect x="1392.8" y="1508" width="2.4" height="10" fill="#fff"/><rect x="1403.7" y="1508" width="2" height="2.4" fill="#ddd"/><rect x="1414.4" y="1508" width="2" height="2.4" fill="#ddd"/><rect x="1425.0" y="1508" width="2" height="2.4" fill="#ddd"/><rect x="1435.7" y="1508" width="2" height="2.4" fill="#ddd"/><rect x="1446.1" y="1508" width="2.4" height="5" fill="#eee"/><rect x="1457.0" y="1508" width="2" height="2.4" fill="#ddd"/><rect x="1467.6" y="1508" width="2" height="2.4" fill="#ddd"/><rect x="1478.3" y="1508" width="2" height="2.4" fill="#ddd"/><rect x="1488.9" y="1508" width="2" height="2.4" fill="#ddd"/><rect x="1499.4" y="1508" width="2.4" height="10" fill="#fff"/><rect x="1510.3" y="1508" width="2" height="2.4" fill="#ddd"/><rect x="1520.9" y="1508" width="2" height="2.4" fill="#ddd"/><rect x="1531.6" y="1508" width="2" height="2.4" fill="#ddd"/><rect x="1542.2" y="1508" width="2" height="2.4" fill="#ddd"/><rect x="1552.7" y="1508" width="2.4" height="5" fill="#eee"/><rect x="1563.5" y="1508" width="2" height="2.4" fill="#ddd"/><rect x="1574.2" y="1508" width="2" height="2.4" fill="#ddd"/><rect x="1584.8" y="1508" width="2" height="2.4" fill="#ddd"/><rect x="1595.5" y="1508" width="2" height="2.4" fill="#ddd"/><rect x="1605.9" y="1508" width="2.4" height="10" fill="#fff"/><rect x="1616.8" y="1508" width="2" height="2.4" fill="#ddd"/><rect x="1627.5" y="1508" width="2" height="2.4" fill="#ddd"/><rect x="1638.1" y="1508" width="2" height="2.4" fill="#ddd"/><rect x="1648.8" y="1508" width="2" height="2.4" fill="#ddd"/><rect x="1659.2" y="1508" width="2.4" height="5" fill="#eee"/><rect x="1670.1" y="1508" width="2" height="2.4" fill="#ddd"/><rect x="1680.7" y="1508" width="2" height="2.4" fill="#ddd"/><rect x="1691.4" y="1508" width="2" height="2.4" fill="#ddd"/><rect x="1702.0" y="1508" width="2" height="2.4" fill="#ddd"/><rect x="1712.5" y="1508" width="2.4" height="10" fill="#fff"/><rect x="1723.4" y="1508" width="2" height="2.4" fill="#ddd"/><rect x="1734.0" y="1508" width="2" height="2.4" fill="#ddd"/><rect x="1744.7" y="1508" width="2" height="2.4" fill="#ddd"/><rect x="1755.3" y="1508" width="2" height="2.4" fill="#ddd"/><rect x="1765.8" y="1508" width="2.4" height="5" fill="#eee"/><rect x="1776.6" y="1508" width="2" height="2.4" fill="#ddd"/><rect x="1787.3" y="1508" width="2" height="2.4" fill="#ddd"/><rect x="1797.9" y="1508" width="2" height="2.4" fill="#ddd"/><rect x="1808.6" y="1508" width="2" height="2.4" fill="#ddd"/><rect x="1819.0" y="1508" width="2.4" height="10" fill="#fff"/><rect x="1829.9" y="1508" width="2" height="2.4" fill="#ddd"/><rect x="1840.6" y="1508" width="2" height="2.4" fill="#ddd"/><rect x="1851.2" y="1508" width="2" height="2.4" fill="#ddd"/><rect x="1861.9" y="1508" width="2" height="2.4" fill="#ddd"/><rect x="1872.3" y="1508" width="2.4" height="5" fill="#eee"/><rect x="1883.2" y="1508" width="2" height="2.4" fill="#ddd"/><rect x="1893.8" y="1508" width="2" height="2.4" fill="#ddd"/><rect x="1904.5" y="1508" width="2" height="2.4" fill="#ddd"/><rect x="1915.1" y="1508" width="2" height="2.4" fill="#ddd"/><rect x="1925.6" y="1508" width="2.4" height="10" fill="#fff"/><rect x="1936.5" y="1508" width="2" height="2.4" fill="#ddd"/><rect x="1947.1" y="1508" width="2" height="2.4" fill="#ddd"/><rect x="1957.8" y="1508" width="2" height="2.4" fill="#ddd"/><rect x="1968.4" y="1508" width="2" height="2.4" fill="#ddd"/><rect x="1978.9" y="1508" width="2.4" height="5" fill="#eee"/><rect x="1989.7" y="1508" width="2" height="2.4" fill="#ddd"/><rect x="2000.4" y="1508" width="2" height="2.4" fill="#ddd"/><rect x="2011.0" y="1508" width="2" height="2.4" fill="#ddd"/><rect x="2021.7" y="1508" width="2" height="2.4" fill="#ddd"/><rect x="2032.1" y="1508" width="2.4" height="10" fill="#fff"/><rect x="2043.0" y="1508" width="2" height="2.4" fill="#ddd"/><rect x="2053.7" y="1508" width="2" height="2.4" fill="#ddd"/><rect x="2064.3" y="1508" width="2" height="2.4" fill="#ddd"/><rect x="2075.0" y="1508" width="2" height="2.4" fill="#ddd"/><rect x="2085.4" y="1508" width="2.4" height="5" fill="#eee"/><rect x="2096.3" y="1508" width="2" height="2.4" fill="#ddd"/><rect x="2106.9" y="1508" width="2" height="2.4" fill="#ddd"/><rect x="2117.6" y="1508" width="2" height="2.4" fill="#ddd"/><rect x="2128.2" y="1508" width="2" height="2.4" fill="#ddd"/><rect x="2138.7" y="1508" width="2.4" height="10" fill="#fff"/><rect x="2149.6" y="1508" width="2" height="2.4" fill="#ddd"/><rect x="2160.2" y="1508" width="2" height="2.4" fill="#ddd"/><rect x="2170.9" y="1508" width="2" height="2.4" fill="#ddd"/><rect x="2181.5" y="1508" width="2" height="2.4" fill="#ddd"/><rect x="2192.0" y="1508" width="2.4" height="5" fill="#eee"/><rect x="2202.8" y="1508" width="2" height="2.4" fill="#ddd"/><text x="222.0" y="1534.5" font-family="'Liberation Sans',sans-serif" font-size="19.5" fill="#fff" text-anchor="middle" textLength="46" lengthAdjust="spacingAndGlyphs">7010</text><text x="328.6" y="1534.5" font-family="'Liberation Sans',sans-serif" font-size="19.5" fill="#fff" text-anchor="middle" textLength="46" lengthAdjust="spacingAndGlyphs">7020</text><text x="435.1" y="1534.5" font-family="'Liberation Sans',sans-serif" font-size="19.5" fill="#fff" text-anchor="middle" textLength="46" lengthAdjust="spacingAndGlyphs">7030</text><text x="541.6" y="1534.5" font-family="'Liberation Sans',sans-serif" font-size="19.5" fill="#fff" text-anchor="middle" textLength="46" lengthAdjust="spacingAndGlyphs">7040</text><text x="648.2" y="1534.5" font-family="'Liberation Sans',sans-serif" font-size="19.5" fill="#fff" text-anchor="middle" textLength="46" lengthAdjust="spacingAndGlyphs">7050</text><text x="754.8" y="1534.5" font-family="'Liberation Sans',sans-serif" font-size="19.5" fill="#fff" text-anchor="middle" textLength="46" lengthAdjust="spacingAndGlyphs">7060</text><text x="861.3" y="1534.5" font-family="'Liberation Sans',sans-serif" font-size="19.5" fill="#fff" text-anchor="middle" textLength="46" lengthAdjust="spacingAndGlyphs">7070</text><text x="967.8" y="1534.5" font-family="'Liberation Sans',sans-serif" font-size="19.5" fill="#fff" text-anchor="middle" textLength="46" lengthAdjust="spacingAndGlyphs">7080</text><text x="1074.4" y="1534.5" font-family="'Liberation Sans',sans-serif" font-size="19.5" fill="#fff" text-anchor="middle" textLength="46" lengthAdjust="spacingAndGlyphs">7090</text><text x="1180.9" y="1534.5" font-family="'Liberation Sans',sans-serif" font-size="19.5" fill="#fff" text-anchor="middle" textLength="46" lengthAdjust="spacingAndGlyphs">7100</text><text x="1287.5" y="1534.5" font-family="'Liberation Sans',sans-serif" font-size="19.5" fill="#fff" text-anchor="middle" textLength="46" lengthAdjust="spacingAndGlyphs">7110</text><text x="1394.0" y="1534.5" font-family="'Liberation Sans',sans-serif" font-size="19.5" fill="#fff" text-anchor="middle" textLength="46" lengthAdjust="spacingAndGlyphs">7120</text><text x="1500.6" y="1534.5" font-family="'Liberation Sans',sans-serif" font-size="19.5" fill="#fff" text-anchor="middle" textLength="46" lengthAdjust="spacingAndGlyphs">7130</text><text x="1607.1" y="1534.5" font-family="'Liberation Sans',sans-serif" font-size="19.5" fill="#fff" text-anchor="middle" textLength="46" lengthAdjust="spacingAndGlyphs">7140</text><text x="1713.7" y="1534.5" font-family="'Liberation Sans',sans-serif" font-size="19.5" fill="#fff" text-anchor="middle" textLength="46" lengthAdjust="spacingAndGlyphs">7150</text><text x="1820.2" y="1534.5" font-family="'Liberation Sans',sans-serif" font-size="19.5" fill="#fff" text-anchor="middle" textLength="46" lengthAdjust="spacingAndGlyphs">7160</text><text x="1926.8" y="1534.5" font-family="'Liberation Sans',sans-serif" font-size="19.5" fill="#fff" text-anchor="middle" textLength="46" lengthAdjust="spacingAndGlyphs">7170</text><text x="2033.3" y="1534.5" font-family="'Liberation Sans',sans-serif" font-size="19.5" fill="#fff" text-anchor="middle" textLength="46" lengthAdjust="spacingAndGlyphs">7180</text><text x="2139.9" y="1534.5" font-family="'Liberation Sans',sans-serif" font-size="19.5" fill="#fff" text-anchor="middle" textLength="46" lengthAdjust="spacingAndGlyphs">7190</text><path d="M1204 1568.3 H1211.5 L1225.5 1541 H1254 L1268 1568.3 H1276" fill="none" stroke="#f4f400" stroke-width="2.6" stroke-linejoin="round"/><path d="M1257 1508 V1518.5 M1257 1537 V1572" stroke="#f4f400" stroke-width="2.4"/></svg>
<div style="left:2334.0px;top:1202.0px;width:34.5px;height:776.5px;background:#f1f1f1;"></div>
<div style="left:2336.0px;top:1355.0px;width:29.5px;height:134.5px;background:#c1c1c1;"></div>
<div style="left:54.0px;top:1978.5px;width:2280.0px;height:33.5px;background:#f1f1f1;"></div>
<div style="left:146.0px;top:1980.5px;width:2101.0px;height:29.5px;background:#c1c1c1;"></div>
<div style="left:2334.0px;top:1978.5px;width:34.3px;height:33.5px;background:#dcdcdc;"></div>
<svg class="abs" style="left:2334px;top:1202px" width="35" height="777" viewBox="0 0 35 777"><path d="M9.5 22 L17 14 L24.5 22 Z M9.5 754 L17 762 L24.5 754 Z" fill="#505050"/></svg>
<svg class="abs" style="left:54px;top:1978px" width="2280" height="35" viewBox="0 0 2280 35"><path d="M21 8.8 L13 17 L21 25.2 Z M2259 8.8 L2267 17 L2259 25.2 Z" fill="#4d4d4d"/></svg>
<div style="left:54px;top:1624px;width:2280px;height:354.5px;overflow:hidden;background:#f0f0f0;"><div style="left:591.5px;top:11.0px;width:3.0px;height:350.0px;background:#8a8a8a;"></div><div style="left:1597.5px;top:11.0px;width:3.0px;height:350.0px;background:#8a8a8a;"></div><div class="t" style="left:253.5px;top:34.0px;height:36px;font:700 28px/36px 'Liberation Sans',sans-serif;color:#111;transform:scaleX(0.771);transform-origin:0 50%;">Band</div><div style="left:57.7px;top:122.0px;width:92.8px;height:38.0px;background:#f0f0f0;border:3px solid;border-color:rgba(255,255,255,0.35) #9a9a9a #9a9a9a rgba(255,255,255,0.35);box-shadow:4px 5px 8px rgba(0,0,0,0.16),-3px -3px 6px rgba(255,255,255,0.9);border-radius:22px;"></div><div class="t" style="left:76.6px;top:127.8px;height:35px;font:400 27px/35px 'Liberation Sans',sans-serif;color:#111;transform:scaleX(0.861);transform-origin:0 50%;-webkit-text-stroke:0.45px #111;">10mH</div><div style="left:174.0px;top:122.0px;width:92.8px;height:38.0px;background:#f0f0f0;border:3px solid;border-color:rgba(255,255,255,0.35) #9a9a9a #9a9a9a rgba(255,255,255,0.35);box-shadow:4px 5px 8px rgba(0,0,0,0.16),-3px -3px 6px rgba(255,255,255,0.9);border-radius:22px;"></div><div class="t" style="left:194.9px;top:127.8px;height:35px;font:400 27px/35px 'Liberation Sans',sans-serif;color:#111;transform:scaleX(0.859);transform-origin:0 50%;-webkit-text-stroke:0.45px #111;">10mL</div><div style="left:288.5px;top:122.0px;width:92.8px;height:38.0px;background:#f0f0f0;border:3px solid;border-color:rgba(255,255,255,0.35) #9a9a9a #9a9a9a rgba(255,255,255,0.35);box-shadow:4px 5px 8px rgba(0,0,0,0.16),-3px -3px 6px rgba(255,255,255,0.9);border-radius:22px;"></div><div class="t" style="left:316.4px;top:127.8px;height:35px;font:400 27px/35px 'Liberation Sans',sans-serif;color:#111;transform:scaleX(0.838);transform-origin:0 50%;-webkit-text-stroke:0.45px #111;">15m</div><div style="left:404.0px;top:122.0px;width:92.8px;height:38.0px;background:#f0f0f0;border:3px solid;border-color:rgba(255,255,255,0.35) #9a9a9a #9a9a9a rgba(255,255,255,0.35);box-shadow:4px 5px 8px rgba(0,0,0,0.16),-3px -3px 6px rgba(255,255,255,0.9);border-radius:22px;"></div><div class="t" style="left:431.9px;top:127.8px;height:35px;font:400 27px/35px 'Liberation Sans',sans-serif;color:#111;transform:scaleX(0.838);transform-origin:0 50%;-webkit-text-stroke:0.45px #111;">17m</div><div style="left:57.5px;top:174.5px;width:92.8px;height:37.8px;background:#f0f0f0;border:3px solid;border-color:rgba(255,255,255,0.35) #9a9a9a #9a9a9a rgba(255,255,255,0.35);box-shadow:4px 5px 8px rgba(0,0,0,0.16),-3px -3px 6px rgba(255,255,255,0.9);border-radius:22px;"></div><div class="t" style="left:84.9px;top:180.2px;height:35px;font:400 27px/35px 'Liberation Sans',sans-serif;color:#111;transform:scaleX(0.857);transform-origin:0 50%;-webkit-text-stroke:0.45px #111;">20m</div><div style="left:174.0px;top:174.5px;width:92.8px;height:37.8px;background:radial-gradient(ellipse at 50% 55%,#aeeee6 0%,#c4f3ee 55%,#e6faf8 100%);border:3px solid;border-color:#8e8e8e rgba(150,150,150,0.15) rgba(150,150,150,0.1) #8e8e8e;box-shadow:2px 2px 5px rgba(0,0,0,0.06);border-radius:22px;"></div><div class="t" style="left:201.4px;top:180.2px;height:35px;font:400 27px/35px 'Liberation Sans',sans-serif;color:#111;transform:scaleX(0.857);transform-origin:0 50%;-webkit-text-stroke:0.45px #111;">40m</div><div style="left:288.5px;top:174.5px;width:92.8px;height:37.8px;background:#f0f0f0;border:3px solid;border-color:rgba(255,255,255,0.35) #9a9a9a #9a9a9a rgba(255,255,255,0.35);box-shadow:4px 5px 8px rgba(0,0,0,0.16),-3px -3px 6px rgba(255,255,255,0.9);border-radius:22px;"></div><div class="t" style="left:315.9px;top:180.2px;height:35px;font:400 27px/35px 'Liberation Sans',sans-serif;color:#111;transform:scaleX(0.857);transform-origin:0 50%;-webkit-text-stroke:0.45px #111;">80m</div><div style="left:404.0px;top:174.5px;width:92.8px;height:37.8px;background:#f0f0f0;border:3px solid;border-color:rgba(255,255,255,0.35) #9a9a9a #9a9a9a rgba(255,255,255,0.35);box-shadow:4px 5px 8px rgba(0,0,0,0.16),-3px -3px 6px rgba(255,255,255,0.9);border-radius:22px;"></div><div class="t" style="left:424.9px;top:180.2px;height:35px;font:400 27px/35px 'Liberation Sans',sans-serif;color:#111;transform:scaleX(0.859);transform-origin:0 50%;-webkit-text-stroke:0.45px #111;">160m</div><div style="left:231.0px;top:226.2px;width:92.8px;height:37.8px;background:#f0f0f0;border:3px solid;border-color:rgba(255,255,255,0.35) #9a9a9a #9a9a9a rgba(255,255,255,0.35);box-shadow:4px 5px 8px rgba(0,0,0,0.16),-3px -3px 6px rgba(255,255,255,0.9);border-radius:22px;"></div><div class="t" style="left:264.9px;top:231.9px;height:35px;font:400 27px/35px 'Liberation Sans',sans-serif;color:#111;transform:scaleX(0.853);transform-origin:0 50%;-webkit-text-stroke:0.45px #111;">2M</div><div class="t" style="left:52.5px;top:294.0px;height:36px;font:700 28px/36px 'Liberation Sans',sans-serif;color:#111;transform:scaleX(0.793);transform-origin:0 50%;">Filters:</div><div class="t" style="left:138.5px;top:294.0px;height:36px;font:700 28px/36px 'Liberation Sans',sans-serif;color:#111;transform:scaleX(0.862);transform-origin:0 50%;">2.70</div><div class="t" style="left:192.5px;top:294.0px;height:36px;font:400 28px/36px 'Liberation Sans',sans-serif;color:#111;transform:scaleX(0.779);transform-origin:0 50%;-webkit-text-stroke:0.45px #111;">kHz @ -6dB;</div><div class="t" style="left:321.5px;top:294.0px;height:36px;font:700 28px/36px 'Liberation Sans',sans-serif;color:#111;transform:scaleX(0.862);transform-origin:0 50%;">3.16</div><div class="t" style="left:375.5px;top:294.0px;height:36px;font:400 28px/36px 'Liberation Sans',sans-serif;color:#111;transform:scaleX(0.809);transform-origin:0 50%;-webkit-text-stroke:0.45px #111;">kHz @ -60dB</div><div style="left:43.0px;top:346.0px;width:140.0px;height:36.0px;background:#f0f0f0;border:3px solid;border-color:rgba(255,255,255,0.35) #9a9a9a #9a9a9a rgba(255,255,255,0.35);box-shadow:4px 5px 8px rgba(0,0,0,0.16),-3px -3px 6px rgba(255,255,255,0.9);border-radius:21px;"></div><div class="t" style="left:116.5px;top:350.8px;height:35px;font:400 27px/35px 'Liberation Sans',sans-serif;color:#111;transform:scaleX(0.800);transform-origin:0 50%;-webkit-text-stroke:0.45px #111;"></div><div style="left:208.0px;top:346.0px;width:140.0px;height:36.0px;background:#f0f0f0;border:3px solid;border-color:rgba(255,255,255,0.35) #9a9a9a #9a9a9a rgba(255,255,255,0.35);box-shadow:4px 5px 8px rgba(0,0,0,0.16),-3px -3px 6px rgba(255,255,255,0.9);border-radius:21px;"></div><div class="t" style="left:281.5px;top:350.8px;height:35px;font:400 27px/35px 'Liberation Sans',sans-serif;color:#111;transform:scaleX(0.800);transform-origin:0 50%;-webkit-text-stroke:0.45px #111;"></div><div style="left:374.0px;top:346.0px;width:140.0px;height:36.0px;background:#f0f0f0;border:3px solid;border-color:rgba(255,255,255,0.35) #9a9a9a #9a9a9a rgba(255,255,255,0.35);box-shadow:4px 5px 8px rgba(0,0,0,0.16),-3px -3px 6px rgba(255,255,255,0.9);border-radius:21px;"></div><div class="t" style="left:447.5px;top:350.8px;height:35px;font:400 27px/35px 'Liberation Sans',sans-serif;color:#111;transform:scaleX(0.800);transform-origin:0 50%;-webkit-text-stroke:0.45px #111;"></div><div style="left:603.5px;top:18.5px;width:977.0px;height:159.0px;background:#000;border:6px solid #a29c84;border-radius:20px;"></div><div class="t" style="left:679px;top:49px;height:72px;font:italic 400 68px/72px 'Liberation Sans',sans-serif;color:#8ffcf0;transform:scaleX(0.9);transform-origin:0 50%;letter-spacing:-1px;">7107.00</div><div class="t" style="left:653.0px;top:131.0px;height:31px;font:400 24px/31px 'Liberation Sans',sans-serif;color:#22e03a;transform:scaleX(0.749);transform-origin:0 50%;-webkit-text-stroke:0.45px #22e03a;">LSB</div><div class="t" style="left:714.0px;top:131.0px;height:31px;font:400 24px/31px 'Liberation Sans',sans-serif;color:#b8f4ee;transform:scaleX(0.750);transform-origin:0 50%;-webkit-text-stroke:0.45px #b8f4ee;">BW</div><div class="t" style="left:753.5px;top:131.0px;height:31px;font:400 24px/31px 'Liberation Sans',sans-serif;color:#b8f4ee;transform:scaleX(0.786);transform-origin:0 50%;-webkit-text-stroke:0.45px #b8f4ee;">-2.76 ... -0.15 kHz</div><div style="left:911.0px;top:30.0px;width:148.0px;height:148.0px;border-radius:50%;background:radial-gradient(circle closest-side,rgba(0,240,0,0.9) 0%,rgba(0,240,0,0.9) 78%,rgba(0,220,0,0.45) 85%,rgba(0,180,0,0.15) 93%,rgba(0,120,0,0) 100%);"></div><svg class="abs" style="left:925px;top:44px" width="120" height="120" viewBox="-60 -60 120 120"><defs><radialGradient id="eg" cx="0" cy="0" r="55" gradientUnits="userSpaceOnUse"><stop offset="0.4" stop-color="#067a06"/><stop offset="0.75" stop-color="#0fd20f"/><stop offset="1" stop-color="#12e212"/></radialGradient></defs><circle r="59" fill="#262626"/><circle r="55.3" fill="#027602"/><path d="M-55.3 -3 A55.3 55.3 0 0 1 55.3 -3 Q 0 5 -55.3 -3 Z" fill="url(#eg)"/><circle r="23.5" fill="#2b2b2b"/></svg><div class="t" style="left:1065.5px;top:42.5px;height:30px;font:400 23px/30px 'Liberation Sans',sans-serif;color:#ffd54a;transform:scaleX(0.700);transform-origin:0 50%;-webkit-text-stroke:0.45px #ffd54a;">SNR</div><div class="t" style="left:1112.0px;top:42.5px;height:30px;font:400 23px/30px 'Liberation Sans',sans-serif;color:#ffd54a;transform:scaleX(0.815);transform-origin:0 50%;-webkit-text-stroke:0.45px #ffd54a;">21 dB</div><div class="t" style="left:1179.0px;top:42.5px;height:30px;font:400 23px/30px 'Liberation Sans',sans-serif;color:#333;transform:scaleX(0.783);transform-origin:0 50%;-webkit-text-stroke:0.45px #333;">MUTED</div><div class="t" style="left:1259.0px;top:42.5px;height:30px;font:400 23px/30px 'Liberation Sans',sans-serif;color:#333;transform:scaleX(0.760);transform-origin:0 50%;-webkit-text-stroke:0.45px #333;">SQL</div><div class="t" style="left:1311.0px;top:42.5px;height:30px;font:400 23px/30px 'Liberation Sans',sans-serif;color:#333;transform:scaleX(0.799);transform-origin:0 50%;-webkit-text-stroke:0.45px #333;">ANF1</div><div class="t" style="left:1373.5px;top:42.5px;height:30px;font:400 23px/30px 'Liberation Sans',sans-serif;color:#333;transform:scaleX(0.816);transform-origin:0 50%;-webkit-text-stroke:0.45px #333;">ANF2</div><div class="t" style="left:1437.5px;top:42.5px;height:30px;font:400 23px/30px 'Liberation Sans',sans-serif;color:#333;transform:scaleX(0.783);transform-origin:0 50%;-webkit-text-stroke:0.45px #333;">NR</div><div class="t" style="left:1479.5px;top:42.5px;height:30px;font:400 23px/30px 'Liberation Sans',sans-serif;color:#333;transform:scaleX(0.753);transform-origin:0 50%;-webkit-text-stroke:0.45px #333;">AGC OFF</div><div style="left:1063.0px;top:89.0px;width:460.0px;height:13.0px;"><div style="left:0.0px;top:0;width:9px;height:11.8px;background:#9ff5ea;"></div><div style="left:12.1px;top:0;width:9px;height:11.8px;background:#9ff5ea;"></div><div style="left:24.1px;top:0;width:9px;height:11.8px;background:#9ff5ea;"></div><div style="left:36.2px;top:0;width:9px;height:11.8px;background:#9ff5ea;"></div><div style="left:48.2px;top:0;width:9px;height:11.8px;background:#9ff5ea;"></div><div style="left:60.2px;top:0;width:9px;height:11.8px;background:#9ff5ea;"></div><div style="left:72.3px;top:0;width:9px;height:11.8px;background:#9ff5ea;"></div><div style="left:84.4px;top:0;width:9px;height:11.8px;background:#9ff5ea;"></div><div style="left:96.4px;top:0;width:9px;height:11.8px;background:#9ff5ea;"></div><div style="left:108.5px;top:0;width:9px;height:11.8px;background:#9ff5ea;"></div><div style="left:120.5px;top:0;width:9px;height:11.8px;background:#9ff5ea;"></div><div style="left:132.6px;top:0;width:9px;height:11.8px;background:#9ff5ea;"></div><div style="left:144.6px;top:0;width:9px;height:11.8px;background:#9ff5ea;"></div><div style="left:156.7px;top:0;width:9px;height:11.8px;background:#9ff5ea;"></div><div style="left:168.7px;top:0;width:9px;height:11.8px;background:#1e1e1e;"></div><div style="left:180.8px;top:0;width:9px;height:11.8px;background:#1e1e1e;"></div><div style="left:192.8px;top:0;width:9px;height:11.8px;background:#1e1e1e;"></div><div style="left:204.9px;top:0;width:9px;height:11.8px;background:#1e1e1e;"></div><div style="left:216.9px;top:0;width:9px;height:11.8px;background:#1e1e1e;"></div><div style="left:229.0px;top:0;width:9px;height:11.8px;background:#1e1e1e;"></div><div style="left:241.0px;top:0;width:9px;height:11.8px;background:#1e1e1e;"></div><div style="left:253.1px;top:0;width:9px;height:11.8px;background:#1e1e1e;"></div><div style="left:265.1px;top:0;width:9px;height:11.8px;background:#1e1e1e;"></div><div style="left:277.2px;top:0;width:9px;height:11.8px;background:#1e1e1e;"></div><div style="left:289.2px;top:0;width:9px;height:11.8px;background:#1e1e1e;"></div><div style="left:301.2px;top:0;width:9px;height:11.8px;background:#1e1e1e;"></div><div style="left:313.3px;top:0;width:9px;height:11.8px;background:#1e1e1e;"></div><div style="left:325.4px;top:0;width:9px;height:11.8px;background:#1e1e1e;"></div><div style="left:337.4px;top:0;width:9px;height:11.8px;background:#1e1e1e;"></div><div style="left:349.5px;top:0;width:9px;height:11.8px;background:#1e1e1e;"></div><div style="left:361.5px;top:0;width:9px;height:11.8px;background:#1e1e1e;"></div><div style="left:373.6px;top:0;width:9px;height:11.8px;background:#1e1e1e;"></div><div style="left:385.6px;top:0;width:9px;height:11.8px;background:#1e1e1e;"></div><div style="left:397.7px;top:0;width:9px;height:11.8px;background:#1e1e1e;"></div><div style="left:409.7px;top:0;width:9px;height:11.8px;background:#1e1e1e;"></div><div style="left:421.8px;top:0;width:9px;height:11.8px;background:#1e1e1e;"></div><div style="left:433.8px;top:0;width:9px;height:11.8px;background:#1e1e1e;"></div><div style="left:445.9px;top:0;width:9px;height:11.8px;background:#1e1e1e;"></div></div><div style="left:1227.0px;top:89.0px;width:4.0px;height:22.0px;background:#f01010;"></div><div style="left:1145.0px;top:103.0px;width:4.0px;height:8.0px;background:#9ff5ea;"></div><svg class="abs" style="left:1056px;top:111px" width="520" height="50" viewBox="1110 1735 520 50"><path d="M1117 1742 H1343" stroke="#a8d4f0" stroke-width="2.4"/><path d="M1343 1742 H1617" stroke="#e81818" stroke-width="2.4"/><path d="M1117.0 1742 V1751" stroke="#a8d4f0" stroke-width="2"/><path d="M1142.1 1742 V1751" stroke="#a8d4f0" stroke-width="2"/><path d="M1167.2 1742 V1748.5" stroke="#a8d4f0" stroke-width="2"/><path d="M1192.3 1742 V1751" stroke="#a8d4f0" stroke-width="2"/><path d="M1217.4 1742 V1748.5" stroke="#a8d4f0" stroke-width="2"/><path d="M1242.5 1742 V1751" stroke="#a8d4f0" stroke-width="2"/><path d="M1267.6 1742 V1748.5" stroke="#a8d4f0" stroke-width="2"/><path d="M1292.7 1742 V1751" stroke="#a8d4f0" stroke-width="2"/><path d="M1317.8 1742 V1748.5" stroke="#a8d4f0" stroke-width="2"/><path d="M1342.9 1742 V1751" stroke="#a8d4f0" stroke-width="2"/><path d="M1388 1742 V1748.5" stroke="#e81818" stroke-width="2"/><path d="M1427.8 1742 V1751" stroke="#e81818" stroke-width="2"/><path d="M1466.3 1742 V1748.5" stroke="#e81818" stroke-width="2"/><path d="M1503.5 1742 V1751" stroke="#e81818" stroke-width="2"/><path d="M1540.7 1742 V1748.5" stroke="#e81818" stroke-width="2"/><path d="M1577.8 1742 V1751" stroke="#e81818" stroke-width="2"/><path d="M1616.3 1742 V1751" stroke="#e81818" stroke-width="2"/><text x="1141" y="1775.5" font-family="'Liberation Sans',sans-serif" font-weight="700" font-size="21" fill="#9cc8e8" text-anchor="middle">S1</text><text x="1191" y="1775.5" font-family="'Liberation Sans',sans-serif" font-weight="700" font-size="21" fill="#9cc8e8" text-anchor="middle">3</text><text x="1241.5" y="1775.5" font-family="'Liberation Sans',sans-serif" font-weight="700" font-size="21" fill="#9cc8e8" text-anchor="middle">5</text><text x="1291" y="1775.5" font-family="'Liberation Sans',sans-serif" font-weight="700" font-size="21" fill="#9cc8e8" text-anchor="middle">7</text><text x="1341.5" y="1775.5" font-family="'Liberation Sans',sans-serif" font-weight="700" font-size="21" fill="#9cc8e8" text-anchor="middle">9</text><text x="1423" y="1775.5" font-family="'Liberation Sans',sans-serif" font-weight="700" font-size="21" fill="#e81818" text-anchor="middle">+20</text><text x="1498.5" y="1775.5" font-family="'Liberation Sans',sans-serif" font-weight="700" font-size="21" fill="#e81818" text-anchor="middle">+40</text><text x="1591.5" y="1775.5" font-family="'Liberation Sans',sans-serif" font-weight="700" font-size="21" fill="#e81818" text-anchor="middle">+60 dB</text></svg><div class="t" style="left:956.5px;top:200.5px;height:36px;font:700 28px/36px 'Liberation Sans',sans-serif;color:#111;transform:scaleX(0.810);transform-origin:0 50%;">Frequency Tuning &amp; Mode</div><div style="left:682.5px;top:246.0px;width:92.5px;height:38.0px;background:#f0f0f0;border:3px solid;border-color:rgba(255,255,255,0.35) #9a9a9a #9a9a9a rgba(255,255,255,0.35);box-shadow:4px 5px 8px rgba(0,0,0,0.16),-3px -3px 6px rgba(255,255,255,0.9);border-radius:22px;"></div><div class="t" style="left:716.2px;top:254.8px;height:29px;font:400 22px/29px 'Liberation Sans',sans-serif;color:#111;transform:scaleX(0.830);transform-origin:0 50%;-webkit-text-stroke:0.45px #111;">&lt;&lt;&lt;</div><div style="left:798.5px;top:246.0px;width:92.5px;height:38.0px;background:#f0f0f0;border:3px solid;border-color:rgba(255,255,255,0.35) #9a9a9a #9a9a9a rgba(255,255,255,0.35);box-shadow:4px 5px 8px rgba(0,0,0,0.16),-3px -3px 6px rgba(255,255,255,0.9);border-radius:22px;"></div><div class="t" style="left:837.8px;top:254.8px;height:29px;font:400 22px/29px 'Liberation Sans',sans-serif;color:#111;transform:scaleX(0.817);transform-origin:0 50%;-webkit-text-stroke:0.45px #111;">&lt;&lt;</div><div style="left:913.5px;top:246.0px;width:92.5px;height:38.0px;background:#f0f0f0;border:3px solid;border-color:rgba(255,255,255,0.35) #9a9a9a #9a9a9a rgba(255,255,255,0.35);box-shadow:4px 5px 8px rgba(0,0,0,0.16),-3px -3px 6px rgba(255,255,255,0.9);border-radius:22px;"></div><div class="t" style="left:958.2px;top:254.8px;height:29px;font:400 22px/29px 'Liberation Sans',sans-serif;color:#111;transform:scaleX(0.778);transform-origin:0 50%;-webkit-text-stroke:0.45px #111;">&lt;</div><div style="left:1029.0px;top:246.0px;width:132.5px;height:38.0px;background:#f0f0f0;border:3px solid;border-color:rgba(255,255,255,0.35) #9a9a9a #9a9a9a rgba(255,255,255,0.35);box-shadow:4px 5px 8px rgba(0,0,0,0.16),-3px -3px 6px rgba(255,255,255,0.9);border-radius:22px;"></div><div class="t" style="left:1055.2px;top:254.8px;height:29px;font:400 22px/29px 'Liberation Sans',sans-serif;color:#111;transform:scaleX(0.857);transform-origin:0 50%;-webkit-text-stroke:0.45px #111;">&gt;&gt;&gt; 0 &lt;&lt;&lt;</div><div style="left:1184.5px;top:246.0px;width:92.5px;height:38.0px;background:#f0f0f0;border:3px solid;border-color:rgba(255,255,255,0.35) #9a9a9a #9a9a9a rgba(255,255,255,0.35);box-shadow:4px 5px 8px rgba(0,0,0,0.16),-3px -3px 6px rgba(255,255,255,0.9);border-radius:22px;"></div><div class="t" style="left:1229.2px;top:254.8px;height:29px;font:400 22px/29px 'Liberation Sans',sans-serif;color:#111;transform:scaleX(0.778);transform-origin:0 50%;-webkit-text-stroke:0.45px #111;">&gt;</div><div style="left:1299.5px;top:246.0px;width:92.5px;height:38.0px;background:#f0f0f0;border:3px solid;border-color:rgba(255,255,255,0.35) #9a9a9a #9a9a9a rgba(255,255,255,0.35);box-shadow:4px 5px 8px rgba(0,0,0,0.16),-3px -3px 6px rgba(255,255,255,0.9);border-radius:22px;"></div><div class="t" style="left:1338.8px;top:254.8px;height:29px;font:400 22px/29px 'Liberation Sans',sans-serif;color:#111;transform:scaleX(0.817);transform-origin:0 50%;-webkit-text-stroke:0.45px #111;">&gt;&gt;</div><div style="left:1414.5px;top:246.0px;width:92.5px;height:38.0px;background:#f0f0f0;border:3px solid;border-color:rgba(255,255,255,0.35) #9a9a9a #9a9a9a rgba(255,255,255,0.35);box-shadow:4px 5px 8px rgba(0,0,0,0.16),-3px -3px 6px rgba(255,255,255,0.9);border-radius:22px;"></div><div class="t" style="left:1448.2px;top:254.8px;height:29px;font:400 22px/29px 'Liberation Sans',sans-serif;color:#111;transform:scaleX(0.830);transform-origin:0 50%;-webkit-text-stroke:0.45px #111;">&gt;&gt;&gt;</div><div style="left:743.5px;top:304.0px;width:122.5px;height:37.7px;background:#f0f0f0;border:3px solid;border-color:rgba(255,255,255,0.35) #9a9a9a #9a9a9a rgba(255,255,255,0.35);box-shadow:4px 5px 8px rgba(0,0,0,0.16),-3px -3px 6px rgba(255,255,255,0.9);border-radius:22px;"></div><div class="t" style="left:791.2px;top:309.6px;height:35px;font:400 27px/35px 'Liberation Sans',sans-serif;color:#111;transform:scaleX(0.756);transform-origin:0 50%;-webkit-text-stroke:0.45px #111;">CW</div><div style="left:888.5px;top:304.0px;width:121.0px;height:37.7px;background:radial-gradient(ellipse at 50% 55%,#aeeee6 0%,#c4f3ee 55%,#e6faf8 100%);border:3px solid;border-color:#8e8e8e rgba(150,150,150,0.15) rgba(150,150,150,0.1) #8e8e8e;box-shadow:2px 2px 5px rgba(0,0,0,0.06);border-radius:22px;"></div><div class="t" style="left:932.0px;top:309.6px;height:35px;font:400 27px/35px 'Liberation Sans',sans-serif;color:#111;transform:scaleX(0.803);transform-origin:0 50%;-webkit-text-stroke:0.45px #111;">LSB</div><div style="left:1034.0px;top:304.0px;width:122.5px;height:37.7px;background:#f0f0f0;border:3px solid;border-color:rgba(255,255,255,0.35) #9a9a9a #9a9a9a rgba(255,255,255,0.35);box-shadow:4px 5px 8px rgba(0,0,0,0.16),-3px -3px 6px rgba(255,255,255,0.9);border-radius:22px;"></div><div class="t" style="left:1076.8px;top:309.6px;height:35px;font:400 27px/35px 'Liberation Sans',sans-serif;color:#111;transform:scaleX(0.793);transform-origin:0 50%;-webkit-text-stroke:0.45px #111;">USB</div><div style="left:1179.5px;top:304.0px;width:122.5px;height:37.7px;background:#f0f0f0;border:3px solid;border-color:rgba(255,255,255,0.35) #9a9a9a #9a9a9a rgba(255,255,255,0.35);box-shadow:4px 5px 8px rgba(0,0,0,0.16),-3px -3px 6px rgba(255,255,255,0.9);border-radius:22px;"></div><div class="t" style="left:1226.8px;top:309.6px;height:35px;font:400 27px/35px 'Liberation Sans',sans-serif;color:#111;transform:scaleX(0.864);transform-origin:0 50%;-webkit-text-stroke:0.45px #111;">AM</div><div style="left:1324.5px;top:304.0px;width:122.5px;height:37.7px;background:#f0f0f0;border:3px solid;border-color:rgba(255,255,255,0.35) #9a9a9a #9a9a9a rgba(255,255,255,0.35);box-shadow:4px 5px 8px rgba(0,0,0,0.16),-3px -3px 6px rgba(255,255,255,0.9);border-radius:22px;"></div><div class="t" style="left:1373.2px;top:309.6px;height:35px;font:400 27px/35px 'Liberation Sans',sans-serif;color:#111;transform:scaleX(0.821);transform-origin:0 50%;-webkit-text-stroke:0.45px #111;">FM</div><div class="t" style="left:1839.0px;top:54.0px;height:38px;font:700 29px/38px 'Liberation Sans',sans-serif;color:#111;transform:scaleX(0.778);transform-origin:0 50%;">Tube &amp; DSP &amp; Audio</div><div class="t" style="left:1659.0px;top:107.5px;height:36px;font:400 28px/36px 'Liberation Sans',sans-serif;color:#111;transform:scaleX(0.838);transform-origin:0 50%;-webkit-text-stroke:0.45px #111;">Magic Eye: Off</div><div style="left:1821.0px;top:120.5px;width:361.0px;height:11.0px;background:#fff;border:2px solid #b0b0b0;border-radius:8px;"></div><div style="left:1821.0px;top:120.5px;width:320.0px;height:15.0px;background:#0075ff;border-radius:8px;"></div><div style="left:2123.0px;top:113.0px;width:30.0px;height:30.0px;background:#0075ff;border-radius:50%;"></div><div class="t" style="left:2194.5px;top:107.5px;height:36px;font:400 28px/36px 'Liberation Sans',sans-serif;color:#111;transform:scaleX(0.832);transform-origin:0 50%;-webkit-text-stroke:0.45px #111;">Max</div><div class="t" style="left:1667.0px;top:157.5px;height:36px;font:400 28px/36px 'Liberation Sans',sans-serif;color:#111;transform:scaleX(0.867);transform-origin:0 50%;-webkit-text-stroke:0.45px #111;">Mute</div><div style="left:1659.0px;top:202.0px;width:66.0px;height:35.0px;background:#f0f0f0;border:2px solid #e4e4e4;border-radius:20px;"></div><div style="left:1660.0px;top:205.5px;width:32.0px;height:32.0px;background:#f4f4f4;border-radius:50%;box-shadow:1px 3px 5px rgba(0,0,0,0.35), inset 0 0 2px rgba(0,0,0,0.1);"></div><div class="t" style="left:1797.5px;top:157.5px;height:36px;font:400 28px/36px 'Liberation Sans',sans-serif;color:#111;transform:scaleX(0.840);transform-origin:0 50%;-webkit-text-stroke:0.45px #111;">Squelch</div><div style="left:1805.0px;top:202.0px;width:66.0px;height:35.0px;background:#f0f0f0;border:2px solid #e4e4e4;border-radius:20px;"></div><div style="left:1806.0px;top:205.5px;width:32.0px;height:32.0px;background:#f4f4f4;border-radius:50%;box-shadow:1px 3px 5px rgba(0,0,0,0.35), inset 0 0 2px rgba(0,0,0,0.1);"></div><div class="t" style="left:1959.5px;top:157.5px;height:36px;font:400 28px/36px 'Liberation Sans',sans-serif;color:#111;transform:scaleX(0.872);transform-origin:0 50%;-webkit-text-stroke:0.45px #111;">Autonotch</div><div style="left:1979.5px;top:202.0px;width:66.0px;height:35.0px;background:#f0f0f0;border:2px solid #e4e4e4;border-radius:20px;"></div><div style="left:1980.5px;top:205.5px;width:32.0px;height:32.0px;background:#f4f4f4;border-radius:50%;box-shadow:1px 3px 5px rgba(0,0,0,0.35), inset 0 0 2px rgba(0,0,0,0.1);"></div><div class="t" style="left:2147.0px;top:157.5px;height:36px;font:400 28px/36px 'Liberation Sans',sans-serif;color:#111;transform:scaleX(0.847);transform-origin:0 50%;-webkit-text-stroke:0.45px #111;">Notch-2</div><div style="left:2153.5px;top:202.0px;width:66.0px;height:35.0px;background:#f0f0f0;border:2px solid #e4e4e4;border-radius:20px;"></div><div style="left:2154.5px;top:205.5px;width:32.0px;height:32.0px;background:#f4f4f4;border-radius:50%;box-shadow:1px 3px 5px rgba(0,0,0,0.35), inset 0 0 2px rgba(0,0,0,0.1);"></div><div class="t" style="left:1642.5px;top:285.0px;height:38px;font:700 29px/38px 'Liberation Sans',sans-serif;color:#111;transform:scaleX(0.782);transform-origin:0 50%;">DSP Noise Reduction:</div><div style="left:1898.5px;top:283.0px;width:137.5px;height:36.5px;background:#fff;border:2px solid #6a6a6a;border-radius:20px;"></div><div class="t" style="left:1909.0px;top:283.5px;height:38px;font:400 29px/38px 'Liberation Sans',sans-serif;color:#111;transform:scaleX(0.917);transform-origin:0 50%;-webkit-text-stroke:0.45px #111;">Off</div><svg class="abs" style="left:2012px;top:294px" width="20" height="16" viewBox="0 0 20 16"><path d="M2.5 4 L10 11.5 L17.5 4" fill="none" stroke="#111" stroke-width="2"/></svg><div style="left:2064.5px;top:283.5px;width:66.0px;height:35.0px;background:#f0f0f0;border:2px solid #e4e4e4;border-radius:20px;"></div><div style="left:2065.5px;top:287.0px;width:32.0px;height:32.0px;background:#f4f4f4;border-radius:50%;box-shadow:1px 3px 5px rgba(0,0,0,0.35), inset 0 0 2px rgba(0,0,0,0.1);"></div><div class="t" style="left:2149.5px;top:285.0px;height:36px;font:400 28px/36px 'Liberation Sans',sans-serif;color:#111;transform:scaleX(0.852);transform-origin:0 50%;-webkit-text-stroke:0.45px #111;">Hi-Boost</div></div>
</body></html>
